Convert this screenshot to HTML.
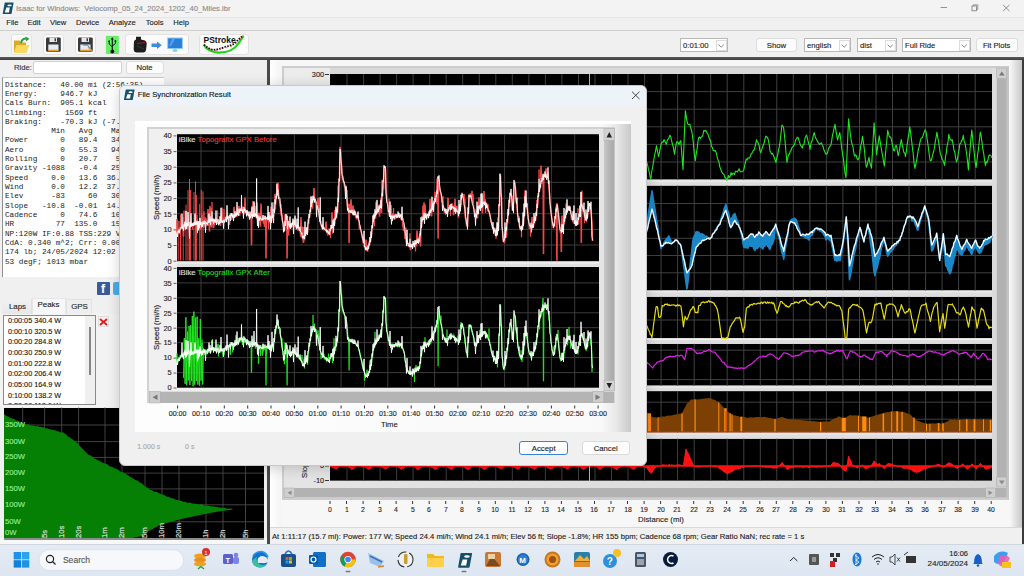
<!DOCTYPE html><html><head><meta charset="utf-8"><style>
*{margin:0;padding:0;box-sizing:border-box}
html,body{width:1024px;height:576px;overflow:hidden;background:#f0f0f0;font-family:"Liberation Sans",sans-serif;}
.t{position:absolute;white-space:pre;font-size:9px;line-height:10px;color:#1a1a1a;-webkit-text-stroke:0.12px currentColor}
.m{position:absolute;white-space:pre;font-family:"Liberation Mono",monospace;font-size:7.7px;line-height:9.32px;color:#222}
svg{position:absolute;left:0;top:0}
</style></head><body>
<div style="position:absolute;left:0px;top:0px;width:1024px;height:17px;background:#f3f3f3"></div>
<div style="position:absolute;left:0px;top:17px;width:1024px;height:13px;background:#f0f0f0"></div>
<div style="position:absolute;left:0px;top:17px;width:1024px;height:1px;background:#e6e6e6"></div>
<div style="position:absolute;left:0px;top:29.6px;width:1024px;height:1.1999999999999993px;background:#cdcdcd"></div>
<div style="position:absolute;left:0px;top:31px;width:1024px;height:26px;background:#f0f0f0"></div>
<div style="position:absolute;left:0px;top:57px;width:1024px;height:3px;background:linear-gradient(#5a5a5a,#3e3e3e)"></div>
<svg width="20" height="20" style="left:0px;top:0px"><path d="M5.2 2.6 L13.2 2.6 Q13.6 2.6 13.5 3.2 L11.6 13.4 Q11.5 14 10.9 14 L3.2 14 Q2.7 14 2.8 13.4 L4.6 3.2 Q4.7 2.6 5.2 2.6 Z" fill="#15506a"/><ellipse cx="9.6" cy="5.4" rx="2.2" ry="0.9" fill="#fff"/><path d="M6.3 7.6 L9.8 7.6 L9 12.4 L4.8 12.4 Z" fill="#fff"/></svg>
<div class="t" style="left:16px;transform-origin:0 50%;top:4px;font-size:7.6px;color:#8a8a8a;">Isaac for Windows:  Velocomp_05_24_2024_1202_40_Miles.ibr</div>
<svg width="1024" height="17"><line x1="940.6" y1="7.5" x2="947" y2="7.5" stroke="#777" stroke-width="0.8"/><rect x="972" y="6" width="4.6" height="4.8" fill="none" stroke="#777" stroke-width="0.8"/><path d="M973.4 6 L973.4 4.8 L977.8 4.8 L977.8 9.4 L976.6 9.4" fill="none" stroke="#777" stroke-width="0.7"/><path d="M1003 4.8 L1009.5 11.2 M1009.5 4.8 L1003 11.2" stroke="#777" stroke-width="0.8"/></svg>
<div class="t" style="left:6.25px;transform-origin:0 50%;top:17.9px;font-size:7.6px;color:#222;">File</div>
<div class="t" style="left:27.5px;transform-origin:0 50%;top:17.9px;font-size:7.6px;color:#222;">Edit</div>
<div class="t" style="left:50px;transform-origin:0 50%;top:17.9px;font-size:7.6px;color:#222;">View</div>
<div class="t" style="left:76px;transform-origin:0 50%;top:17.9px;font-size:7.6px;color:#222;">Device</div>
<div class="t" style="left:108.75px;transform-origin:0 50%;top:17.9px;font-size:7.6px;color:#222;">Analyze</div>
<div class="t" style="left:145.75px;transform-origin:0 50%;top:17.9px;font-size:7.6px;color:#222;">Tools</div>
<div class="t" style="left:173.25px;transform-origin:0 50%;top:17.9px;font-size:7.6px;color:#222;">Help</div>
<div style="position:absolute;left:11px;top:34px;width:21px;height:21px;background:#fbfbfb;border:1px solid #e2e2e2;border-radius:3px"></div>
<div style="position:absolute;left:43px;top:34px;width:21px;height:21px;background:#fbfbfb;border:1px solid #e2e2e2;border-radius:3px"></div>
<div style="position:absolute;left:75px;top:34px;width:21px;height:21px;background:#fbfbfb;border:1px solid #e2e2e2;border-radius:3px"></div>
<div style="position:absolute;left:125px;top:34px;width:64px;height:21px;background:#fbfbfb;border:1px solid #e2e2e2;border-radius:3px"></div>
<div style="position:absolute;left:199px;top:34px;width:50px;height:21px;background:#fbfbfb;border:1px solid #e2e2e2;border-radius:3px"></div>
<svg width="260" height="60">
<path d="M14 40.5 L19.5 40.5 L21 42.5 L26 42.5 L26 52.8 L14 52.8 Z" fill="#e0a820"/>
<path d="M16.5 45 L29.5 45 L26.5 53 L13.8 53 Z" fill="#fad860"/>
<path d="M21 43 Q22 38 27 38.5" stroke="#30a040" stroke-width="2" fill="none"/><path d="M25.5 36.5 L29.5 38.8 L26 41.5 Z" fill="#30a040"/>
<rect x="46" y="37.6" width="14.8" height="14.1" rx="1.2" fill="#3a3a3a"/>
<rect x="49.5" y="37.6" width="7.5" height="4.4" fill="#e8e8e8"/><rect x="54.5" y="38.3" width="1.5" height="3" fill="#3a3a3a"/>
<rect x="48.3" y="44.5" width="10.2" height="6" fill="#e6ecf2"/>
<rect x="48.3" y="49.6" width="10.2" height="1.3" fill="#f0a030"/>
<rect x="78" y="37.6" width="14.8" height="14.1" rx="1.2" fill="#3a3a3a"/>
<rect x="81.5" y="37.6" width="7.5" height="4.4" fill="#e8e8e8"/><rect x="86.5" y="38.3" width="1.5" height="3" fill="#3a3a3a"/>
<rect x="80.3" y="44.5" width="10.2" height="6" fill="#e6ecf2"/>
<rect x="80.3" y="49.6" width="10.2" height="1.3" fill="#f0a030"/>
<path d="M83 45 L87.5 45 L92 51" stroke="#3a70c0" stroke-width="1" fill="none"/><path d="M88 47 L92.5 51.5" stroke="#e0a040" stroke-width="1.5"/>
<rect x="105.9" y="35.9" width="12.9" height="18.1" fill="#66ee66"/>
<path d="M112.3 38 L112.3 51" stroke="#111" stroke-width="1.1"/><path d="M110.8 39.5 L112.3 37.3 L113.8 39.5 Z" fill="#111"/>
<path d="M109.2 41.5 L109.2 44 L112.3 47 M115.4 41 L115.4 43.5 L112.3 46" stroke="#111" stroke-width="1" fill="none"/>
<rect x="108.4" y="40.5" width="1.6" height="1.6" fill="#111"/><circle cx="115.4" cy="41" r="0.9" fill="#111"/>
<circle cx="112.3" cy="51.5" r="1.9" fill="#111"/>
<path d="M136 36.8 L141 36.8 L141 39.5 L145 40.5 Q147 41.5 146.7 44 L146 50 Q145.5 52.6 142 52.6 L137 52.6 Q133.7 52.6 133.7 49 L133.9 42 Q134 40 136 39.5 Z" fill="#1e1e1e"/>
<path d="M137 43.5 L145 42.5" stroke="#b02020" stroke-width="0.9"/><path d="M137 46 L144 49" stroke="#444" stroke-width="0.6"/>
<path d="M151.5 43.6 L157 43.6 L157 41.6 L161.7 45.3 L157 49.1 L157 47.1 L151.5 47.1 Z" fill="#3a8ee0"/>
<rect x="167.2" y="37.5" width="15.7" height="11.5" fill="#8ac8f4"/><rect x="168.2" y="38.5" width="13.7" height="9.5" fill="#2a7ed8"/>
<path d="M169 46 L172 39 L175 39 L171 46 Z" fill="#6ab0f0" opacity="0.7"/>
<path d="M173.5 49 L176.6 49 L177.5 51.8 L172.5 51.8 Z" fill="#8ac8f4"/>
<text x="203.5" y="43.3" font-family="Liberation Sans" font-weight="bold" font-size="8.5" fill="#111">PStroke</text>
<path d="M203.5 44.5 Q208 52 218 52.6 Q232 53 238 44 Q241 40 243.5 36" stroke="#18d818" stroke-width="2.2" fill="none"/>
<path d="M204 44.8 L208 48 L213 50 L217 49.5 L221 48.5 L225 47 L229 46 L234 44 L238 40 L242 36.5" stroke="#111" stroke-width="1.8" fill="none" stroke-dasharray="1.6 1.2"/>
<circle cx="205.5" cy="46" r="0.8" fill="#ff6060"/><circle cx="210.5" cy="49.4" r="0.8" fill="#ff6060"/><circle cx="216" cy="50.5" r="0.8" fill="#ff6060"/><circle cx="221" cy="48.3" r="0.8" fill="#ff6060"/><circle cx="226" cy="47.5" r="0.8" fill="#ff6060"/><circle cx="231" cy="46.5" r="0.8" fill="#ff6060"/><circle cx="236.5" cy="43" r="0.8" fill="#ff6060"/><circle cx="241" cy="38.5" r="0.8" fill="#ff6060"/><circle cx="243" cy="36" r="0.8" fill="#ff6060"/>
</svg>
<div style="position:absolute;left:680px;top:38px;width:48px;height:14px;background:#fff;border:1px solid #b8b8b8"></div><div style="position:absolute;left:716px;top:39.5px;width:10.5px;height:11.0px;background:#fff;border:1px solid #dcdcdc"></div><svg width="1024" height="60"><path d="M718.6 44.6 L721.2 47.2 L723.8000000000001 44.6" stroke="#666" stroke-width="0.8" fill="none"/></svg><div class="t" style="left:683px;transform-origin:0 50%;top:40.5px;font-size:7.7px;color:#222;">0:01:00</div>
<div style="position:absolute;left:756px;top:38px;width:41px;height:14px;background:#fbfbfb;border:1px solid #dcdcdc;border-radius:3px"></div>
<div class="t" style="left:776.5px;transform:translateX(-50%);top:40.5px;font-size:7.8px;color:#222;">Show</div>
<div style="position:absolute;left:804px;top:38px;width:47px;height:14px;background:#fff;border:1px solid #b8b8b8"></div><div style="position:absolute;left:839px;top:39.5px;width:10.5px;height:11.0px;background:#fff;border:1px solid #dcdcdc"></div><svg width="1024" height="60"><path d="M841.6 44.6 L844.2 47.2 L846.8000000000001 44.6" stroke="#666" stroke-width="0.8" fill="none"/></svg><div class="t" style="left:807px;transform-origin:0 50%;top:40.5px;font-size:7.7px;color:#222;">english</div>
<div style="position:absolute;left:857px;top:38px;width:40px;height:14px;background:#fff;border:1px solid #b8b8b8"></div><div style="position:absolute;left:885px;top:39.5px;width:10.5px;height:11.0px;background:#fff;border:1px solid #dcdcdc"></div><svg width="1024" height="60"><path d="M887.6 44.6 L890.2 47.2 L892.8000000000001 44.6" stroke="#666" stroke-width="0.8" fill="none"/></svg><div class="t" style="left:860px;transform-origin:0 50%;top:40.5px;font-size:7.7px;color:#222;">dist</div>
<div style="position:absolute;left:902px;top:38px;width:69px;height:14px;background:#fff;border:1px solid #b8b8b8"></div><div style="position:absolute;left:959px;top:39.5px;width:10.5px;height:11.0px;background:#fff;border:1px solid #dcdcdc"></div><svg width="1024" height="60"><path d="M961.6 44.6 L964.2 47.2 L966.8000000000001 44.6" stroke="#666" stroke-width="0.8" fill="none"/></svg><div class="t" style="left:905px;transform-origin:0 50%;top:40.5px;font-size:7.7px;color:#222;">Full Ride</div>
<div style="position:absolute;left:976px;top:38px;width:42px;height:14px;background:#fbfbfb;border:1px solid #dcdcdc;border-radius:3px"></div>
<div class="t" style="left:996.7px;transform:translateX(-50%);top:40.5px;font-size:7.6px;color:#222;">Fit Plots</div>
<div class="t" style="left:14px;transform-origin:0 50%;top:62.599999999999994px;font-size:7.7px;color:#333;">Ride:</div>
<div style="position:absolute;left:33px;top:61px;width:89px;height:13px;background:#fff;border:1px solid #d0d0d0;border-radius:2px"></div>
<div style="position:absolute;left:126px;top:61px;width:38px;height:13px;background:#fbfbfb;border:1px solid #dcdcdc;border-radius:3px"></div>
<div class="t" style="left:144.5px;transform:translateX(-50%);top:62.7px;font-size:7.7px;color:#222;">Note</div>
<div style="position:absolute;left:164px;top:60px;width:103px;height:238px;background:linear-gradient(#efefef,#e6e6e6)"></div>
<div style="position:absolute;left:2px;top:77px;width:162px;height:200px;background:#fff;border-left:1px solid #909090;border-top:1px solid #c8c8c8"></div>
<div class="m" style="left:5px;top:80.54px">Distance:   40.00 mi (2:56:35)</div>
<div class="m" style="left:5px;top:89.86px">Energy:     946.7 kJ</div>
<div class="m" style="left:5px;top:99.18px">Cals Burn:  905.1 kcal</div>
<div class="m" style="left:5px;top:108.50px">Climbing:    1569 ft</div>
<div class="m" style="left:5px;top:117.82px">Braking:    -70.3 kJ (-7.1%)</div>
<div class="m" style="left:5px;top:127.14px">          Min   Avg    Max</div>
<div class="m" style="left:5px;top:136.46px">Power       0   89.4   340</div>
<div class="m" style="left:5px;top:145.78px">Aero        0   55.3   94</div>
<div class="m" style="left:5px;top:155.10px">Rolling     0   20.7    50</div>
<div class="m" style="left:5px;top:164.42px">Gravity -1088   -0.4   250</div>
<div class="m" style="left:5px;top:173.74px">Speed     0.0   13.6  36.5</div>
<div class="m" style="left:5px;top:183.06px">Wind      0.0   12.2  37.</div>
<div class="m" style="left:5px;top:192.38px">Elev      -83     60   30</div>
<div class="m" style="left:5px;top:201.70px">Slope   -10.8  -0.01  14.</div>
<div class="m" style="left:5px;top:211.02px">Cadence     0   74.6   10</div>
<div class="m" style="left:5px;top:220.34px">HR         77  135.0   15</div>
<div class="m" style="left:5px;top:229.66px">NP:120W IF:0.88 TSS:229 VI</div>
<div class="m" style="left:5px;top:238.98px">CdA: 0.340 m^2; Crr: 0.006</div>
<div class="m" style="left:5px;top:248.30px">174 lb; 24/05/2024 12:02</div>
<div class="m" style="left:5px;top:257.62px">53 degF; 1013 mbar</div>
<div style="position:absolute;left:97px;top:282px;width:13px;height:13px;background:#3b5a9a;border-radius:1px"></div>
<div class="t" style="left:101px;top:282px;color:#fff;font-weight:bold;font-size:12px;line-height:14px">f</div>
<div style="position:absolute;left:113px;top:282px;width:13px;height:13px;background:#4aaee8;border-radius:2px"></div>
<div style="position:absolute;left:2px;top:299px;width:30px;height:15px;background:linear-gradient(#f0f0f0,#e8e8e8);border-right:1px solid #e0e0e0"></div>
<div style="position:absolute;left:32px;top:297.5px;width:34px;height:17.5px;background:#f7f7f7;border:1px solid #e6e6e6;border-bottom:none"></div>
<div style="position:absolute;left:66px;top:299px;width:26px;height:15px;background:#efefef;border:1px solid #e2e2e2;border-bottom:none"></div>
<div class="t" style="left:17.5px;transform:translateX(-50%);top:301.9px;font-size:7.9px;color:#222;">Laps</div>
<div class="t" style="left:48.5px;transform:translateX(-50%);top:300.2px;font-size:7.9px;color:#222;">Peaks</div>
<div class="t" style="left:79.5px;transform:translateX(-50%);top:301.9px;font-size:7.9px;color:#222;">GPS</div>
<div style="position:absolute;left:0px;top:314px;width:119px;height:93px;background:#f3f3f3"></div>
<div style="position:absolute;left:3px;top:315px;width:93px;height:90px;background:#fff;border:1px solid #8a8a8a"></div>
<div style="position:absolute;left:84.5px;top:316px;width:10.5px;height:88px;background:#f0f0f0"></div>
<div style="position:absolute;left:89px;top:327px;width:1.5px;height:48px;background:#858585"></div>
<div style="position:absolute;left:4px;top:316px;width:80px;height:88px;overflow:hidden">
<div class="t" style="left:3.9000000000000004px;transform-origin:0 50%;transform: scaleX(0.895);top:0.19999999999998863px;font-size:8.1px;color:#111;">0:00:05 340.4 W</div>
<div class="t" style="left:3.9000000000000004px;transform-origin:0 50%;transform: scaleX(0.895);top:10.829999999999984px;font-size:8.1px;color:#111;">0:00:10 320.5 W</div>
<div class="t" style="left:3.9000000000000004px;transform-origin:0 50%;transform: scaleX(0.895);top:21.45999999999998px;font-size:8.1px;color:#111;">0:00:20 284.8 W</div>
<div class="t" style="left:3.9000000000000004px;transform-origin:0 50%;transform: scaleX(0.895);top:32.089999999999975px;font-size:8.1px;color:#111;">0:00:30 250.9 W</div>
<div class="t" style="left:3.9000000000000004px;transform-origin:0 50%;transform: scaleX(0.895);top:42.71999999999997px;font-size:8.1px;color:#111;">0:01:00 222.8 W</div>
<div class="t" style="left:3.9000000000000004px;transform-origin:0 50%;transform: scaleX(0.895);top:53.35000000000002px;font-size:8.1px;color:#111;">0:02:00 206.4 W</div>
<div class="t" style="left:3.9000000000000004px;transform-origin:0 50%;transform: scaleX(0.895);top:63.98000000000002px;font-size:8.1px;color:#111;">0:05:00 164.9 W</div>
<div class="t" style="left:3.9000000000000004px;transform-origin:0 50%;transform: scaleX(0.895);top:74.61000000000001px;font-size:8.1px;color:#111;">0:10:00 138.2 W</div>
<div class="t" style="left:3.9000000000000004px;transform-origin:0 50%;transform: scaleX(0.895);top:85.24000000000001px;font-size:8.1px;color:#111;">0:20:00 118.6 W</div>
</div>
<div style="position:absolute;left:98px;top:316px;width:11px;height:11px;background:#f4f4f4;border:1px solid #ddd"></div>
<svg width="120" height="330"><path d="M100 319 L107 325 M107 319 L100 325" stroke="#e02020" stroke-width="2"/></svg>
<div style="position:absolute;left:4px;top:407.5px;width:260px;height:130.5px;background:#000"></div>
<svg width="270" height="545"><line x1="22.7" y1="407.5" x2="22.7" y2="538" stroke="#4a4a4a" stroke-width="0.9"/><line x1="44.6" y1="407.5" x2="44.6" y2="538" stroke="#4a4a4a" stroke-width="0.9"/><line x1="61.7" y1="407.5" x2="61.7" y2="538" stroke="#4a4a4a" stroke-width="0.9"/><line x1="78.6" y1="407.5" x2="78.6" y2="538" stroke="#4a4a4a" stroke-width="0.9"/><line x1="105" y1="407.5" x2="105" y2="538" stroke="#4a4a4a" stroke-width="0.9"/><line x1="122" y1="407.5" x2="122" y2="538" stroke="#4a4a4a" stroke-width="0.9"/><line x1="145" y1="407.5" x2="145" y2="538" stroke="#4a4a4a" stroke-width="0.9"/><line x1="162" y1="407.5" x2="162" y2="538" stroke="#4a4a4a" stroke-width="0.9"/><line x1="179" y1="407.5" x2="179" y2="538" stroke="#4a4a4a" stroke-width="0.9"/><line x1="206" y1="407.5" x2="206" y2="538" stroke="#4a4a4a" stroke-width="0.9"/><line x1="223" y1="407.5" x2="223" y2="538" stroke="#4a4a4a" stroke-width="0.9"/><line x1="245.5" y1="407.5" x2="245.5" y2="538" stroke="#4a4a4a" stroke-width="0.9"/><line x1="4" y1="425" x2="264" y2="425" stroke="#4a4a4a" stroke-width="0.9"/><line x1="4" y1="441.6" x2="264" y2="441.6" stroke="#4a4a4a" stroke-width="0.9"/><line x1="4" y1="457.4" x2="264" y2="457.4" stroke="#4a4a4a" stroke-width="0.9"/><line x1="4" y1="473.1" x2="264" y2="473.1" stroke="#4a4a4a" stroke-width="0.9"/><line x1="4" y1="488.9" x2="264" y2="488.9" stroke="#4a4a4a" stroke-width="0.9"/><line x1="4" y1="504.8" x2="264" y2="504.8" stroke="#4a4a4a" stroke-width="0.9"/><line x1="4" y1="521.8" x2="264" y2="521.8" stroke="#4a4a4a" stroke-width="0.9"/><polygon points="4.0,414.3 5.7,415.5 7.4,416.2 9.2,417.3 10.9,418.2 12.6,418.5 14.2,419.1 15.8,420.5 17.3,420.6 18.9,421.2 20.5,422.6 22.0,422.7 23.6,423.7 25.2,424.0 26.8,424.4 28.3,424.3 29.9,425.0 31.5,425.6 33.1,425.5 34.6,426.0 36.2,426.3 37.8,426.0 39.4,427.0 40.9,427.1 42.5,427.2 44.1,427.2 45.7,428.4 47.2,428.3 48.8,428.9 50.4,429.4 52.0,429.7 53.5,430.3 55.1,430.3 56.7,431.2 58.3,431.3 59.9,432.2 61.4,432.6 63.0,432.3 64.6,433.4 66.2,434.6 67.7,436.5 69.3,437.1 70.9,438.4 72.4,439.2 74.0,440.5 75.6,441.5 77.2,443.0 78.8,444.8 80.3,446.4 81.9,448.3 83.5,449.7 85.0,451.5 86.6,453.0 88.2,454.7 89.8,455.3 91.3,455.7 92.9,457.4 94.5,458.4 96.1,459.3 97.7,459.9 99.2,461.0 100.8,461.4 102.4,462.8 104.1,463.3 105.7,463.8 107.3,464.3 108.9,465.8 110.6,466.7 112.2,466.6 113.7,468.1 115.2,468.4 116.7,468.9 118.2,469.8 119.8,471.1 121.3,471.9 122.8,471.9 124.3,473.2 125.8,473.6 127.3,475.1 128.9,475.7 130.4,477.1 131.9,478.1 133.4,478.6 135.0,480.0 136.5,480.2 138.0,481.0 139.6,482.6 141.1,483.1 142.6,484.3 144.1,485.6 145.6,486.9 147.2,487.5 148.7,488.4 150.2,489.9 151.7,489.9 153.2,491.2 154.8,491.7 156.3,491.8 157.8,492.5 159.3,493.2 160.8,493.9 162.3,494.5 163.9,495.1 165.4,495.8 166.9,496.7 168.4,496.9 169.9,497.4 171.5,498.3 173.0,498.4 174.5,499.0 176.1,500.1 177.6,500.1 179.1,500.5 180.6,500.5 182.1,501.3 183.7,501.9 185.2,501.8 186.7,502.6 188.3,502.9 189.8,502.5 191.4,503.3 192.9,503.4 194.5,503.8 196.0,503.7 197.6,504.3 199.1,504.6 200.7,504.1 202.2,504.4 203.8,505.2 205.4,505.8 207.1,505.4 208.7,505.8 210.3,506.2 211.9,506.2 213.6,506.5 215.2,506.7 216.8,507.1 218.4,507.5 220.0,507.4 221.5,507.6 223.1,508.2 224.7,507.7 226.3,508.4 227.9,508.8 229.4,508.5 231.0,508.6 232.6,509.1 232.6,509.4 216.8,511.7 197.3,515.4 180.3,519.3 160.8,524.4 148.7,531.1 141.4,536.2 134.0,537.6 134.0,538.0 4.0,538.0" fill="#058005"/></svg>
<div class="t" style="left:5px;transform-origin:0 50%;top:420.2px;font-size:7.7px;color:#98f098;">350W</div>
<div class="t" style="left:5px;transform-origin:0 50%;top:436.6px;font-size:7.7px;color:#98f098;">300W</div>
<div class="t" style="left:5px;transform-origin:0 50%;top:452.4px;font-size:7.7px;color:#98f098;">250W</div>
<div class="t" style="left:5px;transform-origin:0 50%;top:468.1px;font-size:7.7px;color:#98f098;">200W</div>
<div class="t" style="left:5px;transform-origin:0 50%;top:483.9px;font-size:7.7px;color:#98f098;">150W</div>
<div class="t" style="left:5px;transform-origin:0 50%;top:499.8px;font-size:7.7px;color:#98f098;">100W</div>
<div class="t" style="left:5px;transform-origin:0 50%;top:516.8px;font-size:7.7px;color:#98f098;">50W</div>
<div class="t" style="left:5px;transform-origin:0 50%;top:527.8px;font-size:7.7px;color:#98f098;">0W</div>
<div class="t" style="left:39.6px;top:537.5px;transform-origin:0 0;transform:rotate(-90deg);color:#e0e8e0;font-size:7.7px">5s</div>
<div class="t" style="left:56.7px;top:537.5px;transform-origin:0 0;transform:rotate(-90deg);color:#e0e8e0;font-size:7.7px">10s</div>
<div class="t" style="left:73.6px;top:537.5px;transform-origin:0 0;transform:rotate(-90deg);color:#e0e8e0;font-size:7.7px">20s</div>
<div class="t" style="left:100px;top:537.5px;transform-origin:0 0;transform:rotate(-90deg);color:#e0e8e0;font-size:7.7px">1m</div>
<div class="t" style="left:117px;top:537.5px;transform-origin:0 0;transform:rotate(-90deg);color:#e0e8e0;font-size:7.7px">2m</div>
<div class="t" style="left:140px;top:537.5px;transform-origin:0 0;transform:rotate(-90deg);color:#e0e8e0;font-size:7.7px">5m</div>
<div class="t" style="left:157px;top:537.5px;transform-origin:0 0;transform:rotate(-90deg);color:#e0e8e0;font-size:7.7px">10m</div>
<div class="t" style="left:174px;top:537.5px;transform-origin:0 0;transform:rotate(-90deg);color:#e0e8e0;font-size:7.7px">20m</div>
<div class="t" style="left:201px;top:537.5px;transform-origin:0 0;transform:rotate(-90deg);color:#e0e8e0;font-size:7.7px">1h</div>
<div class="t" style="left:218px;top:537.5px;transform-origin:0 0;transform:rotate(-90deg);color:#e0e8e0;font-size:7.7px">2h</div>
<div class="t" style="left:240.5px;top:537.5px;transform-origin:0 0;transform:rotate(-90deg);color:#e0e8e0;font-size:7.7px">5h</div>
<div style="position:absolute;left:0px;top:538px;width:267px;height:6px;background:#f8f8f8"></div>
<div style="position:absolute;left:3.5px;top:538.3px;width:260.5px;height:1.7000000000000455px;background:#8c8c8c"></div>
<div style="position:absolute;left:267px;top:60px;width:3px;height:484px;background:#4a4a4a"></div>
<div style="position:absolute;left:270px;top:60px;width:754px;height:467px;background:#f7f7f7"></div>
<div style="position:absolute;left:270px;top:60px;width:11px;height:467px;background:linear-gradient(90deg,#fff,#f4f4f4)"></div>
<div style="position:absolute;left:1010px;top:60px;width:12px;height:467px;background:linear-gradient(90deg,#f6f6f6,#c8c8c8)"></div>
<div style="position:absolute;left:1022px;top:60px;width:2px;height:484px;background:#3a3a3a"></div>
<div style="position:absolute;left:281.5px;top:65.5px;width:727.5px;height:434.5px;background:linear-gradient(#e2e2e2,#d8d8d8);border:2px solid #cdcdcd;border-right-color:#c4c4c4"></div>
<div style="position:absolute;left:283.5px;top:68px;width:723.5px;height:430px;background:linear-gradient(135deg,#ececec,#d6d6d6)"></div>
<svg width="1024" height="576"><rect x="330" y="68" width="662" height="413" fill="#d9d9d9"/><rect x="330" y="74" width="662" height="105.6" fill="#000"/><rect x="330" y="185.6" width="662" height="104.79999999999998" fill="#000"/><rect x="330" y="296.8" width="662" height="41.19999999999999" fill="#000"/><rect x="330" y="343.9" width="662" height="41.700000000000045" fill="#000"/><rect x="330" y="391.1" width="662" height="41.19999999999999" fill="#000"/><rect x="330" y="438.7" width="662" height="41.900000000000034" fill="#000"/><rect x="330" y="179.6" width="662" height="6.0" fill="#dedede"/><line x1="330" y1="181.1" x2="992" y2="181.1" stroke="#f0f0f0" stroke-width="1"/><rect x="330" y="290.4" width="662" height="6.400000000000034" fill="#dedede"/><line x1="330" y1="291.9" x2="992" y2="291.9" stroke="#f0f0f0" stroke-width="1"/><rect x="330" y="338" width="662" height="5.899999999999977" fill="#dedede"/><line x1="330" y1="339.5" x2="992" y2="339.5" stroke="#f0f0f0" stroke-width="1"/><rect x="330" y="385.6" width="662" height="5.5" fill="#dedede"/><line x1="330" y1="387.1" x2="992" y2="387.1" stroke="#f0f0f0" stroke-width="1"/><rect x="330" y="432.3" width="662" height="6.399999999999977" fill="#dedede"/><line x1="330" y1="433.8" x2="992" y2="433.8" stroke="#f0f0f0" stroke-width="1"/><line x1="347.0" y1="74" x2="347.0" y2="179.6" stroke="#404040" stroke-width="1"/><line x1="363.6" y1="74" x2="363.6" y2="179.6" stroke="#404040" stroke-width="1"/><line x1="380.1" y1="74" x2="380.1" y2="179.6" stroke="#404040" stroke-width="1"/><line x1="396.6" y1="74" x2="396.6" y2="179.6" stroke="#404040" stroke-width="1"/><line x1="413.1" y1="74" x2="413.1" y2="179.6" stroke="#404040" stroke-width="1"/><line x1="429.7" y1="74" x2="429.7" y2="179.6" stroke="#404040" stroke-width="1"/><line x1="446.2" y1="74" x2="446.2" y2="179.6" stroke="#404040" stroke-width="1"/><line x1="462.7" y1="74" x2="462.7" y2="179.6" stroke="#404040" stroke-width="1"/><line x1="479.3" y1="74" x2="479.3" y2="179.6" stroke="#404040" stroke-width="1"/><line x1="495.8" y1="74" x2="495.8" y2="179.6" stroke="#404040" stroke-width="1"/><line x1="512.3" y1="74" x2="512.3" y2="179.6" stroke="#404040" stroke-width="1"/><line x1="528.9" y1="74" x2="528.9" y2="179.6" stroke="#404040" stroke-width="1"/><line x1="545.4" y1="74" x2="545.4" y2="179.6" stroke="#404040" stroke-width="1"/><line x1="561.9" y1="74" x2="561.9" y2="179.6" stroke="#404040" stroke-width="1"/><line x1="578.5" y1="74" x2="578.5" y2="179.6" stroke="#404040" stroke-width="1"/><line x1="595.0" y1="74" x2="595.0" y2="179.6" stroke="#404040" stroke-width="1"/><line x1="611.5" y1="74" x2="611.5" y2="179.6" stroke="#404040" stroke-width="1"/><line x1="628.0" y1="74" x2="628.0" y2="179.6" stroke="#404040" stroke-width="1"/><line x1="644.6" y1="74" x2="644.6" y2="179.6" stroke="#404040" stroke-width="1"/><line x1="661.1" y1="74" x2="661.1" y2="179.6" stroke="#404040" stroke-width="1"/><line x1="677.6" y1="74" x2="677.6" y2="179.6" stroke="#404040" stroke-width="1"/><line x1="694.2" y1="74" x2="694.2" y2="179.6" stroke="#404040" stroke-width="1"/><line x1="710.7" y1="74" x2="710.7" y2="179.6" stroke="#404040" stroke-width="1"/><line x1="727.2" y1="74" x2="727.2" y2="179.6" stroke="#404040" stroke-width="1"/><line x1="743.8" y1="74" x2="743.8" y2="179.6" stroke="#404040" stroke-width="1"/><line x1="760.3" y1="74" x2="760.3" y2="179.6" stroke="#404040" stroke-width="1"/><line x1="776.8" y1="74" x2="776.8" y2="179.6" stroke="#404040" stroke-width="1"/><line x1="793.3" y1="74" x2="793.3" y2="179.6" stroke="#404040" stroke-width="1"/><line x1="809.9" y1="74" x2="809.9" y2="179.6" stroke="#404040" stroke-width="1"/><line x1="826.4" y1="74" x2="826.4" y2="179.6" stroke="#404040" stroke-width="1"/><line x1="842.9" y1="74" x2="842.9" y2="179.6" stroke="#404040" stroke-width="1"/><line x1="859.5" y1="74" x2="859.5" y2="179.6" stroke="#404040" stroke-width="1"/><line x1="876.0" y1="74" x2="876.0" y2="179.6" stroke="#404040" stroke-width="1"/><line x1="892.5" y1="74" x2="892.5" y2="179.6" stroke="#404040" stroke-width="1"/><line x1="909.1" y1="74" x2="909.1" y2="179.6" stroke="#404040" stroke-width="1"/><line x1="925.6" y1="74" x2="925.6" y2="179.6" stroke="#404040" stroke-width="1"/><line x1="942.1" y1="74" x2="942.1" y2="179.6" stroke="#404040" stroke-width="1"/><line x1="958.6" y1="74" x2="958.6" y2="179.6" stroke="#404040" stroke-width="1"/><line x1="975.2" y1="74" x2="975.2" y2="179.6" stroke="#404040" stroke-width="1"/><line x1="330" y1="91.6" x2="992" y2="91.6" stroke="#404040" stroke-width="1"/><line x1="330" y1="109.2" x2="992" y2="109.2" stroke="#404040" stroke-width="1"/><line x1="330" y1="126.8" x2="992" y2="126.8" stroke="#404040" stroke-width="1"/><line x1="330" y1="144.4" x2="992" y2="144.4" stroke="#404040" stroke-width="1"/><line x1="330" y1="162" x2="992" y2="162" stroke="#404040" stroke-width="1"/><line x1="347.0" y1="185.6" x2="347.0" y2="290.4" stroke="#404040" stroke-width="1"/><line x1="363.6" y1="185.6" x2="363.6" y2="290.4" stroke="#404040" stroke-width="1"/><line x1="380.1" y1="185.6" x2="380.1" y2="290.4" stroke="#404040" stroke-width="1"/><line x1="396.6" y1="185.6" x2="396.6" y2="290.4" stroke="#404040" stroke-width="1"/><line x1="413.1" y1="185.6" x2="413.1" y2="290.4" stroke="#404040" stroke-width="1"/><line x1="429.7" y1="185.6" x2="429.7" y2="290.4" stroke="#404040" stroke-width="1"/><line x1="446.2" y1="185.6" x2="446.2" y2="290.4" stroke="#404040" stroke-width="1"/><line x1="462.7" y1="185.6" x2="462.7" y2="290.4" stroke="#404040" stroke-width="1"/><line x1="479.3" y1="185.6" x2="479.3" y2="290.4" stroke="#404040" stroke-width="1"/><line x1="495.8" y1="185.6" x2="495.8" y2="290.4" stroke="#404040" stroke-width="1"/><line x1="512.3" y1="185.6" x2="512.3" y2="290.4" stroke="#404040" stroke-width="1"/><line x1="528.9" y1="185.6" x2="528.9" y2="290.4" stroke="#404040" stroke-width="1"/><line x1="545.4" y1="185.6" x2="545.4" y2="290.4" stroke="#404040" stroke-width="1"/><line x1="561.9" y1="185.6" x2="561.9" y2="290.4" stroke="#404040" stroke-width="1"/><line x1="578.5" y1="185.6" x2="578.5" y2="290.4" stroke="#404040" stroke-width="1"/><line x1="595.0" y1="185.6" x2="595.0" y2="290.4" stroke="#404040" stroke-width="1"/><line x1="611.5" y1="185.6" x2="611.5" y2="290.4" stroke="#404040" stroke-width="1"/><line x1="628.0" y1="185.6" x2="628.0" y2="290.4" stroke="#404040" stroke-width="1"/><line x1="644.6" y1="185.6" x2="644.6" y2="290.4" stroke="#404040" stroke-width="1"/><line x1="661.1" y1="185.6" x2="661.1" y2="290.4" stroke="#404040" stroke-width="1"/><line x1="677.6" y1="185.6" x2="677.6" y2="290.4" stroke="#404040" stroke-width="1"/><line x1="694.2" y1="185.6" x2="694.2" y2="290.4" stroke="#404040" stroke-width="1"/><line x1="710.7" y1="185.6" x2="710.7" y2="290.4" stroke="#404040" stroke-width="1"/><line x1="727.2" y1="185.6" x2="727.2" y2="290.4" stroke="#404040" stroke-width="1"/><line x1="743.8" y1="185.6" x2="743.8" y2="290.4" stroke="#404040" stroke-width="1"/><line x1="760.3" y1="185.6" x2="760.3" y2="290.4" stroke="#404040" stroke-width="1"/><line x1="776.8" y1="185.6" x2="776.8" y2="290.4" stroke="#404040" stroke-width="1"/><line x1="793.3" y1="185.6" x2="793.3" y2="290.4" stroke="#404040" stroke-width="1"/><line x1="809.9" y1="185.6" x2="809.9" y2="290.4" stroke="#404040" stroke-width="1"/><line x1="826.4" y1="185.6" x2="826.4" y2="290.4" stroke="#404040" stroke-width="1"/><line x1="842.9" y1="185.6" x2="842.9" y2="290.4" stroke="#404040" stroke-width="1"/><line x1="859.5" y1="185.6" x2="859.5" y2="290.4" stroke="#404040" stroke-width="1"/><line x1="876.0" y1="185.6" x2="876.0" y2="290.4" stroke="#404040" stroke-width="1"/><line x1="892.5" y1="185.6" x2="892.5" y2="290.4" stroke="#404040" stroke-width="1"/><line x1="909.1" y1="185.6" x2="909.1" y2="290.4" stroke="#404040" stroke-width="1"/><line x1="925.6" y1="185.6" x2="925.6" y2="290.4" stroke="#404040" stroke-width="1"/><line x1="942.1" y1="185.6" x2="942.1" y2="290.4" stroke="#404040" stroke-width="1"/><line x1="958.6" y1="185.6" x2="958.6" y2="290.4" stroke="#404040" stroke-width="1"/><line x1="975.2" y1="185.6" x2="975.2" y2="290.4" stroke="#404040" stroke-width="1"/><line x1="330" y1="203.5" x2="992" y2="203.5" stroke="#404040" stroke-width="1"/><line x1="330" y1="220.9" x2="992" y2="220.9" stroke="#404040" stroke-width="1"/><line x1="330" y1="238.3" x2="992" y2="238.3" stroke="#404040" stroke-width="1"/><line x1="330" y1="255.5" x2="992" y2="255.5" stroke="#404040" stroke-width="1"/><line x1="330" y1="272.8" x2="992" y2="272.8" stroke="#404040" stroke-width="1"/><line x1="347.0" y1="296.8" x2="347.0" y2="338" stroke="#404040" stroke-width="1"/><line x1="363.6" y1="296.8" x2="363.6" y2="338" stroke="#404040" stroke-width="1"/><line x1="380.1" y1="296.8" x2="380.1" y2="338" stroke="#404040" stroke-width="1"/><line x1="396.6" y1="296.8" x2="396.6" y2="338" stroke="#404040" stroke-width="1"/><line x1="413.1" y1="296.8" x2="413.1" y2="338" stroke="#404040" stroke-width="1"/><line x1="429.7" y1="296.8" x2="429.7" y2="338" stroke="#404040" stroke-width="1"/><line x1="446.2" y1="296.8" x2="446.2" y2="338" stroke="#404040" stroke-width="1"/><line x1="462.7" y1="296.8" x2="462.7" y2="338" stroke="#404040" stroke-width="1"/><line x1="479.3" y1="296.8" x2="479.3" y2="338" stroke="#404040" stroke-width="1"/><line x1="495.8" y1="296.8" x2="495.8" y2="338" stroke="#404040" stroke-width="1"/><line x1="512.3" y1="296.8" x2="512.3" y2="338" stroke="#404040" stroke-width="1"/><line x1="528.9" y1="296.8" x2="528.9" y2="338" stroke="#404040" stroke-width="1"/><line x1="545.4" y1="296.8" x2="545.4" y2="338" stroke="#404040" stroke-width="1"/><line x1="561.9" y1="296.8" x2="561.9" y2="338" stroke="#404040" stroke-width="1"/><line x1="578.5" y1="296.8" x2="578.5" y2="338" stroke="#404040" stroke-width="1"/><line x1="595.0" y1="296.8" x2="595.0" y2="338" stroke="#404040" stroke-width="1"/><line x1="611.5" y1="296.8" x2="611.5" y2="338" stroke="#404040" stroke-width="1"/><line x1="628.0" y1="296.8" x2="628.0" y2="338" stroke="#404040" stroke-width="1"/><line x1="644.6" y1="296.8" x2="644.6" y2="338" stroke="#404040" stroke-width="1"/><line x1="661.1" y1="296.8" x2="661.1" y2="338" stroke="#404040" stroke-width="1"/><line x1="677.6" y1="296.8" x2="677.6" y2="338" stroke="#404040" stroke-width="1"/><line x1="694.2" y1="296.8" x2="694.2" y2="338" stroke="#404040" stroke-width="1"/><line x1="710.7" y1="296.8" x2="710.7" y2="338" stroke="#404040" stroke-width="1"/><line x1="727.2" y1="296.8" x2="727.2" y2="338" stroke="#404040" stroke-width="1"/><line x1="743.8" y1="296.8" x2="743.8" y2="338" stroke="#404040" stroke-width="1"/><line x1="760.3" y1="296.8" x2="760.3" y2="338" stroke="#404040" stroke-width="1"/><line x1="776.8" y1="296.8" x2="776.8" y2="338" stroke="#404040" stroke-width="1"/><line x1="793.3" y1="296.8" x2="793.3" y2="338" stroke="#404040" stroke-width="1"/><line x1="809.9" y1="296.8" x2="809.9" y2="338" stroke="#404040" stroke-width="1"/><line x1="826.4" y1="296.8" x2="826.4" y2="338" stroke="#404040" stroke-width="1"/><line x1="842.9" y1="296.8" x2="842.9" y2="338" stroke="#404040" stroke-width="1"/><line x1="859.5" y1="296.8" x2="859.5" y2="338" stroke="#404040" stroke-width="1"/><line x1="876.0" y1="296.8" x2="876.0" y2="338" stroke="#404040" stroke-width="1"/><line x1="892.5" y1="296.8" x2="892.5" y2="338" stroke="#404040" stroke-width="1"/><line x1="909.1" y1="296.8" x2="909.1" y2="338" stroke="#404040" stroke-width="1"/><line x1="925.6" y1="296.8" x2="925.6" y2="338" stroke="#404040" stroke-width="1"/><line x1="942.1" y1="296.8" x2="942.1" y2="338" stroke="#404040" stroke-width="1"/><line x1="958.6" y1="296.8" x2="958.6" y2="338" stroke="#404040" stroke-width="1"/><line x1="975.2" y1="296.8" x2="975.2" y2="338" stroke="#404040" stroke-width="1"/><line x1="330" y1="320" x2="992" y2="320" stroke="#404040" stroke-width="1"/><line x1="347.0" y1="343.9" x2="347.0" y2="385.6" stroke="#404040" stroke-width="1"/><line x1="363.6" y1="343.9" x2="363.6" y2="385.6" stroke="#404040" stroke-width="1"/><line x1="380.1" y1="343.9" x2="380.1" y2="385.6" stroke="#404040" stroke-width="1"/><line x1="396.6" y1="343.9" x2="396.6" y2="385.6" stroke="#404040" stroke-width="1"/><line x1="413.1" y1="343.9" x2="413.1" y2="385.6" stroke="#404040" stroke-width="1"/><line x1="429.7" y1="343.9" x2="429.7" y2="385.6" stroke="#404040" stroke-width="1"/><line x1="446.2" y1="343.9" x2="446.2" y2="385.6" stroke="#404040" stroke-width="1"/><line x1="462.7" y1="343.9" x2="462.7" y2="385.6" stroke="#404040" stroke-width="1"/><line x1="479.3" y1="343.9" x2="479.3" y2="385.6" stroke="#404040" stroke-width="1"/><line x1="495.8" y1="343.9" x2="495.8" y2="385.6" stroke="#404040" stroke-width="1"/><line x1="512.3" y1="343.9" x2="512.3" y2="385.6" stroke="#404040" stroke-width="1"/><line x1="528.9" y1="343.9" x2="528.9" y2="385.6" stroke="#404040" stroke-width="1"/><line x1="545.4" y1="343.9" x2="545.4" y2="385.6" stroke="#404040" stroke-width="1"/><line x1="561.9" y1="343.9" x2="561.9" y2="385.6" stroke="#404040" stroke-width="1"/><line x1="578.5" y1="343.9" x2="578.5" y2="385.6" stroke="#404040" stroke-width="1"/><line x1="595.0" y1="343.9" x2="595.0" y2="385.6" stroke="#404040" stroke-width="1"/><line x1="611.5" y1="343.9" x2="611.5" y2="385.6" stroke="#404040" stroke-width="1"/><line x1="628.0" y1="343.9" x2="628.0" y2="385.6" stroke="#404040" stroke-width="1"/><line x1="644.6" y1="343.9" x2="644.6" y2="385.6" stroke="#404040" stroke-width="1"/><line x1="661.1" y1="343.9" x2="661.1" y2="385.6" stroke="#404040" stroke-width="1"/><line x1="677.6" y1="343.9" x2="677.6" y2="385.6" stroke="#404040" stroke-width="1"/><line x1="694.2" y1="343.9" x2="694.2" y2="385.6" stroke="#404040" stroke-width="1"/><line x1="710.7" y1="343.9" x2="710.7" y2="385.6" stroke="#404040" stroke-width="1"/><line x1="727.2" y1="343.9" x2="727.2" y2="385.6" stroke="#404040" stroke-width="1"/><line x1="743.8" y1="343.9" x2="743.8" y2="385.6" stroke="#404040" stroke-width="1"/><line x1="760.3" y1="343.9" x2="760.3" y2="385.6" stroke="#404040" stroke-width="1"/><line x1="776.8" y1="343.9" x2="776.8" y2="385.6" stroke="#404040" stroke-width="1"/><line x1="793.3" y1="343.9" x2="793.3" y2="385.6" stroke="#404040" stroke-width="1"/><line x1="809.9" y1="343.9" x2="809.9" y2="385.6" stroke="#404040" stroke-width="1"/><line x1="826.4" y1="343.9" x2="826.4" y2="385.6" stroke="#404040" stroke-width="1"/><line x1="842.9" y1="343.9" x2="842.9" y2="385.6" stroke="#404040" stroke-width="1"/><line x1="859.5" y1="343.9" x2="859.5" y2="385.6" stroke="#404040" stroke-width="1"/><line x1="876.0" y1="343.9" x2="876.0" y2="385.6" stroke="#404040" stroke-width="1"/><line x1="892.5" y1="343.9" x2="892.5" y2="385.6" stroke="#404040" stroke-width="1"/><line x1="909.1" y1="343.9" x2="909.1" y2="385.6" stroke="#404040" stroke-width="1"/><line x1="925.6" y1="343.9" x2="925.6" y2="385.6" stroke="#404040" stroke-width="1"/><line x1="942.1" y1="343.9" x2="942.1" y2="385.6" stroke="#404040" stroke-width="1"/><line x1="958.6" y1="343.9" x2="958.6" y2="385.6" stroke="#404040" stroke-width="1"/><line x1="975.2" y1="343.9" x2="975.2" y2="385.6" stroke="#404040" stroke-width="1"/><line x1="330" y1="350.2" x2="992" y2="350.2" stroke="#404040" stroke-width="1"/><line x1="330" y1="379.6" x2="992" y2="379.6" stroke="#404040" stroke-width="1"/><line x1="347.0" y1="391.1" x2="347.0" y2="432.3" stroke="#404040" stroke-width="1"/><line x1="363.6" y1="391.1" x2="363.6" y2="432.3" stroke="#404040" stroke-width="1"/><line x1="380.1" y1="391.1" x2="380.1" y2="432.3" stroke="#404040" stroke-width="1"/><line x1="396.6" y1="391.1" x2="396.6" y2="432.3" stroke="#404040" stroke-width="1"/><line x1="413.1" y1="391.1" x2="413.1" y2="432.3" stroke="#404040" stroke-width="1"/><line x1="429.7" y1="391.1" x2="429.7" y2="432.3" stroke="#404040" stroke-width="1"/><line x1="446.2" y1="391.1" x2="446.2" y2="432.3" stroke="#404040" stroke-width="1"/><line x1="462.7" y1="391.1" x2="462.7" y2="432.3" stroke="#404040" stroke-width="1"/><line x1="479.3" y1="391.1" x2="479.3" y2="432.3" stroke="#404040" stroke-width="1"/><line x1="495.8" y1="391.1" x2="495.8" y2="432.3" stroke="#404040" stroke-width="1"/><line x1="512.3" y1="391.1" x2="512.3" y2="432.3" stroke="#404040" stroke-width="1"/><line x1="528.9" y1="391.1" x2="528.9" y2="432.3" stroke="#404040" stroke-width="1"/><line x1="545.4" y1="391.1" x2="545.4" y2="432.3" stroke="#404040" stroke-width="1"/><line x1="561.9" y1="391.1" x2="561.9" y2="432.3" stroke="#404040" stroke-width="1"/><line x1="578.5" y1="391.1" x2="578.5" y2="432.3" stroke="#404040" stroke-width="1"/><line x1="595.0" y1="391.1" x2="595.0" y2="432.3" stroke="#404040" stroke-width="1"/><line x1="611.5" y1="391.1" x2="611.5" y2="432.3" stroke="#404040" stroke-width="1"/><line x1="628.0" y1="391.1" x2="628.0" y2="432.3" stroke="#404040" stroke-width="1"/><line x1="644.6" y1="391.1" x2="644.6" y2="432.3" stroke="#404040" stroke-width="1"/><line x1="661.1" y1="391.1" x2="661.1" y2="432.3" stroke="#404040" stroke-width="1"/><line x1="677.6" y1="391.1" x2="677.6" y2="432.3" stroke="#404040" stroke-width="1"/><line x1="694.2" y1="391.1" x2="694.2" y2="432.3" stroke="#404040" stroke-width="1"/><line x1="710.7" y1="391.1" x2="710.7" y2="432.3" stroke="#404040" stroke-width="1"/><line x1="727.2" y1="391.1" x2="727.2" y2="432.3" stroke="#404040" stroke-width="1"/><line x1="743.8" y1="391.1" x2="743.8" y2="432.3" stroke="#404040" stroke-width="1"/><line x1="760.3" y1="391.1" x2="760.3" y2="432.3" stroke="#404040" stroke-width="1"/><line x1="776.8" y1="391.1" x2="776.8" y2="432.3" stroke="#404040" stroke-width="1"/><line x1="793.3" y1="391.1" x2="793.3" y2="432.3" stroke="#404040" stroke-width="1"/><line x1="809.9" y1="391.1" x2="809.9" y2="432.3" stroke="#404040" stroke-width="1"/><line x1="826.4" y1="391.1" x2="826.4" y2="432.3" stroke="#404040" stroke-width="1"/><line x1="842.9" y1="391.1" x2="842.9" y2="432.3" stroke="#404040" stroke-width="1"/><line x1="859.5" y1="391.1" x2="859.5" y2="432.3" stroke="#404040" stroke-width="1"/><line x1="876.0" y1="391.1" x2="876.0" y2="432.3" stroke="#404040" stroke-width="1"/><line x1="892.5" y1="391.1" x2="892.5" y2="432.3" stroke="#404040" stroke-width="1"/><line x1="909.1" y1="391.1" x2="909.1" y2="432.3" stroke="#404040" stroke-width="1"/><line x1="925.6" y1="391.1" x2="925.6" y2="432.3" stroke="#404040" stroke-width="1"/><line x1="942.1" y1="391.1" x2="942.1" y2="432.3" stroke="#404040" stroke-width="1"/><line x1="958.6" y1="391.1" x2="958.6" y2="432.3" stroke="#404040" stroke-width="1"/><line x1="975.2" y1="391.1" x2="975.2" y2="432.3" stroke="#404040" stroke-width="1"/><line x1="330" y1="402.2" x2="992" y2="402.2" stroke="#404040" stroke-width="1"/><line x1="330" y1="419.2" x2="992" y2="419.2" stroke="#404040" stroke-width="1"/><line x1="347.0" y1="438.7" x2="347.0" y2="480.6" stroke="#404040" stroke-width="1"/><line x1="363.6" y1="438.7" x2="363.6" y2="480.6" stroke="#404040" stroke-width="1"/><line x1="380.1" y1="438.7" x2="380.1" y2="480.6" stroke="#404040" stroke-width="1"/><line x1="396.6" y1="438.7" x2="396.6" y2="480.6" stroke="#404040" stroke-width="1"/><line x1="413.1" y1="438.7" x2="413.1" y2="480.6" stroke="#404040" stroke-width="1"/><line x1="429.7" y1="438.7" x2="429.7" y2="480.6" stroke="#404040" stroke-width="1"/><line x1="446.2" y1="438.7" x2="446.2" y2="480.6" stroke="#404040" stroke-width="1"/><line x1="462.7" y1="438.7" x2="462.7" y2="480.6" stroke="#404040" stroke-width="1"/><line x1="479.3" y1="438.7" x2="479.3" y2="480.6" stroke="#404040" stroke-width="1"/><line x1="495.8" y1="438.7" x2="495.8" y2="480.6" stroke="#404040" stroke-width="1"/><line x1="512.3" y1="438.7" x2="512.3" y2="480.6" stroke="#404040" stroke-width="1"/><line x1="528.9" y1="438.7" x2="528.9" y2="480.6" stroke="#404040" stroke-width="1"/><line x1="545.4" y1="438.7" x2="545.4" y2="480.6" stroke="#404040" stroke-width="1"/><line x1="561.9" y1="438.7" x2="561.9" y2="480.6" stroke="#404040" stroke-width="1"/><line x1="578.5" y1="438.7" x2="578.5" y2="480.6" stroke="#404040" stroke-width="1"/><line x1="595.0" y1="438.7" x2="595.0" y2="480.6" stroke="#404040" stroke-width="1"/><line x1="611.5" y1="438.7" x2="611.5" y2="480.6" stroke="#404040" stroke-width="1"/><line x1="628.0" y1="438.7" x2="628.0" y2="480.6" stroke="#404040" stroke-width="1"/><line x1="644.6" y1="438.7" x2="644.6" y2="480.6" stroke="#404040" stroke-width="1"/><line x1="661.1" y1="438.7" x2="661.1" y2="480.6" stroke="#404040" stroke-width="1"/><line x1="677.6" y1="438.7" x2="677.6" y2="480.6" stroke="#404040" stroke-width="1"/><line x1="694.2" y1="438.7" x2="694.2" y2="480.6" stroke="#404040" stroke-width="1"/><line x1="710.7" y1="438.7" x2="710.7" y2="480.6" stroke="#404040" stroke-width="1"/><line x1="727.2" y1="438.7" x2="727.2" y2="480.6" stroke="#404040" stroke-width="1"/><line x1="743.8" y1="438.7" x2="743.8" y2="480.6" stroke="#404040" stroke-width="1"/><line x1="760.3" y1="438.7" x2="760.3" y2="480.6" stroke="#404040" stroke-width="1"/><line x1="776.8" y1="438.7" x2="776.8" y2="480.6" stroke="#404040" stroke-width="1"/><line x1="793.3" y1="438.7" x2="793.3" y2="480.6" stroke="#404040" stroke-width="1"/><line x1="809.9" y1="438.7" x2="809.9" y2="480.6" stroke="#404040" stroke-width="1"/><line x1="826.4" y1="438.7" x2="826.4" y2="480.6" stroke="#404040" stroke-width="1"/><line x1="842.9" y1="438.7" x2="842.9" y2="480.6" stroke="#404040" stroke-width="1"/><line x1="859.5" y1="438.7" x2="859.5" y2="480.6" stroke="#404040" stroke-width="1"/><line x1="876.0" y1="438.7" x2="876.0" y2="480.6" stroke="#404040" stroke-width="1"/><line x1="892.5" y1="438.7" x2="892.5" y2="480.6" stroke="#404040" stroke-width="1"/><line x1="909.1" y1="438.7" x2="909.1" y2="480.6" stroke="#404040" stroke-width="1"/><line x1="925.6" y1="438.7" x2="925.6" y2="480.6" stroke="#404040" stroke-width="1"/><line x1="942.1" y1="438.7" x2="942.1" y2="480.6" stroke="#404040" stroke-width="1"/><line x1="958.6" y1="438.7" x2="958.6" y2="480.6" stroke="#404040" stroke-width="1"/><line x1="975.2" y1="438.7" x2="975.2" y2="480.6" stroke="#404040" stroke-width="1"/><polyline points="330.0,142.4 330.8,145.5 331.6,145.8 332.4,145.0 333.2,147.8 334.0,146.5 334.8,150.0 335.6,154.4 336.4,156.6 337.2,157.8 338.0,163.5 338.8,157.4 339.6,153.9 340.4,151.8 341.2,146.7 342.0,143.0 342.8,142.6 343.6,143.0 344.4,144.9 345.2,144.2 346.0,145.6 346.8,145.5 347.6,146.4 348.4,148.7 349.2,147.8 350.0,148.7 350.8,146.4 351.6,141.0 352.4,137.7 353.2,136.9 354.0,133.4 354.8,134.2 355.6,136.6 356.4,141.0 357.2,144.3 358.0,144.5 358.8,147.9 359.6,148.6 360.4,148.6 361.2,149.0 362.0,148.9 362.8,150.0 363.6,154.3 364.4,153.3 365.2,156.1 366.0,155.9 366.8,152.2 367.6,145.8 368.4,139.3 369.2,133.3 370.0,129.5 370.8,129.1 371.6,131.2 372.4,134.0 373.2,136.6 374.0,137.5 374.8,134.7 375.6,135.1 376.4,131.1 377.2,128.8 378.0,127.9 378.8,134.2 379.6,138.7 380.4,144.8 381.2,151.2 382.0,157.6 382.8,155.3 383.6,155.1 384.4,155.8 385.2,155.2 386.0,153.2 386.8,148.1 387.6,142.6 388.4,135.9 389.2,130.4 390.0,125.1 390.8,135.5 391.6,142.4 392.4,150.7 393.2,155.2 394.0,164.7 394.8,164.1 395.6,164.7 396.4,163.3 397.2,165.3 398.0,162.2 398.8,161.3 399.6,159.4 400.4,157.4 401.2,154.4 402.0,151.8 402.8,151.8 403.6,151.9 404.4,149.8 405.2,150.5 406.0,150.9 406.8,147.1 407.6,142.0 408.4,139.6 409.2,136.1 410.0,131.5 410.8,130.6 411.6,128.6 412.4,128.1 413.2,127.1 414.0,124.3 414.8,130.2 415.6,135.4 416.4,139.1 417.2,142.8 418.0,145.8 418.8,143.1 419.6,138.9 420.4,134.7 421.2,132.2 422.0,126.1 422.8,129.2 423.6,128.0 424.4,130.8 425.2,131.5 426.0,131.7 426.8,133.7 427.6,133.4 428.4,134.2 429.2,135.6 430.0,133.9 430.8,131.4 431.6,130.7 432.4,130.2 433.2,126.9 434.0,125.1 434.8,131.0 435.6,133.7 436.4,136.4 437.2,141.3 438.0,143.0 438.8,143.9 439.6,142.2 440.4,142.8 441.2,143.8 442.0,143.9 442.8,147.1 443.6,148.7 444.4,152.5 445.2,154.9 446.0,157.5 446.8,156.1 447.6,154.6 448.4,152.1 449.2,149.0 450.0,147.2 450.8,146.0 451.6,146.6 452.4,148.5 453.2,148.9 454.0,149.7 454.8,149.2 455.6,148.8 456.4,147.2 457.2,145.5 458.0,146.1 458.8,147.8 459.6,147.4 460.4,147.5 461.2,148.7 462.0,152.7 462.8,148.4 463.6,148.9 464.4,146.8 465.2,144.3 466.0,144.2 466.8,140.3 467.6,139.3 468.4,138.8 469.2,136.0 470.0,137.2 470.8,141.0 471.6,146.5 472.4,151.9 473.2,159.6 474.0,164.7 474.8,165.3 475.6,165.4 476.4,165.8 477.2,166.3 478.0,165.4 478.8,162.6 479.6,162.3 480.4,160.1 481.2,158.3 482.0,158.5 482.8,158.2 483.6,155.5 484.4,154.7 485.2,153.9 486.0,153.9 486.8,150.2 487.6,147.4 488.4,144.7 489.2,140.4 490.0,138.5 490.8,138.2 491.6,134.9 492.4,136.9 493.2,135.6 494.0,133.0 494.8,134.5 495.6,135.5 496.4,136.9 497.2,135.7 498.0,136.8 498.8,136.0 499.6,134.0 500.4,132.7 501.2,129.4 502.0,128.3 502.8,132.4 503.6,139.7 504.4,145.5 505.2,150.5 506.0,156.3 506.8,151.8 507.6,151.1 508.4,148.4 509.2,145.5 510.0,141.1 510.8,145.5 511.6,147.6 512.4,153.0 513.2,156.4 514.0,158.4 514.8,153.8 515.6,151.3 516.4,148.0 517.2,145.0 518.0,140.4 518.8,143.5 519.6,150.6 520.4,152.8 521.2,159.7 522.0,162.3 522.8,161.9 523.6,162.5 524.4,159.5 525.2,158.7 526.0,158.9 526.8,152.8 527.6,146.4 528.4,139.2 529.2,133.2 530.0,125.0 530.8,128.1 531.6,127.0 532.4,129.2 533.2,131.8 534.0,132.7 534.8,139.7 535.6,145.0 536.4,150.3 537.2,156.9 538.0,161.6 538.8,157.3 539.6,154.0 540.4,151.9 541.2,148.6 542.0,142.9 542.8,149.0 543.6,153.5 544.4,156.1 545.2,160.4 546.0,163.3 546.8,159.7 547.6,154.9 548.4,150.6 549.2,144.0 550.0,142.4 550.8,138.4 551.6,135.4 552.4,134.1 553.2,130.7 554.0,127.9 554.8,133.0 555.6,135.4 556.4,141.4 557.2,145.5 558.0,151.6 558.8,152.7 559.6,151.8 560.4,153.7 561.2,153.8 562.0,155.9 562.8,153.1 563.6,149.3 564.4,143.9 565.2,139.3 566.0,134.8 566.8,134.7 567.6,134.2 568.4,130.2 569.2,130.8 570.0,127.0 570.8,129.5 571.6,131.5 572.4,135.0 573.2,135.8 574.0,137.8 574.8,143.7 575.6,147.1 576.4,154.2 577.2,157.3 578.0,163.6 578.8,161.1 579.6,159.3 580.4,158.7 581.2,156.8 582.0,154.9 582.8,149.9 583.6,145.2 584.4,138.9 585.2,133.9 586.0,130.1 586.8,131.2 587.6,131.9 588.4,133.9 589.2,134.2 590.0,136.0 590.8,132.8 591.6,133.3 592.4,132.4 593.2,131.5 594.0,128.5 594.8,128.1 595.6,129.7 596.4,127.2 597.2,129.3 598.0,128.6 598.8,132.1 599.6,138.4 600.4,145.8 601.2,150.2 602.0,155.6 602.8,153.0 603.6,146.7 604.4,142.9 605.2,135.9 606.0,131.8 606.8,135.8 607.6,136.7 608.4,140.3 609.2,144.9 610.0,148.7 610.8,148.0 611.6,144.4 612.4,144.7 613.2,144.6 614.0,142.9 614.8,141.4 615.6,137.8 616.4,135.4 617.2,133.4 618.0,131.1 618.8,137.1 619.6,141.3 620.4,145.8 621.2,148.8 622.0,153.3 622.8,148.5 623.6,145.7 624.4,141.4 625.2,136.4 626.0,128.9 626.8,132.9 627.6,139.9 628.4,142.4 629.2,147.5 630.0,150.2 630.8,146.4 631.6,142.4 632.4,137.9 633.2,134.2 634.0,128.1 634.8,132.7 635.6,135.6 636.4,135.9 637.2,139.2 638.0,142.6 638.8,139.9 639.6,137.5 640.4,135.8 641.2,135.2 642.0,132.0 643.0,140.5 643.9,145.9 644.9,151.3 645.8,157.5 646.8,162.5 647.6,165.0 648.4,168.9 649.2,171.8 650.0,176.6 650.8,179.3 651.7,171.6 652.6,167.7 653.6,161.2 654.5,155.4 655.5,151.3 656.5,145.7 657.6,151.9 658.7,156.5 659.6,151.7 660.4,147.7 661.3,143.4 662.2,141.8 663.1,142.2 664.0,139.6 665.2,142.1 666.4,144.2 667.2,140.4 668.1,139.1 668.9,137.7 669.8,135.3 670.6,136.1 671.5,140.4 672.5,144.4 673.5,148.2 674.5,154.1 675.5,147.9 676.6,141.8 677.8,142.0 679.0,144.6 679.9,142.0 680.8,140.6 681.9,154.9 683.0,169.6 684.2,137.7 685.4,110.7 686.5,118.3 687.6,123.9 688.7,124.8 689.8,124.1 690.8,128.0 691.9,132.0 692.8,138.1 693.6,145.6 694.4,154.7 695.3,160.6 696.1,154.3 697.0,149.6 697.9,142.2 698.7,137.4 699.5,137.1 700.4,138.5 701.2,136.9 702.1,136.5 702.9,134.9 703.8,130.5 704.6,131.2 705.8,130.3 707.0,132.9 707.9,134.0 708.8,137.1 709.7,139.6 710.6,140.5 711.4,146.1 712.2,147.2 713.1,150.3 714.3,150.9 715.5,150.6 716.4,153.3 717.2,157.5 718.1,160.2 719.0,162.3 719.9,167.1 720.7,169.1 721.6,171.6 722.5,173.4 723.3,173.7 724.2,175.1 725.0,177.9 725.9,177.8 726.7,180.4 727.6,178.9 728.4,175.6 729.3,177.6 730.1,176.4 731.0,172.6 731.9,175.0 732.8,173.3 733.6,173.2 734.5,174.5 735.4,171.4 736.3,171.4 737.3,171.9 738.2,170.4 739.1,168.8 740.0,171.3 741.0,171.6 742.0,171.8 742.9,171.1 743.8,169.7 744.6,166.2 745.4,162.4 746.3,159.0 747.1,159.8 748.0,157.7 748.8,158.0 749.6,158.0 750.5,155.7 751.3,153.5 752.2,152.9 753.1,150.7 753.9,150.2 754.8,147.8 755.6,144.6 756.5,139.7 757.3,141.8 758.2,142.9 759.0,145.2 759.9,150.4 760.7,152.8 761.5,150.3 762.4,147.5 763.2,145.3 764.1,143.2 764.9,139.4 765.8,136.1 766.6,136.7 767.5,137.5 768.3,139.9 769.2,144.4 770.0,150.9 770.9,152.5 771.7,154.2 772.6,153.4 773.4,155.3 774.3,157.7 775.1,160.0 776.0,162.5 776.9,157.2 777.7,155.0 778.5,149.9 779.4,146.4 780.2,140.6 781.1,132.5 781.9,125.1 782.8,125.9 783.6,127.9 784.5,135.4 785.3,144.1 786.1,153.8 787.0,162.4 787.9,157.2 788.7,154.5 789.5,154.0 790.4,150.6 791.2,150.0 792.1,147.2 792.9,146.8 793.8,145.2 794.6,144.4 795.5,140.5 796.4,138.8 797.2,137.4 798.1,137.4 798.9,140.2 799.8,142.9 800.6,145.6 801.4,146.2 802.3,148.1 803.2,144.5 804.0,144.3 804.9,139.0 805.7,136.3 806.6,135.1 807.5,138.3 808.3,142.3 809.1,144.5 810.0,149.4 810.8,144.1 811.7,141.5 812.5,139.8 813.4,134.9 814.2,132.6 815.2,136.5 816.1,138.9 817.0,140.2 818.0,142.3 818.8,143.1 819.7,144.5 820.5,143.5 821.4,142.9 822.2,145.0 823.1,146.6 823.9,149.7 824.8,151.8 825.6,153.8 826.5,154.3 827.3,153.4 828.2,149.8 829.0,147.8 829.9,146.0 830.7,145.7 831.6,141.6 832.4,135.7 833.3,132.1 834.1,128.2 835.0,124.3 835.8,129.8 836.7,135.1 837.5,139.9 838.6,136.4 839.8,132.5 840.7,139.3 841.7,147.9 842.6,154.7 843.5,159.4 844.3,167.2 845.1,173.6 846.0,177.6 846.9,156.9 847.7,138.7 848.6,118.9 849.4,125.8 850.3,133.9 851.1,139.7 852.0,144.2 852.8,145.9 853.6,151.4 854.5,156.2 855.4,154.8 856.2,155.7 857.1,158.6 857.9,160.0 858.8,158.3 859.7,154.1 860.6,146.6 861.6,142.5 862.5,136.3 863.5,142.8 864.5,150.6 865.4,160.2 866.4,167.3 867.3,164.9 868.1,160.7 869.0,157.4 869.8,162.8 870.7,165.3 871.5,168.1 872.4,152.9 873.2,138.2 874.1,122.9 874.9,134.0 875.8,142.8 876.6,154.6 877.5,147.9 878.3,142.3 879.2,135.9 880.1,141.1 880.9,146.3 881.8,151.7 882.6,155.7 883.4,160.5 884.3,166.2 885.1,158.0 886.0,148.2 886.9,139.7 887.7,130.4 888.6,134.2 889.4,136.9 890.2,136.9 891.1,138.1 891.9,142.2 892.8,146.9 893.6,150.4 894.5,150.9 895.3,146.3 896.2,145.4 897.2,149.4 898.2,155.8 899.2,151.4 900.3,144.7 901.3,139.5 902.1,144.2 903.0,148.0 903.8,152.4 904.7,153.0 905.5,156.6 906.4,150.6 907.2,144.4 908.1,138.2 908.9,133.4 909.8,126.7 910.6,132.6 911.5,139.6 912.3,146.9 913.2,153.7 914.0,162.6 914.9,168.3 915.8,164.4 916.6,160.6 917.5,154.8 918.3,149.5 919.1,146.8 920.0,142.2 920.8,138.8 921.7,137.9 922.5,137.6 923.4,134.5 924.2,132.1 925.1,129.9 925.9,131.2 926.8,137.1 927.6,142.0 928.5,148.8 929.3,155.1 930.2,160.6 931.0,160.9 931.9,158.0 932.7,154.7 933.5,152.0 934.4,148.0 935.2,142.1 936.0,138.0 936.9,132.2 937.8,137.6 938.6,141.9 939.4,147.7 940.3,153.9 941.2,155.6 942.0,159.4 942.9,160.1 943.7,162.4 944.6,165.4 945.4,157.5 946.3,152.7 947.1,145.9 948.0,142.3 948.8,134.2 949.6,138.1 950.5,139.5 951.4,140.7 952.2,139.6 953.1,144.4 953.9,150.1 954.8,152.3 955.6,157.8 956.5,162.0 957.4,159.1 958.2,153.5 959.0,149.9 959.9,143.7 960.8,143.3 961.6,140.2 962.4,139.9 963.3,135.3 964.1,141.3 965.0,143.1 965.8,147.8 966.7,154.8 967.5,160.7 968.4,170.0 969.2,158.7 970.1,149.2 970.9,138.9 971.8,130.1 972.6,138.2 973.5,146.7 974.3,153.2 975.2,161.9 976.0,167.6 976.9,161.1 977.7,153.8 978.6,148.0 979.4,140.0 980.3,132.0 981.1,135.6 982.0,142.4 982.8,149.2 983.7,153.3 984.5,160.0 985.4,165.4 986.2,161.7 987.1,162.7 987.9,159.9 988.8,155.8 989.6,154.9 990.8,155.5 992.0,157.9" fill="none" stroke="#20e820" stroke-width="1.1" stroke-linejoin="round"/><polygon points="330.0,231.7 330.8,233.1 331.7,232.9 332.5,234.2 333.3,235.2 334.2,234.8 335.0,237.1 335.8,235.2 336.7,233.2 337.5,231.7 338.3,230.9 339.2,230.3 340.0,229.3 340.8,228.8 341.7,230.2 342.5,229.3 343.3,229.7 344.2,229.2 345.0,231.1 345.8,229.7 346.7,231.5 347.5,231.0 348.3,231.3 349.2,231.6 350.0,231.3 350.8,234.0 351.7,235.5 352.5,236.5 353.3,237.5 354.2,237.9 355.0,240.6 355.8,237.5 356.7,236.7 357.5,233.3 358.3,231.9 359.2,230.4 360.0,227.1 360.8,227.5 361.7,226.3 362.5,225.9 363.3,225.9 364.2,227.3 365.0,226.9 365.8,229.0 366.7,230.9 367.5,234.3 368.3,237.1 369.2,239.0 370.0,242.1 370.8,240.5 371.7,237.0 372.5,235.3 373.3,233.8 374.2,231.2 375.0,229.7 375.8,233.1 376.7,235.4 377.5,239.2 378.3,241.7 379.2,245.4 380.0,248.0 380.8,246.7 381.7,243.6 382.5,243.0 383.3,240.0 384.2,239.7 385.0,237.1 385.8,237.6 386.7,238.3 387.5,239.5 388.3,240.5 389.2,241.4 390.0,242.2 390.8,239.7 391.7,238.8 392.5,236.5 393.3,234.6 394.2,231.7 395.0,229.8 395.8,232.6 396.7,235.7 397.5,237.4 398.3,239.9 399.2,242.2 400.0,245.6 400.8,240.8 401.7,236.6 402.5,234.2 403.3,230.9 404.2,226.9 405.0,223.0 405.8,223.5 406.7,222.9 407.5,223.7 408.3,222.9 409.2,223.2 410.0,224.1 410.8,224.0 411.7,223.6 412.5,222.6 413.3,223.7 414.2,223.1 415.0,222.3 415.8,225.4 416.7,228.5 417.5,231.1 418.3,233.6 419.2,238.2 420.0,241.3 420.8,240.8 421.7,241.4 422.5,240.6 423.3,241.6 424.2,240.5 425.0,241.7 425.8,238.7 426.7,236.8 427.5,232.5 428.3,231.3 429.2,227.3 430.0,225.5 430.8,227.4 431.7,226.6 432.5,228.2 433.3,229.4 434.2,230.6 435.0,231.2 435.8,235.0 436.7,237.0 437.5,238.4 438.3,240.5 439.2,243.1 440.0,244.2 440.8,242.9 441.7,243.5 442.5,241.1 443.3,240.2 444.2,239.9 445.0,238.7 445.8,235.2 446.7,232.2 447.5,229.8 448.3,228.6 449.2,226.0 450.0,222.1 450.8,224.1 451.7,223.8 452.5,224.7 453.3,224.8 454.2,226.9 455.0,227.8 455.8,225.9 456.7,226.4 457.5,225.1 458.3,226.2 459.2,224.2 460.0,223.9 460.8,225.0 461.7,224.0 462.5,225.0 463.3,224.8 464.2,224.3 465.0,223.0 465.8,225.5 466.7,227.4 467.5,227.9 468.3,228.5 469.2,230.2 470.0,231.8 470.8,231.0 471.7,228.3 472.5,226.6 473.3,225.0 474.2,224.2 475.0,222.8 475.8,226.2 476.7,231.0 477.5,235.7 478.3,239.3 479.2,242.8 480.0,247.2 480.8,246.0 481.7,243.0 482.5,239.8 483.3,238.0 484.2,234.5 485.0,233.8 485.8,233.1 486.7,233.7 487.5,234.1 488.3,233.6 489.2,235.1 490.0,234.9 490.8,235.5 491.7,237.3 492.5,236.6 493.3,237.6 494.2,239.3 495.0,238.9 495.8,239.6 496.7,240.7 497.5,240.6 498.3,242.6 499.2,243.4 500.0,242.1 500.8,243.2 501.7,244.0 502.5,243.6 503.3,244.9 504.2,244.4 505.0,244.0 505.8,242.6 506.7,240.6 507.5,237.8 508.3,236.2 509.2,234.3 510.0,231.6 510.8,231.3 511.7,231.7 512.5,231.1 513.3,230.5 514.2,231.1 515.0,229.3 515.8,230.9 516.7,230.1 517.5,231.4 518.3,231.0 519.2,231.8 520.0,232.9 520.8,231.0 521.7,229.0 522.5,225.9 523.3,224.4 524.2,221.9 525.0,220.6 525.8,222.4 526.7,223.4 527.5,226.4 528.3,228.6 529.2,230.2 530.0,232.8 530.8,232.9 531.7,234.3 532.5,235.5 533.3,238.0 534.2,239.4 535.0,240.9 535.8,241.9 536.7,244.4 537.5,244.4 538.3,247.5 539.2,248.2 540.0,249.5 540.8,249.1 541.7,247.0 542.5,245.9 543.3,245.2 544.2,243.7 545.0,243.3 545.8,243.3 546.7,242.4 547.5,241.3 548.3,241.3 549.2,239.6 550.0,240.4 550.8,238.9 551.7,238.8 552.5,238.4 553.3,239.2 554.2,239.2 555.0,238.8 555.8,234.4 556.7,232.2 557.5,229.1 558.3,225.9 559.2,224.4 560.0,219.6 560.8,222.1 561.7,224.2 562.5,226.2 563.3,226.1 564.2,228.3 565.0,230.4 565.8,229.1 566.7,229.5 567.5,230.9 568.3,229.4 569.2,230.0 570.0,229.9 570.8,231.7 571.7,232.5 572.5,234.0 573.3,237.4 574.2,238.5 575.0,240.0 575.8,236.3 576.7,233.6 577.5,231.5 578.3,228.1 579.2,225.8 580.0,224.1 580.8,224.3 581.7,225.6 582.5,228.2 583.3,228.8 584.2,229.1 585.0,231.1 585.8,232.3 586.7,231.8 587.5,233.0 588.3,234.4 589.2,235.4 590.0,235.5 590.8,237.4 591.7,238.0 592.5,239.3 593.3,241.6 594.2,242.0 595.0,244.2 595.8,243.3 596.7,243.7 597.5,243.6 598.3,244.5 599.2,243.9 600.0,244.2 600.8,243.1 601.7,242.6 602.5,241.2 603.3,240.4 604.2,240.4 605.0,238.7 605.8,236.8 606.7,233.2 607.5,231.3 608.3,228.4 609.2,227.4 610.0,224.5 610.8,227.3 611.7,229.9 612.5,233.2 613.3,236.4 614.2,239.7 615.0,243.8 615.8,244.1 616.7,243.9 617.5,244.8 618.3,245.0 619.2,247.3 620.0,246.8 620.8,245.8 621.7,244.0 622.5,242.6 623.3,239.0 624.2,237.9 625.0,236.2 625.8,234.6 626.7,235.3 627.5,233.2 628.3,233.1 629.2,231.6 630.0,229.7 630.8,231.1 631.7,231.5 632.5,231.9 633.3,232.8 634.2,234.5 635.0,234.1 635.8,232.8 636.7,231.3 637.5,229.7 638.3,227.1 639.2,226.5 640.0,223.8 640.9,226.1 641.7,227.3 642.6,227.7 643.4,229.2 644.3,230.7 645.1,232.9 646.0,233.7 646.9,230.2 647.7,227.8 648.6,223.1 649.4,219.8 650.3,216.4 651.1,212.8 652.0,209.0 653.0,212.3 654.0,216.8 655.0,220.0 655.9,224.2 656.7,228.3 657.6,230.6 658.4,235.1 659.3,239.3 660.1,241.6 661.0,246.3 661.8,245.7 662.7,245.8 663.5,245.1 664.3,243.4 665.2,243.7 666.0,242.1 666.9,242.9 667.7,243.0 668.6,242.4 669.4,243.2 670.3,243.3 671.1,243.8 672.0,243.5 672.8,242.4 673.6,242.1 674.4,241.5 675.2,240.0 676.0,240.2 676.8,240.4 677.7,241.1 678.5,242.6 679.3,243.7 680.2,244.2 681.0,246.1 681.8,250.3 682.7,254.0 683.5,258.3 684.4,260.9 685.2,265.6 686.1,269.5 686.9,272.9 687.7,272.3 688.6,270.2 689.4,269.8 690.2,268.6 691.1,267.1 691.9,265.5 692.7,261.7 693.5,257.7 694.3,254.8 695.1,252.3 695.9,248.0 696.8,246.4 697.6,246.2 698.5,244.3 699.4,243.8 700.3,243.1 701.1,242.8 702.0,240.6 702.9,240.1 703.7,240.6 704.5,240.0 705.3,239.6 706.1,239.3 706.9,238.7 707.7,238.5 708.5,238.1 709.3,239.0 710.1,238.9 710.9,237.7 711.7,237.4 712.5,234.4 713.4,233.4 714.2,232.8 715.0,231.2 715.8,230.0 716.6,229.9 717.4,227.0 718.3,225.8 719.1,224.6 719.9,224.3 720.7,221.4 721.6,218.9 722.4,218.0 723.3,215.7 724.1,213.4 725.0,211.9 725.8,210.2 726.6,213.0 727.5,216.1 728.3,219.0 729.1,222.6 730.0,225.8 730.8,227.6 731.6,226.0 732.4,225.5 733.2,222.7 734.0,221.9 734.8,220.3 735.6,221.6 736.5,223.5 737.3,224.5 738.1,224.6 739.0,226.8 739.8,227.9 740.6,230.4 741.4,232.4 742.2,234.7 743.0,238.0 743.8,240.0 744.6,239.0 745.4,238.6 746.2,238.3 747.0,237.7 747.8,237.9 748.6,236.4 749.4,235.4 750.2,234.6 751.0,233.9 751.8,234.3 752.8,234.1 753.8,235.8 754.8,237.4 755.6,236.1 756.4,234.6 757.2,235.2 758.0,234.4 758.8,232.0 759.6,233.0 760.4,234.1 761.2,235.3 762.0,235.1 762.8,236.3 763.8,234.1 764.8,233.7 765.8,231.6 766.8,232.3 767.8,233.9 768.7,234.8 769.7,235.6 770.6,233.6 771.4,231.9 772.3,231.0 773.1,229.4 774.0,228.4 774.8,226.9 775.7,224.2 776.5,227.3 777.3,230.4 778.1,232.2 778.9,234.7 779.7,236.9 780.5,240.7 781.3,244.0 782.1,246.6 782.9,247.6 783.7,251.3 784.6,246.7 785.4,243.2 786.3,238.7 787.1,235.8 788.0,231.9 788.8,226.0 789.7,223.3 790.5,221.9 791.3,221.6 792.1,221.9 792.9,222.6 793.7,222.9 794.6,222.8 795.5,224.8 796.3,225.8 797.2,228.5 798.1,230.0 799.0,231.4 799.8,232.9 800.7,235.5 801.5,235.5 802.3,234.3 803.2,234.4 804.0,234.8 804.8,235.0 805.6,235.3 806.4,234.0 807.2,234.6 808.1,234.2 808.9,234.6 809.7,233.2 810.6,232.5 811.4,231.7 812.3,232.6 813.1,230.5 814.0,230.3 814.8,228.9 815.7,228.5 816.9,227.9 818.0,229.0 818.8,228.4 819.6,229.6 820.4,229.0 821.2,229.2 822.0,229.9 822.8,230.6 823.6,231.4 824.4,232.0 825.2,233.0 826.0,235.7 826.8,234.7 827.7,234.4 828.5,234.8 829.3,235.5 830.2,236.7 831.0,235.3 831.8,240.6 832.6,243.8 833.4,247.7 834.2,252.4 835.0,255.6 835.8,254.7 836.7,255.6 837.5,255.6 838.3,255.4 839.2,254.5 840.0,255.7 841.0,251.2 842.0,247.2 843.0,241.8 843.8,236.6 844.6,230.3 845.5,223.3 846.3,217.0 847.1,228.2 848.0,239.1 849.5,265.9 850.4,262.8 851.2,259.8 852.1,255.2 853.0,251.8 853.9,247.7 854.7,245.0 855.6,243.4 856.5,238.4 857.3,236.3 858.2,233.7 859.0,230.6 859.9,227.4 860.7,229.5 861.5,233.1 862.3,236.0 863.1,238.6 863.9,241.9 864.7,236.9 865.5,235.4 866.3,231.1 867.1,228.5 867.9,224.4 868.7,228.3 869.5,229.1 870.3,232.9 871.1,234.8 871.9,237.7 872.9,243.6 873.9,250.1 874.9,256.4 875.9,254.2 876.9,253.4 877.9,251.5 878.8,249.4 879.6,248.6 880.5,245.5 881.3,243.0 882.2,241.5 883.0,240.4 883.9,237.3 884.9,241.9 885.8,244.9 886.8,248.7 887.8,251.2 888.7,250.0 889.5,249.1 890.4,248.5 891.2,247.7 892.1,245.9 892.9,245.9 893.8,244.7 894.7,243.8 895.5,243.5 896.4,243.7 897.2,241.5 898.1,242.1 898.9,240.3 899.8,240.4 900.6,236.7 901.4,236.1 902.2,232.6 903.0,231.2 903.8,227.3 904.6,225.3 905.4,223.5 906.2,220.1 907.0,217.8 907.8,216.3 908.7,217.1 909.5,216.1 910.4,216.1 911.2,216.8 912.1,218.3 912.9,216.9 913.8,218.2 914.6,219.3 915.4,221.4 916.2,222.1 917.0,224.5 917.8,226.7 918.7,224.1 919.5,221.2 920.4,218.4 921.3,216.0 922.2,212.6 923.0,211.6 923.9,208.8 924.8,205.8 925.6,209.0 926.4,211.3 927.2,214.1 928.0,216.6 928.8,220.1 929.8,228.7 930.7,237.3 931.7,245.0 932.5,244.2 933.4,241.8 934.2,240.1 935.0,238.1 935.9,236.8 936.7,233.2 937.7,242.5 938.7,252.2 939.7,260.3 940.6,253.0 941.5,247.3 942.4,241.4 943.3,233.7 944.1,241.3 944.9,246.4 945.7,254.8 946.5,254.2 947.3,254.1 948.1,255.7 948.9,255.7 949.7,256.7 950.6,254.0 951.5,251.4 952.3,248.4 953.2,246.8 954.1,242.5 955.0,241.6 955.8,238.8 956.7,235.4 957.5,238.8 958.4,240.4 959.2,242.9 960.0,245.9 960.9,246.9 961.7,249.4 962.5,248.4 963.4,245.6 964.2,245.0 965.0,243.8 965.9,241.5 966.7,239.4 967.5,241.8 968.4,243.3 969.2,244.4 970.0,245.3 970.9,247.4 971.7,248.5 972.7,245.5 973.7,244.1 974.6,241.9 975.6,240.0 976.4,242.2 977.2,244.8 978.0,246.3 978.8,246.5 979.6,248.2 980.4,247.1 981.3,246.5 982.1,244.6 982.9,243.7 983.8,240.5 984.6,240.9 985.4,239.0 986.2,239.5 987.1,239.7 987.9,239.0 988.7,237.6 989.5,238.2 990.4,237.4 991.2,236.3 992.0,236.9 992.0,237.5 991.2,238.3 990.4,240.6 989.5,242.6 988.7,242.0 987.9,243.7 987.1,243.8 986.2,244.3 985.4,243.8 984.6,245.3 983.8,245.3 982.9,248.1 982.1,249.0 981.3,251.9 980.4,251.8 979.6,253.4 978.8,252.3 978.0,251.6 977.2,249.8 976.4,248.0 975.6,245.9 974.6,247.5 973.7,249.7 972.7,251.4 971.7,254.4 970.9,253.0 970.0,250.5 969.2,250.6 968.4,248.8 967.5,247.0 966.7,244.7 965.9,246.8 965.0,249.3 964.2,250.8 963.4,250.9 962.5,253.6 961.7,255.2 960.9,253.7 960.0,254.0 959.2,251.8 958.4,250.7 957.5,249.6 956.7,247.2 955.8,252.2 955.0,255.7 954.1,257.7 953.2,263.4 952.3,265.0 951.5,269.6 950.6,272.8 949.7,273.7 948.9,271.4 948.1,270.6 947.3,267.8 946.5,266.1 945.7,265.7 944.9,255.2 944.1,249.4 943.3,240.4 942.4,245.8 941.5,251.0 940.6,254.7 939.7,260.5 938.7,252.7 937.7,244.1 936.7,235.8 935.9,240.3 935.0,242.7 934.2,245.5 933.4,247.9 932.5,250.2 931.7,251.0 930.7,241.7 929.8,232.2 928.8,223.2 928.0,219.1 927.2,216.0 926.4,212.8 925.6,210.2 924.8,205.9 923.9,209.7 923.0,212.8 922.2,214.3 921.3,218.2 920.4,220.1 919.5,224.1 918.7,226.7 917.8,230.3 917.0,229.0 916.2,226.2 915.4,225.0 914.6,221.9 913.8,220.6 912.9,219.6 912.1,220.8 911.2,217.8 910.4,217.5 909.5,216.4 908.7,217.6 907.8,216.8 907.0,218.3 906.2,220.2 905.4,223.9 904.6,225.1 903.8,227.4 903.0,230.7 902.2,233.1 901.4,235.8 900.6,236.5 899.8,240.8 898.9,240.2 898.1,243.2 897.2,242.9 896.4,245.3 895.5,245.7 894.7,246.2 893.8,247.7 892.9,249.3 892.1,249.5 891.2,251.7 890.4,252.1 889.5,253.0 888.7,254.5 887.8,256.2 886.8,252.8 885.8,247.2 884.9,243.1 883.9,237.3 883.0,242.7 882.2,245.2 881.3,248.3 880.5,252.7 879.6,258.1 878.8,259.9 877.9,264.4 876.9,268.5 875.9,270.7 874.9,275.7 873.9,270.6 872.9,261.0 871.9,251.4 871.1,246.5 870.3,241.4 869.5,234.7 868.7,231.1 867.9,223.9 867.1,228.5 866.3,231.3 865.5,235.5 864.7,236.6 863.9,241.9 863.1,238.0 862.3,235.8 861.5,233.1 860.7,230.0 859.9,227.4 859.0,231.8 858.2,235.9 857.3,240.0 856.5,242.5 855.6,248.9 854.7,252.5 853.9,255.4 853.0,261.2 852.1,265.3 851.2,271.7 850.4,275.2 849.5,279.7 848.0,247.2 847.1,232.0 846.3,216.5 845.5,224.4 844.6,232.1 843.8,239.1 843.0,244.1 842.0,251.1 841.0,255.2 840.0,260.6 839.2,259.6 838.3,260.3 837.5,260.7 836.7,261.0 835.8,259.6 835.0,260.4 834.2,257.5 833.4,252.5 832.6,248.4 831.8,245.4 831.0,239.6 830.2,240.6 829.3,239.7 828.5,238.5 827.7,238.2 826.8,238.7 826.0,239.9 825.2,236.7 824.4,235.7 823.6,234.2 822.8,232.8 822.0,232.0 821.2,231.6 820.4,230.5 819.6,230.7 818.8,229.1 818.0,229.8 816.9,228.7 815.7,228.0 814.8,230.0 814.0,232.0 813.1,232.0 812.3,235.0 811.4,235.1 810.6,236.3 809.7,237.3 808.9,239.9 808.1,239.0 807.2,238.3 806.4,237.6 805.6,238.1 804.8,237.1 804.0,236.8 803.2,236.4 802.3,235.6 801.5,235.8 800.7,235.0 799.8,231.1 799.0,228.0 798.1,226.2 797.2,222.8 796.3,219.9 795.5,219.5 794.6,218.2 793.7,219.2 792.9,219.1 792.1,219.2 791.3,219.9 790.5,220.6 789.7,223.1 788.8,226.7 788.0,233.6 787.1,239.7 786.3,242.9 785.4,248.3 784.6,253.4 783.7,259.1 782.9,255.2 782.1,253.2 781.3,250.0 780.5,245.6 779.7,240.4 778.9,237.5 778.1,235.1 777.3,232.3 776.5,227.6 775.7,224.7 774.8,231.7 774.0,238.9 773.1,242.0 772.3,244.1 771.4,244.7 770.6,246.8 769.7,249.4 768.7,247.3 767.8,246.4 766.8,244.6 765.8,243.0 764.8,246.2 763.8,246.3 762.8,249.0 762.0,247.7 761.2,247.6 760.4,246.6 759.6,246.1 758.8,244.7 758.0,247.8 757.2,248.5 756.4,247.0 755.6,248.6 754.8,250.5 753.8,248.6 752.8,246.1 751.8,246.2 751.0,246.1 750.2,245.7 749.4,245.9 748.6,246.4 747.8,248.2 747.0,246.7 746.2,247.6 745.4,247.7 744.6,247.3 743.8,247.0 743.0,243.2 742.2,238.5 741.4,234.8 740.6,231.4 739.8,228.3 739.0,225.4 738.1,222.4 737.3,220.9 736.5,219.2 735.6,215.7 734.8,213.4 734.0,214.5 733.2,214.9 732.4,217.5 731.6,218.2 730.8,220.0 730.0,219.3 729.1,215.5 728.3,212.4 727.5,210.0 726.6,206.7 725.8,204.3 725.0,206.9 724.1,208.9 723.3,212.6 722.4,214.9 721.6,217.0 720.7,220.3 719.9,224.1 719.1,225.0 718.3,226.3 717.4,227.2 716.6,229.2 715.8,229.1 715.0,231.2 714.2,232.8 713.4,233.0 712.5,234.0 711.7,237.2 710.9,237.5 710.1,237.7 709.3,237.7 708.5,237.9 707.7,238.0 706.9,236.4 706.1,236.1 705.3,236.6 704.5,235.7 703.7,234.8 702.9,234.4 702.0,233.7 701.1,234.9 700.3,234.0 699.4,233.2 698.5,232.1 697.6,232.0 696.8,231.9 695.9,232.0 695.1,235.0 694.3,236.2 693.5,237.8 692.7,242.1 691.9,250.5 691.1,256.9 690.2,263.6 689.4,269.8 688.6,275.9 687.7,283.6 686.9,289.0 686.1,283.2 685.2,276.5 684.4,270.0 683.5,265.0 682.7,258.8 681.8,252.2 681.0,246.1 680.2,244.0 679.3,243.8 678.5,242.2 677.7,241.1 676.8,239.9 676.0,240.3 675.2,240.4 674.4,241.9 673.6,242.3 672.8,243.0 672.0,243.5 671.1,241.3 670.3,239.0 669.4,237.9 668.6,235.9 667.7,238.3 666.9,238.4 666.0,239.4 665.2,240.8 664.3,241.9 663.5,244.0 662.7,246.5 661.8,246.3 661.0,248.5 660.1,242.4 659.3,237.3 658.4,232.4 657.6,225.3 656.7,221.3 655.9,215.7 655.0,209.4 654.0,204.3 653.0,197.1 652.0,190.9 651.1,196.5 650.3,201.6 649.4,207.3 648.6,211.8 647.7,218.9 646.9,222.0 646.0,227.4 645.1,234.6 644.3,233.2 643.4,230.1 642.6,227.9 641.7,228.7 640.9,226.3 640.0,224.4 639.2,228.6 638.3,229.3 637.5,227.7 636.7,233.5 635.8,232.9 635.0,232.7 634.2,233.2 633.3,231.5 632.5,231.8 631.7,229.3 630.8,229.6 630.0,228.4 629.2,230.1 628.3,233.3 627.5,230.3 626.7,233.8 625.8,233.2 625.0,237.6 624.2,240.0 623.3,237.8 622.5,243.9 621.7,246.7 620.8,245.0 620.0,247.9 619.2,249.8 618.3,247.4 617.5,245.3 616.7,245.5 615.8,241.8 615.0,244.5 614.2,240.0 613.3,234.6 612.5,231.5 611.7,231.6 610.8,224.9 610.0,226.3 609.2,229.0 608.3,231.1 607.5,229.2 606.7,232.2 605.8,237.1 605.0,239.1 604.2,241.6 603.3,237.6 602.5,243.3 601.7,241.4 600.8,240.7 600.0,245.7 599.2,242.3 598.3,244.4 597.5,243.3 596.7,246.2 595.8,246.1 595.0,244.6 594.2,242.7 593.3,241.1 592.5,240.6 591.7,237.3 590.8,239.4 590.0,232.8 589.2,233.9 588.3,234.8 587.5,234.4 586.7,230.3 585.8,230.7 585.0,232.3 584.2,228.0 583.3,231.7 582.5,228.1 581.7,226.1 580.8,223.4 580.0,226.1 579.2,226.3 578.3,227.4 577.5,231.6 576.7,234.1 575.8,235.4 575.0,238.0 574.2,237.6 573.3,235.6 572.5,234.5 571.7,230.5 570.8,233.1 570.0,227.5 569.2,231.7 568.3,228.8 567.5,232.0 566.7,229.5 565.8,231.6 565.0,231.5 564.2,227.5 563.3,225.7 562.5,223.4 561.7,224.0 560.8,224.3 560.0,217.4 559.2,226.5 558.3,226.1 557.5,228.6 556.7,230.4 555.8,237.0 555.0,239.2 554.2,241.9 553.3,238.0 552.5,236.1 551.7,236.5 550.8,239.2 550.0,241.4 549.2,241.6 548.3,239.0 547.5,238.7 546.7,243.9 545.8,242.2 545.0,241.0 544.2,243.4 543.3,244.9 542.5,245.1 541.7,248.5 540.8,248.7 540.0,251.2 539.2,245.6 538.3,250.0 537.5,247.3 536.7,245.5 535.8,241.4 535.0,242.3 534.2,236.4 533.3,238.5 532.5,237.1 531.7,236.9 530.8,230.0 530.0,233.6 529.2,232.8 528.3,228.9 527.5,227.2 526.7,220.7 525.8,224.0 525.0,218.0 524.2,222.7 523.3,226.1 522.5,227.8 521.7,227.9 520.8,229.9 520.0,234.9 519.2,234.7 518.3,228.5 517.5,232.4 516.7,228.8 515.8,230.3 515.0,231.5 514.2,230.7 513.3,232.3 512.5,229.7 511.7,230.2 510.8,228.9 510.0,228.9 509.2,235.8 508.3,236.3 507.5,237.8 506.7,239.5 505.8,243.1 505.0,244.6 504.2,243.2 503.3,244.2 502.5,244.2 501.7,243.2 500.8,246.0 500.0,242.6 499.2,240.4 498.3,245.4 497.5,240.0 496.7,237.8 495.8,239.5 495.0,240.4 494.2,237.6 493.3,237.5 492.5,235.4 491.7,236.5 490.8,233.1 490.0,233.3 489.2,234.5 488.3,233.9 487.5,234.3 486.7,231.1 485.8,235.1 485.0,231.1 484.2,234.2 483.3,237.6 482.5,238.9 481.7,242.9 480.8,245.6 480.0,246.4 479.2,241.4 478.3,240.8 477.5,234.5 476.7,230.4 475.8,228.6 475.0,222.8 474.2,224.6 473.3,227.7 472.5,228.9 471.7,229.2 470.8,230.9 470.0,230.8 469.2,232.8 468.3,226.2 467.5,226.4 466.7,224.9 465.8,225.0 465.0,220.3 464.2,226.4 463.3,225.7 462.5,227.8 461.7,222.8 460.8,222.7 460.0,221.1 459.2,224.3 458.3,224.1 457.5,226.4 456.7,227.8 455.8,227.8 455.0,225.7 454.2,223.9 453.3,224.3 452.5,227.5 451.7,226.0 450.8,224.7 450.0,221.5 449.2,226.2 448.3,231.4 447.5,227.8 446.7,234.3 445.8,232.8 445.0,240.8 444.2,239.6 443.3,240.6 442.5,240.8 441.7,241.8 440.8,240.3 440.0,243.7 439.2,241.6 438.3,242.1 437.5,237.1 436.7,237.1 435.8,232.6 435.0,229.0 434.2,231.0 433.3,227.2 432.5,228.3 431.7,225.4 430.8,229.1 430.0,223.1 429.2,227.5 428.3,231.5 427.5,231.6 426.7,233.9 425.8,241.1 425.0,244.4 424.2,242.7 423.3,238.6 422.5,240.4 421.7,239.1 420.8,242.5 420.0,242.6 419.2,240.1 418.3,232.2 417.5,232.5 416.7,229.2 415.8,226.3 415.0,220.3 414.2,220.6 413.3,225.1 412.5,222.0 411.7,221.4 410.8,223.2 410.0,222.4 409.2,226.2 408.3,221.2 407.5,224.6 406.7,222.3 405.8,223.3 405.0,220.4 404.2,229.9 403.3,232.1 402.5,235.1 401.7,238.5 400.8,240.1 400.0,248.6 399.2,245.1 398.3,242.7 397.5,238.1 396.7,236.7 395.8,231.5 395.0,229.6 394.2,230.9 393.3,234.4 392.5,237.3 391.7,235.9 390.8,242.4 390.0,244.6 389.2,240.5 388.3,241.5 387.5,240.9 386.7,237.6 385.8,236.8 385.0,234.6 384.2,242.1 383.3,237.6 382.5,243.2 381.7,244.1 380.8,248.8 380.0,249.9 379.2,244.5 378.3,241.2 377.5,237.7 376.7,237.8 375.8,230.9 375.0,229.1 374.2,229.6 373.3,234.9 372.5,236.5 371.7,235.7 370.8,243.3 370.0,241.8 369.2,237.7 368.3,236.6 367.5,231.7 366.7,230.6 365.8,229.6 365.0,228.3 364.2,226.6 363.3,228.5 362.5,225.6 361.7,227.3 360.8,229.6 360.0,225.8 359.2,232.6 358.3,230.7 357.5,233.8 356.7,235.1 355.8,238.7 355.0,239.7 354.2,240.5 353.3,237.5 352.5,236.3 351.7,234.9 350.8,235.9 350.0,230.8 349.2,232.4 348.3,229.2 347.5,230.5 346.7,230.3 345.8,228.8 345.0,232.5 344.2,230.3 343.3,232.6 342.5,227.4 341.7,229.3 340.8,229.5 340.0,232.0 339.2,228.0 338.3,228.6 337.5,231.5 336.7,234.3 335.8,233.0 335.0,235.2 334.2,235.9 333.3,235.8 332.5,232.8 331.7,233.7 330.8,232.0 330.0,230.7" fill="#1a88c8" stroke="#1a88c8" stroke-width="1.6" stroke-linejoin="round"/><polyline points="330.0,231.7 330.8,233.1 331.7,232.9 332.5,234.2 333.3,235.2 334.2,234.8 335.0,237.1 335.8,235.2 336.7,233.2 337.5,231.7 338.3,230.9 339.2,230.3 340.0,229.3 340.8,228.8 341.7,230.2 342.5,229.3 343.3,229.7 344.2,229.2 345.0,231.1 345.8,229.7 346.7,231.5 347.5,231.0 348.3,231.3 349.2,231.6 350.0,231.3 350.8,234.0 351.7,235.5 352.5,236.5 353.3,237.5 354.2,237.9 355.0,240.6 355.8,237.5 356.7,236.7 357.5,233.3 358.3,231.9 359.2,230.4 360.0,227.1 360.8,227.5 361.7,226.3 362.5,225.9 363.3,225.9 364.2,227.3 365.0,226.9 365.8,229.0 366.7,230.9 367.5,234.3 368.3,237.1 369.2,239.0 370.0,242.1 370.8,240.5 371.7,237.0 372.5,235.3 373.3,233.8 374.2,231.2 375.0,229.7 375.8,233.1 376.7,235.4 377.5,239.2 378.3,241.7 379.2,245.4 380.0,248.0 380.8,246.7 381.7,243.6 382.5,243.0 383.3,240.0 384.2,239.7 385.0,237.1 385.8,237.6 386.7,238.3 387.5,239.5 388.3,240.5 389.2,241.4 390.0,242.2 390.8,239.7 391.7,238.8 392.5,236.5 393.3,234.6 394.2,231.7 395.0,229.8 395.8,232.6 396.7,235.7 397.5,237.4 398.3,239.9 399.2,242.2 400.0,245.6 400.8,240.8 401.7,236.6 402.5,234.2 403.3,230.9 404.2,226.9 405.0,223.0 405.8,223.5 406.7,222.9 407.5,223.7 408.3,222.9 409.2,223.2 410.0,224.1 410.8,224.0 411.7,223.6 412.5,222.6 413.3,223.7 414.2,223.1 415.0,222.3 415.8,225.4 416.7,228.5 417.5,231.1 418.3,233.6 419.2,238.2 420.0,241.3 420.8,240.8 421.7,241.4 422.5,240.6 423.3,241.6 424.2,240.5 425.0,241.7 425.8,238.7 426.7,236.8 427.5,232.5 428.3,231.3 429.2,227.3 430.0,225.5 430.8,227.4 431.7,226.6 432.5,228.2 433.3,229.4 434.2,230.6 435.0,231.2 435.8,235.0 436.7,237.0 437.5,238.4 438.3,240.5 439.2,243.1 440.0,244.2 440.8,242.9 441.7,243.5 442.5,241.1 443.3,240.2 444.2,239.9 445.0,238.7 445.8,235.2 446.7,232.2 447.5,229.8 448.3,228.6 449.2,226.0 450.0,222.1 450.8,224.1 451.7,223.8 452.5,224.7 453.3,224.8 454.2,226.9 455.0,227.8 455.8,225.9 456.7,226.4 457.5,225.1 458.3,226.2 459.2,224.2 460.0,223.9 460.8,225.0 461.7,224.0 462.5,225.0 463.3,224.8 464.2,224.3 465.0,223.0 465.8,225.5 466.7,227.4 467.5,227.9 468.3,228.5 469.2,230.2 470.0,231.8 470.8,231.0 471.7,228.3 472.5,226.6 473.3,225.0 474.2,224.2 475.0,222.8 475.8,226.2 476.7,231.0 477.5,235.7 478.3,239.3 479.2,242.8 480.0,247.2 480.8,246.0 481.7,243.0 482.5,239.8 483.3,238.0 484.2,234.5 485.0,233.8 485.8,233.1 486.7,233.7 487.5,234.1 488.3,233.6 489.2,235.1 490.0,234.9 490.8,235.5 491.7,237.3 492.5,236.6 493.3,237.6 494.2,239.3 495.0,238.9 495.8,239.6 496.7,240.7 497.5,240.6 498.3,242.6 499.2,243.4 500.0,242.1 500.8,243.2 501.7,244.0 502.5,243.6 503.3,244.9 504.2,244.4 505.0,244.0 505.8,242.6 506.7,240.6 507.5,237.8 508.3,236.2 509.2,234.3 510.0,231.6 510.8,231.3 511.7,231.7 512.5,231.1 513.3,230.5 514.2,231.1 515.0,229.3 515.8,230.9 516.7,230.1 517.5,231.4 518.3,231.0 519.2,231.8 520.0,232.9 520.8,231.0 521.7,229.0 522.5,225.9 523.3,224.4 524.2,221.9 525.0,220.6 525.8,222.4 526.7,223.4 527.5,226.4 528.3,228.6 529.2,230.2 530.0,232.8 530.8,232.9 531.7,234.3 532.5,235.5 533.3,238.0 534.2,239.4 535.0,240.9 535.8,241.9 536.7,244.4 537.5,244.4 538.3,247.5 539.2,248.2 540.0,249.5 540.8,249.1 541.7,247.0 542.5,245.9 543.3,245.2 544.2,243.7 545.0,243.3 545.8,243.3 546.7,242.4 547.5,241.3 548.3,241.3 549.2,239.6 550.0,240.4 550.8,238.9 551.7,238.8 552.5,238.4 553.3,239.2 554.2,239.2 555.0,238.8 555.8,234.4 556.7,232.2 557.5,229.1 558.3,225.9 559.2,224.4 560.0,219.6 560.8,222.1 561.7,224.2 562.5,226.2 563.3,226.1 564.2,228.3 565.0,230.4 565.8,229.1 566.7,229.5 567.5,230.9 568.3,229.4 569.2,230.0 570.0,229.9 570.8,231.7 571.7,232.5 572.5,234.0 573.3,237.4 574.2,238.5 575.0,240.0 575.8,236.3 576.7,233.6 577.5,231.5 578.3,228.1 579.2,225.8 580.0,224.1 580.8,224.3 581.7,225.6 582.5,228.2 583.3,228.8 584.2,229.1 585.0,231.1 585.8,232.3 586.7,231.8 587.5,233.0 588.3,234.4 589.2,235.4 590.0,235.5 590.8,237.4 591.7,238.0 592.5,239.3 593.3,241.6 594.2,242.0 595.0,244.2 595.8,243.3 596.7,243.7 597.5,243.6 598.3,244.5 599.2,243.9 600.0,244.2 600.8,243.1 601.7,242.6 602.5,241.2 603.3,240.4 604.2,240.4 605.0,238.7 605.8,236.8 606.7,233.2 607.5,231.3 608.3,228.4 609.2,227.4 610.0,224.5 610.8,227.3 611.7,229.9 612.5,233.2 613.3,236.4 614.2,239.7 615.0,243.8 615.8,244.1 616.7,243.9 617.5,244.8 618.3,245.0 619.2,247.3 620.0,246.8 620.8,245.8 621.7,244.0 622.5,242.6 623.3,239.0 624.2,237.9 625.0,236.2 625.8,234.6 626.7,235.3 627.5,233.2 628.3,233.1 629.2,231.6 630.0,229.7 630.8,231.1 631.7,231.5 632.5,231.9 633.3,232.8 634.2,234.5 635.0,234.1 635.8,232.8 636.7,231.3 637.5,229.7 638.3,227.1 639.2,226.5 640.0,223.8 640.9,226.1 641.7,227.3 642.6,227.7 643.4,229.2 644.3,230.7 645.1,232.9 646.0,233.7 646.9,230.2 647.7,227.8 648.6,223.1 649.4,219.8 650.3,216.4 651.1,212.8 652.0,209.0 653.0,212.3 654.0,216.8 655.0,220.0 655.9,224.2 656.7,228.3 657.6,230.6 658.4,235.1 659.3,239.3 660.1,241.6 661.0,246.3 661.8,245.7 662.7,245.8 663.5,245.1 664.3,243.4 665.2,243.7 666.0,242.1 666.9,242.9 667.7,243.0 668.6,242.4 669.4,243.2 670.3,243.3 671.1,243.8 672.0,243.5 672.8,242.4 673.6,242.1 674.4,241.5 675.2,240.0 676.0,240.2 676.8,240.4 677.7,241.1 678.5,242.6 679.3,243.7 680.2,244.2 681.0,246.1 681.8,250.3 682.7,254.0 683.5,258.3 684.4,260.9 685.2,265.6 686.1,269.5 686.9,272.9 687.7,272.3 688.6,270.2 689.4,269.8 690.2,268.6 691.1,267.1 691.9,265.5 692.7,261.7 693.5,257.7 694.3,254.8 695.1,252.3 695.9,248.0 696.8,246.4 697.6,246.2 698.5,244.3 699.4,243.8 700.3,243.1 701.1,242.8 702.0,240.6 702.9,240.1 703.7,240.6 704.5,240.0 705.3,239.6 706.1,239.3 706.9,238.7 707.7,238.5 708.5,238.1 709.3,239.0 710.1,238.9 710.9,237.7 711.7,237.4 712.5,234.4 713.4,233.4 714.2,232.8 715.0,231.2 715.8,230.0 716.6,229.9 717.4,227.0 718.3,225.8 719.1,224.6 719.9,224.3 720.7,221.4 721.6,218.9 722.4,218.0 723.3,215.7 724.1,213.4 725.0,211.9 725.8,210.2 726.6,213.0 727.5,216.1 728.3,219.0 729.1,222.6 730.0,225.8 730.8,227.6 731.6,226.0 732.4,225.5 733.2,222.7 734.0,221.9 734.8,220.3 735.6,221.6 736.5,223.5 737.3,224.5 738.1,224.6 739.0,226.8 739.8,227.9 740.6,230.4 741.4,232.4 742.2,234.7 743.0,238.0 743.8,240.0 744.6,239.0 745.4,238.6 746.2,238.3 747.0,237.7 747.8,237.9 748.6,236.4 749.4,235.4 750.2,234.6 751.0,233.9 751.8,234.3 752.8,234.1 753.8,235.8 754.8,237.4 755.6,236.1 756.4,234.6 757.2,235.2 758.0,234.4 758.8,232.0 759.6,233.0 760.4,234.1 761.2,235.3 762.0,235.1 762.8,236.3 763.8,234.1 764.8,233.7 765.8,231.6 766.8,232.3 767.8,233.9 768.7,234.8 769.7,235.6 770.6,233.6 771.4,231.9 772.3,231.0 773.1,229.4 774.0,228.4 774.8,226.9 775.7,224.2 776.5,227.3 777.3,230.4 778.1,232.2 778.9,234.7 779.7,236.9 780.5,240.7 781.3,244.0 782.1,246.6 782.9,247.6 783.7,251.3 784.6,246.7 785.4,243.2 786.3,238.7 787.1,235.8 788.0,231.9 788.8,226.0 789.7,223.3 790.5,221.9 791.3,221.6 792.1,221.9 792.9,222.6 793.7,222.9 794.6,222.8 795.5,224.8 796.3,225.8 797.2,228.5 798.1,230.0 799.0,231.4 799.8,232.9 800.7,235.5 801.5,235.5 802.3,234.3 803.2,234.4 804.0,234.8 804.8,235.0 805.6,235.3 806.4,234.0 807.2,234.6 808.1,234.2 808.9,234.6 809.7,233.2 810.6,232.5 811.4,231.7 812.3,232.6 813.1,230.5 814.0,230.3 814.8,228.9 815.7,228.5 816.9,227.9 818.0,229.0 818.8,228.4 819.6,229.6 820.4,229.0 821.2,229.2 822.0,229.9 822.8,230.6 823.6,231.4 824.4,232.0 825.2,233.0 826.0,235.7 826.8,234.7 827.7,234.4 828.5,234.8 829.3,235.5 830.2,236.7 831.0,235.3 831.8,240.6 832.6,243.8 833.4,247.7 834.2,252.4 835.0,255.6 835.8,254.7 836.7,255.6 837.5,255.6 838.3,255.4 839.2,254.5 840.0,255.7 841.0,251.2 842.0,247.2 843.0,241.8 843.8,236.6 844.6,230.3 845.5,223.3 846.3,217.0 847.1,228.2 848.0,239.1 849.5,265.9 850.4,262.8 851.2,259.8 852.1,255.2 853.0,251.8 853.9,247.7 854.7,245.0 855.6,243.4 856.5,238.4 857.3,236.3 858.2,233.7 859.0,230.6 859.9,227.4 860.7,229.5 861.5,233.1 862.3,236.0 863.1,238.6 863.9,241.9 864.7,236.9 865.5,235.4 866.3,231.1 867.1,228.5 867.9,224.4 868.7,228.3 869.5,229.1 870.3,232.9 871.1,234.8 871.9,237.7 872.9,243.6 873.9,250.1 874.9,256.4 875.9,254.2 876.9,253.4 877.9,251.5 878.8,249.4 879.6,248.6 880.5,245.5 881.3,243.0 882.2,241.5 883.0,240.4 883.9,237.3 884.9,241.9 885.8,244.9 886.8,248.7 887.8,251.2 888.7,250.0 889.5,249.1 890.4,248.5 891.2,247.7 892.1,245.9 892.9,245.9 893.8,244.7 894.7,243.8 895.5,243.5 896.4,243.7 897.2,241.5 898.1,242.1 898.9,240.3 899.8,240.4 900.6,236.7 901.4,236.1 902.2,232.6 903.0,231.2 903.8,227.3 904.6,225.3 905.4,223.5 906.2,220.1 907.0,217.8 907.8,216.3 908.7,217.1 909.5,216.1 910.4,216.1 911.2,216.8 912.1,218.3 912.9,216.9 913.8,218.2 914.6,219.3 915.4,221.4 916.2,222.1 917.0,224.5 917.8,226.7 918.7,224.1 919.5,221.2 920.4,218.4 921.3,216.0 922.2,212.6 923.0,211.6 923.9,208.8 924.8,205.8 925.6,209.0 926.4,211.3 927.2,214.1 928.0,216.6 928.8,220.1 929.8,228.7 930.7,237.3 931.7,245.0 932.5,244.2 933.4,241.8 934.2,240.1 935.0,238.1 935.9,236.8 936.7,233.2 937.7,242.5 938.7,252.2 939.7,260.3 940.6,253.0 941.5,247.3 942.4,241.4 943.3,233.7 944.1,241.3 944.9,246.4 945.7,254.8 946.5,254.2 947.3,254.1 948.1,255.7 948.9,255.7 949.7,256.7 950.6,254.0 951.5,251.4 952.3,248.4 953.2,246.8 954.1,242.5 955.0,241.6 955.8,238.8 956.7,235.4 957.5,238.8 958.4,240.4 959.2,242.9 960.0,245.9 960.9,246.9 961.7,249.4 962.5,248.4 963.4,245.6 964.2,245.0 965.0,243.8 965.9,241.5 966.7,239.4 967.5,241.8 968.4,243.3 969.2,244.4 970.0,245.3 970.9,247.4 971.7,248.5 972.7,245.5 973.7,244.1 974.6,241.9 975.6,240.0 976.4,242.2 977.2,244.8 978.0,246.3 978.8,246.5 979.6,248.2 980.4,247.1 981.3,246.5 982.1,244.6 982.9,243.7 983.8,240.5 984.6,240.9 985.4,239.0 986.2,239.5 987.1,239.7 987.9,239.0 988.7,237.6 989.5,238.2 990.4,237.4 991.2,236.3 992.0,236.9" fill="none" stroke="#ffffff" stroke-width="1.25" stroke-linejoin="round"/><polyline points="330.0,309.1 330.8,311.5 331.7,313.5 332.5,314.6 333.3,316.2 334.2,317.4 335.0,319.4 335.8,318.4 336.7,319.1 337.5,318.5 338.3,319.1 339.2,317.7 340.0,318.1 340.8,314.1 341.7,312.1 342.5,309.9 343.3,306.2 344.2,304.1 345.0,300.6 345.8,301.0 346.7,302.1 347.5,300.7 348.3,302.1 349.2,300.6 350.0,301.6 350.8,302.7 351.7,303.4 352.5,303.2 353.3,304.2 354.2,305.1 355.0,305.9 355.8,307.2 356.7,308.4 357.5,309.2 358.3,311.4 359.2,312.6 360.0,314.0 360.8,313.9 361.7,311.5 362.5,311.8 363.3,310.1 364.2,310.0 365.0,309.6 365.8,307.3 366.7,306.8 367.5,305.7 368.3,304.6 369.2,303.0 370.0,302.8 370.8,304.3 371.7,304.8 372.5,305.2 373.3,307.1 374.2,307.4 375.0,307.9 375.8,309.2 376.7,309.4 377.5,310.0 378.3,311.4 379.2,311.1 380.0,312.3 380.8,311.8 381.7,313.1 382.5,312.4 383.3,313.4 384.2,314.7 385.0,315.2 385.8,314.3 386.7,312.4 387.5,311.1 388.3,310.1 389.2,309.3 390.0,307.2 390.8,308.7 391.7,310.0 392.5,309.9 393.3,311.0 394.2,312.8 395.0,313.8 395.8,312.6 396.7,312.6 397.5,312.6 398.3,312.7 399.2,314.1 400.0,314.1 400.8,313.0 401.7,313.2 402.5,313.3 403.3,311.9 404.2,313.1 405.0,313.0 405.8,309.9 406.7,308.9 407.5,307.0 408.3,304.4 409.2,303.5 410.0,300.4 410.8,303.1 411.7,305.0 412.5,307.5 413.3,310.3 414.2,312.1 415.0,314.4 415.8,313.1 416.7,309.8 417.5,307.9 418.3,306.7 419.2,303.9 420.0,303.4 420.8,302.0 421.7,302.0 422.5,301.7 423.3,302.2 424.2,302.1 425.0,301.4 425.8,301.9 426.7,303.6 427.5,305.7 428.3,306.2 429.2,308.8 430.0,310.1 430.8,307.5 431.7,306.2 432.5,304.4 433.3,303.8 434.2,301.0 435.0,300.7 435.8,299.7 436.7,301.3 437.5,301.0 438.3,301.2 439.2,300.5 440.0,300.6 440.8,302.3 441.7,304.5 442.5,304.8 443.3,306.4 444.2,306.0 445.0,307.1 445.8,307.2 446.7,308.7 447.5,308.0 448.3,308.4 449.2,309.4 450.0,309.7 450.8,307.8 451.7,306.9 452.5,305.4 453.3,304.6 454.2,303.1 455.0,301.9 455.8,304.5 456.7,307.4 457.5,310.2 458.3,312.5 459.2,315.9 460.0,319.2 460.8,318.3 461.7,317.7 462.5,318.7 463.3,317.7 464.2,317.4 465.0,316.7 465.8,316.5 466.7,315.1 467.5,313.6 468.3,312.5 469.2,311.3 470.0,309.7 470.8,309.9 471.7,310.2 472.5,310.8 473.3,311.0 474.2,311.5 475.0,311.8 475.8,311.4 476.7,310.6 477.5,308.5 478.3,307.3 479.2,306.9 480.0,305.5 480.8,309.1 481.7,311.0 482.5,312.6 483.3,314.7 484.2,318.1 485.0,320.3 485.8,317.1 486.7,314.3 487.5,311.5 488.3,308.1 489.2,305.1 490.0,302.5 490.8,303.7 491.7,304.5 492.5,305.0 493.3,305.5 494.2,304.7 495.0,305.6 495.8,306.7 496.7,305.6 497.5,305.3 498.3,304.6 499.2,305.3 500.0,304.4 500.8,307.5 501.7,308.0 502.5,311.8 503.3,312.1 504.2,314.5 505.0,317.1 505.8,316.4 506.7,314.2 507.5,313.9 508.3,313.3 509.2,311.2 510.0,310.6 510.8,310.0 511.7,309.7 512.5,308.6 513.3,308.8 514.2,309.3 515.0,308.5 515.8,307.7 516.7,308.0 517.5,308.2 518.3,307.8 519.2,308.2 520.0,308.2 520.8,308.7 521.7,310.7 522.5,313.1 523.3,314.0 524.2,315.3 525.0,318.2 525.8,315.3 526.7,314.4 527.5,311.6 528.3,308.6 529.2,307.5 530.0,304.7 530.8,307.5 531.7,309.1 532.5,311.0 533.3,311.5 534.2,313.2 535.0,316.4 535.8,314.9 536.7,314.7 537.5,314.1 538.3,314.1 539.2,314.4 540.0,315.0 540.8,313.0 541.7,312.0 542.5,312.2 543.3,310.1 544.2,310.1 545.0,309.2 545.8,309.5 546.7,307.6 547.5,308.3 548.3,307.7 549.2,308.2 550.0,306.9 550.8,307.9 551.7,307.2 552.5,308.0 553.3,309.1 554.2,308.0 555.0,308.3 555.8,309.5 556.7,309.2 557.5,308.1 558.3,308.4 559.2,308.5 560.0,308.7 560.8,309.2 561.7,308.5 562.5,308.5 563.3,307.5 564.2,307.0 565.0,306.1 565.8,307.7 566.7,308.4 567.5,308.6 568.3,310.4 569.2,311.2 570.0,312.5 570.8,311.0 571.7,310.2 572.5,311.2 573.3,309.4 574.2,308.6 575.0,307.6 575.8,308.0 576.7,308.3 577.5,306.6 578.3,306.8 579.2,306.4 580.0,306.6 580.8,307.8 581.7,308.7 582.5,310.2 583.3,312.7 584.2,313.1 585.0,316.1 585.8,313.6 586.7,312.8 587.5,312.2 588.3,311.8 589.2,310.4 590.0,309.5 590.8,309.6 591.7,309.6 592.5,308.5 593.3,309.9 594.2,308.8 595.0,308.9 595.8,310.0 596.7,311.3 597.5,314.2 598.3,314.7 599.2,315.5 600.0,316.8 600.8,316.8 601.7,314.9 602.5,314.1 603.3,311.1 604.2,309.8 605.0,308.7 605.8,308.3 606.7,307.9 607.5,307.8 608.3,308.3 609.2,307.2 610.0,306.9 610.8,309.3 611.7,310.8 612.5,312.1 613.3,314.6 614.2,316.2 615.0,317.8 615.8,318.2 616.7,317.7 617.5,319.0 618.3,318.5 619.2,319.0 620.0,318.6 620.8,319.6 621.7,318.4 622.5,317.4 623.3,317.1 624.2,317.1 625.0,315.1 625.8,314.2 626.7,313.5 627.5,311.6 628.3,311.0 629.2,310.0 630.0,307.2 630.8,308.5 631.7,309.5 632.5,311.2 633.3,312.1 634.2,312.9 635.0,314.2 635.8,313.1 636.7,313.7 637.5,314.8 638.3,314.8 639.2,313.9 640.0,315.7 640.9,316.5 641.7,318.1 642.6,318.5 643.5,320.2 644.3,322.1 645.2,323.3 646.0,324.0 646.9,325.9 647.8,328.2 648.6,330.0 649.5,331.8 650.3,334.5 651.1,335.1 652.0,337.7 652.8,331.2 653.7,323.6 654.5,318.0 655.4,311.2 656.2,306.7 657.5,306.9 658.8,317.2 659.9,317.3 661.0,316.1 662.2,305.5 663.0,306.0 663.9,305.9 664.7,304.3 665.6,304.2 666.4,304.5 667.2,303.9 668.1,305.4 669.0,304.6 669.8,305.5 670.6,305.4 671.5,305.1 672.4,305.0 673.2,304.8 674.1,305.3 674.9,305.0 675.8,306.2 676.6,305.6 677.5,304.6 678.3,305.8 679.2,305.0 680.0,305.5 680.9,306.0 682.1,314.7 683.4,326.8 684.2,321.2 685.1,316.4 686.0,318.2 686.8,319.8 687.7,318.3 688.5,315.6 689.4,313.8 690.2,310.6 691.1,309.5 691.9,309.0 692.8,306.8 693.6,306.7 694.5,309.3 695.3,312.5 696.2,312.8 697.0,312.1 697.9,312.8 698.7,305.7 699.6,305.3 700.4,305.3 701.2,303.1 702.1,302.6 702.9,301.9 703.8,302.1 704.6,302.7 705.5,302.3 706.3,301.9 707.2,302.3 708.0,301.3 708.9,300.7 709.8,302.1 710.6,301.4 711.5,302.2 712.3,302.2 713.1,302.9 714.0,303.1 714.9,305.2 715.7,305.8 716.5,307.9 717.4,309.6 718.3,314.5 719.1,319.9 720.0,326.6 720.8,332.5 721.7,338.6 722.5,338.0 723.4,338.0 724.2,338.6 725.1,338.2 725.9,338.8 726.8,337.5 727.6,338.4 728.5,334.7 729.3,331.0 730.2,326.8 731.0,326.0 731.9,323.9 732.7,322.8 733.6,321.6 734.5,320.5 735.3,318.7 736.2,317.7 737.1,318.2 737.9,317.9 738.8,318.0 739.6,317.2 740.5,319.7 741.3,323.4 742.1,327.8 743.0,332.5 743.9,328.8 744.7,326.8 745.5,317.1 746.4,308.0 747.2,307.5 748.1,306.6 748.9,307.1 749.8,304.8 750.6,305.1 751.5,304.3 752.3,305.1 753.2,303.8 754.0,303.6 754.9,303.8 755.8,304.0 756.6,304.1 757.5,303.5 758.3,303.1 759.1,303.1 760.0,303.9 760.9,302.6 761.7,302.1 762.5,303.5 763.4,302.7 764.2,302.0 765.1,301.8 766.0,303.3 766.8,303.1 767.6,301.9 768.5,303.1 769.4,302.3 770.2,302.8 771.1,303.1 771.9,302.2 772.8,303.8 773.6,302.8 774.5,305.2 775.3,309.1 776.1,310.6 777.0,313.3 777.9,311.2 778.7,307.7 779.5,305.3 780.4,301.9 781.2,301.5 782.1,301.8 782.9,303.5 783.8,303.8 784.6,304.2 785.5,306.0 786.3,305.4 787.2,306.9 788.0,306.5 788.9,307.2 789.7,306.4 790.6,305.0 791.4,303.6 792.3,303.5 793.1,303.7 794.0,303.4 794.9,301.9 795.7,302.7 796.5,301.9 797.4,302.5 798.2,303.1 799.1,302.9 799.9,301.4 800.8,301.6 801.6,300.8 802.5,300.2 803.3,300.9 804.2,300.5 805.0,299.4 805.9,300.5 806.7,302.0 807.5,303.1 808.4,303.6 809.2,303.9 810.1,304.9 811.0,304.5 811.8,305.2 812.7,304.1 813.5,303.9 814.4,302.9 815.3,302.4 816.2,301.7 817.1,302.7 818.0,301.6 818.9,301.6 819.7,303.5 820.6,304.1 821.4,305.0 822.3,306.1 823.1,306.7 824.0,308.0 824.8,307.1 825.7,305.1 826.5,304.5 827.4,303.0 828.2,302.0 829.1,302.1 829.9,302.8 830.8,302.4 831.6,302.5 832.4,303.6 833.3,303.6 834.1,304.0 835.0,305.0 835.9,304.8 836.7,305.9 837.6,305.4 838.4,305.7 839.2,305.6 840.1,307.0 841.0,309.4 841.8,310.3 842.6,317.3 843.5,323.6 844.4,330.5 845.2,338.1 846.0,338.6 846.9,337.2 847.8,323.0 848.6,309.5 849.5,307.7 850.3,308.0 851.2,306.2 852.0,305.6 852.9,304.3 853.8,304.6 854.6,304.9 855.5,304.8 856.3,305.7 857.1,304.6 858.0,305.8 858.9,307.0 859.7,307.0 860.5,307.6 861.4,308.3 862.2,309.1 863.1,311.2 864.0,316.4 864.8,320.9 865.6,327.2 866.5,333.0 867.3,329.1 868.2,325.2 869.0,322.5 869.9,322.1 870.7,322.9 871.6,321.5 872.5,318.3 873.3,314.0 874.1,309.2 875.0,304.1 875.8,305.2 876.7,303.7 877.5,304.4 878.4,303.4 879.2,303.2 880.1,303.6 880.9,303.0 881.8,308.2 882.6,311.1 883.4,315.4 884.3,319.2 885.2,314.3 886.0,309.6 886.9,304.8 887.7,305.2 888.6,304.8 889.4,303.8 890.3,304.3 891.1,304.0 892.0,304.1 892.8,304.3 893.7,305.1 894.5,305.8 895.4,307.0 896.3,310.8 897.1,313.1 898.0,316.9 898.8,313.5 899.6,310.5 900.5,308.8 901.3,304.5 902.1,306.8 903.0,309.0 903.9,311.3 904.7,312.9 905.6,313.1 906.4,311.6 907.3,311.8 908.2,311.0 909.0,308.8 909.9,309.1 910.7,312.2 911.6,317.6 912.4,320.1 913.2,324.4 914.1,329.3 914.9,333.0 915.8,329.3 916.6,325.1 917.5,321.6 918.3,317.2 919.2,313.9 920.0,309.8 920.9,306.8 921.8,305.4 922.6,305.0 923.5,304.7 924.3,304.8 925.1,304.5 926.0,303.0 926.9,308.2 927.7,311.3 928.6,313.9 929.4,316.9 930.3,321.5 931.1,318.2 932.0,313.1 932.9,310.6 933.7,307.1 934.6,306.4 935.4,304.3 936.2,303.3 937.1,302.5 937.9,311.9 938.8,322.5 939.6,331.8 940.5,326.8 941.3,321.9 942.1,318.1 943.0,313.6 943.9,321.2 944.7,328.1 945.6,322.5 946.4,316.1 947.2,310.4 948.1,304.7 949.0,304.4 949.8,304.5 950.7,304.8 951.5,304.7 952.4,303.9 953.2,306.1 954.1,307.2 954.9,308.8 955.8,311.3 956.6,313.0 957.5,312.7 958.3,312.9 959.1,313.8 960.0,314.9 960.9,313.0 961.7,309.9 962.5,308.7 963.4,307.1 964.3,309.2 965.1,311.2 966.0,314.3 966.8,319.2 967.7,323.0 968.5,327.1 969.4,321.9 970.2,316.6 971.0,312.9 971.9,306.8 972.8,308.8 973.6,310.1 974.5,310.0 975.3,315.8 976.2,321.7 977.0,328.2 977.9,324.2 978.7,319.5 979.6,315.9 980.4,311.8 981.3,308.1 982.1,309.6 983.0,309.4 983.8,311.3 984.7,315.4 985.5,318.8 986.4,323.4 987.2,325.1 988.1,325.4 988.9,328.6 989.9,326.9 991.0,327.7 992.0,326.9" fill="none" stroke="#e8dc18" stroke-width="1.2" stroke-linejoin="round"/><polyline points="330.0,354.6 330.9,354.9 331.7,355.2 332.6,355.3 333.4,355.5 334.3,355.5 335.1,355.8 336.0,356.1 336.9,356.3 337.7,356.8 338.6,357.1 339.4,356.3 340.3,357.3 341.1,357.4 342.0,357.5 342.9,358.5 343.7,358.0 344.6,359.1 345.4,359.5 346.3,360.8 347.1,360.4 348.0,361.5 348.9,360.7 349.7,361.2 350.6,360.7 351.4,360.8 352.3,360.0 353.1,360.5 354.0,359.2 354.9,358.8 355.7,358.7 356.6,358.2 357.4,357.4 358.3,356.1 359.1,355.2 360.0,355.3 360.9,356.3 361.7,356.5 362.6,358.5 363.4,359.0 364.3,359.4 365.1,361.0 366.0,361.8 366.9,361.5 367.7,362.3 368.6,362.4 369.4,361.3 370.3,361.7 371.1,361.4 372.0,361.9 372.9,360.7 373.7,360.4 374.6,360.0 375.4,359.6 376.3,359.0 377.1,358.7 378.0,358.6 378.9,358.0 379.7,357.3 380.6,356.5 381.4,355.1 382.3,354.5 383.1,354.1 384.0,353.7 384.9,354.0 385.7,354.0 386.6,355.1 387.4,354.6 388.3,354.6 389.1,355.0 390.0,355.5 390.9,356.1 391.7,356.3 392.6,355.3 393.4,355.6 394.3,355.6 395.1,356.3 396.0,356.4 396.9,355.8 397.7,355.8 398.6,357.0 399.4,357.2 400.3,357.1 401.1,357.0 402.0,357.5 402.9,358.3 403.7,358.7 404.6,359.2 405.4,360.2 406.3,361.1 407.1,361.5 408.0,362.6 408.9,361.5 409.7,362.0 410.6,360.6 411.4,360.1 412.3,360.5 413.1,360.0 414.0,359.5 414.9,359.7 415.7,360.0 416.6,360.3 417.4,360.3 418.3,360.0 419.1,361.2 420.0,361.6 420.9,360.5 421.7,358.5 422.6,357.5 423.4,357.2 424.3,355.8 425.1,355.3 426.0,354.3 426.9,353.9 427.7,354.4 428.6,354.7 429.4,354.9 430.3,354.8 431.1,355.4 432.0,354.9 432.9,356.6 433.7,357.1 434.6,357.9 435.4,358.2 436.3,358.6 437.1,359.6 438.0,360.5 438.9,359.8 439.7,358.7 440.6,358.0 441.4,358.0 442.3,357.2 443.1,356.6 444.0,356.1 444.9,356.1 445.7,356.3 446.6,356.4 447.4,356.0 448.3,355.0 449.1,355.9 450.0,355.4 450.9,355.3 451.7,354.9 452.6,354.4 453.4,354.1 454.3,353.6 455.1,354.1 456.0,353.1 456.9,353.8 457.7,354.1 458.6,353.8 459.4,353.7 460.3,353.9 461.1,354.1 462.0,353.9 462.9,354.6 463.7,354.5 464.6,354.5 465.4,355.7 466.3,356.3 467.1,357.0 468.0,357.3 468.9,357.2 469.7,356.9 470.6,358.1 471.4,358.0 472.3,358.7 473.1,358.4 474.0,358.9 474.9,358.6 475.7,358.6 476.6,357.8 477.4,358.1 478.3,357.3 479.1,356.6 480.0,356.8 480.9,357.1 481.7,358.1 482.6,357.6 483.4,357.7 484.3,358.4 485.1,357.9 486.0,358.4 486.9,358.1 487.7,357.4 488.6,357.6 489.4,357.0 490.3,357.1 491.1,356.1 492.0,356.5 492.9,355.2 493.7,355.2 494.6,354.4 495.4,353.8 496.3,353.7 497.1,354.0 498.0,352.9 498.9,354.1 499.7,355.1 500.6,355.7 501.4,357.0 502.3,357.3 503.1,358.6 504.0,359.5 504.9,359.6 505.7,359.1 506.6,358.5 507.4,357.9 508.3,357.8 509.1,357.1 510.0,355.8 510.9,356.1 511.7,357.1 512.6,357.4 513.4,357.8 514.3,357.8 515.1,357.3 516.0,358.0 516.9,357.9 517.7,357.7 518.6,357.0 519.4,357.8 520.3,357.1 521.1,356.7 522.0,357.4 522.9,356.5 523.7,356.0 524.6,356.5 525.4,355.9 526.3,355.7 527.1,355.6 528.0,355.8 528.9,355.2 529.7,355.3 530.6,355.3 531.4,355.0 532.3,354.6 533.1,354.3 534.0,353.2 534.9,354.3 535.7,353.7 536.6,354.7 537.4,354.4 538.3,354.8 539.1,356.2 540.0,355.5 540.9,356.2 541.7,356.0 542.6,355.4 543.4,356.3 544.3,355.4 545.1,356.4 546.0,356.4 546.9,355.7 547.7,355.4 548.6,354.6 549.4,355.2 550.3,354.1 551.1,354.4 552.0,354.7 552.9,354.2 553.7,353.4 554.6,354.0 555.4,353.9 556.3,353.3 557.1,353.7 558.0,353.4 558.9,353.8 559.7,354.6 560.6,355.0 561.4,355.6 562.3,357.0 563.1,357.0 564.0,358.1 564.9,357.0 565.7,356.1 566.6,355.2 567.4,355.7 568.3,354.8 569.1,354.4 570.0,353.3 570.9,353.9 571.7,355.2 572.6,356.3 573.4,358.2 574.3,359.5 575.1,361.1 576.0,361.5 576.9,360.7 577.7,360.0 578.6,359.1 579.4,358.3 580.3,358.1 581.1,357.2 582.0,356.4 582.9,357.3 583.7,356.6 584.6,357.4 585.4,357.1 586.3,356.7 587.1,356.8 588.0,357.6 588.9,358.0 589.7,357.1 590.6,358.0 591.4,357.6 592.3,358.2 593.1,358.5 594.0,358.5 594.9,357.2 595.7,356.4 596.6,356.7 597.4,355.9 598.3,355.2 599.1,354.0 600.0,352.7 600.9,353.2 601.7,354.0 602.6,353.1 603.4,353.4 604.3,353.2 605.1,354.4 606.0,353.8 606.9,354.5 607.7,355.8 608.6,356.6 609.4,357.8 610.3,359.0 611.1,360.1 612.0,360.4 612.9,360.6 613.7,359.7 614.6,359.8 615.4,359.9 616.3,358.9 617.1,359.3 618.0,358.3 618.9,358.3 619.7,358.7 620.6,357.7 621.4,358.3 622.3,358.2 623.1,358.3 624.0,358.5 624.9,358.0 625.7,357.2 626.6,356.9 627.4,357.1 628.3,356.6 629.1,356.7 630.0,355.9 630.9,357.3 631.7,357.5 632.6,357.6 633.4,358.3 634.3,359.9 635.1,360.3 636.0,361.0 636.9,360.0 637.7,360.4 638.6,359.1 639.4,359.4 640.3,359.3 641.1,358.0 642.0,357.4 642.8,358.3 643.6,359.1 644.5,360.7 645.3,361.2 646.1,361.8 646.9,362.1 647.7,363.5 648.6,363.6 649.4,364.3 650.3,365.6 651.1,366.4 652.0,367.3 652.8,368.1 653.6,366.3 654.5,365.5 655.3,364.3 656.2,363.7 657.0,362.1 657.9,362.1 658.8,361.6 659.6,361.5 660.5,360.8 661.3,361.1 662.1,360.7 663.0,360.4 663.9,359.8 664.7,358.5 665.5,358.1 666.4,357.2 667.2,357.5 668.1,356.6 669.0,357.1 669.8,356.2 670.6,356.3 671.5,356.7 672.4,356.8 673.2,356.4 674.1,356.5 674.9,356.5 675.8,355.6 676.6,355.9 677.5,355.2 678.3,355.8 679.2,356.1 680.0,355.5 680.9,355.0 681.7,355.4 682.7,356.3 683.8,358.4 684.8,359.5 685.8,354.0 686.8,348.5 687.7,348.5 688.5,348.8 689.4,348.4 690.2,348.5 691.1,348.2 691.9,349.2 692.8,349.1 693.6,349.9 694.5,350.6 695.3,352.0 696.2,352.6 697.0,353.6 697.9,353.3 698.7,353.4 699.5,352.8 700.4,353.4 701.2,352.8 702.1,352.8 703.0,352.1 703.8,351.3 704.6,351.2 705.5,351.5 706.4,350.9 707.2,350.6 708.0,350.3 708.9,349.3 709.8,349.9 710.6,350.6 711.5,351.5 712.3,352.0 713.1,352.0 714.0,352.1 714.9,352.2 715.7,353.3 716.6,354.2 717.4,356.0 718.2,356.2 719.1,357.4 719.9,358.3 720.8,359.4 721.6,361.2 722.5,362.1 723.4,362.1 724.2,362.8 725.0,364.3 725.9,364.8 726.8,366.1 727.6,367.3 728.5,367.2 729.3,366.8 730.2,367.3 731.0,367.0 731.9,367.7 732.8,367.2 733.6,368.1 734.5,367.9 735.3,368.3 736.2,367.8 737.0,368.6 737.9,368.3 738.8,367.9 739.6,368.5 740.5,368.1 741.3,367.9 742.1,367.8 743.0,368.6 743.9,368.2 744.7,368.0 745.6,368.2 746.4,366.8 747.2,366.9 748.1,365.7 749.0,365.1 749.8,365.2 750.6,364.4 751.5,363.8 752.4,363.3 753.2,362.2 754.0,361.9 754.9,360.8 755.8,360.1 756.6,359.1 757.5,358.5 758.3,358.0 759.1,357.0 760.0,356.8 760.9,357.0 761.7,356.9 762.5,356.3 763.4,356.0 764.2,356.4 765.1,356.5 766.0,356.5 766.8,355.7 767.7,355.1 768.5,354.7 769.4,354.2 770.2,353.8 771.1,354.2 771.9,354.8 772.8,355.0 773.6,355.4 774.5,356.3 775.3,357.4 776.2,358.1 777.0,357.8 777.9,358.7 778.7,359.2 779.6,358.1 780.4,356.8 781.2,356.5 782.1,354.7 782.9,353.9 783.8,352.9 784.6,353.0 785.5,353.1 786.3,353.1 787.2,353.8 788.0,353.6 788.9,354.3 789.8,354.8 790.6,355.5 791.4,356.0 792.3,356.7 793.1,356.1 794.0,356.1 794.9,356.2 795.7,355.4 796.5,355.8 797.4,355.4 798.2,355.7 799.1,355.0 800.0,354.4 800.8,354.1 801.7,352.9 802.5,352.5 803.4,352.0 804.2,351.8 805.1,351.6 805.9,350.9 806.8,351.6 807.6,351.5 808.4,350.8 809.3,351.3 810.1,351.0 811.0,351.0 811.8,350.8 812.7,350.9 813.5,351.8 814.4,352.2 815.3,351.7 816.2,351.6 817.1,350.9 818.0,351.0 818.8,350.8 819.7,350.9 820.5,350.8 821.3,350.9 822.2,350.8 823.0,350.2 823.9,351.3 824.7,351.8 825.6,351.9 826.5,353.0 827.3,352.8 828.2,352.8 829.0,353.7 829.9,353.9 830.8,353.3 831.6,353.7 832.5,352.4 833.3,352.7 834.1,351.6 835.0,351.6 835.9,351.7 836.7,350.2 837.6,351.1 838.4,350.1 839.3,351.3 840.1,351.2 841.0,350.6 841.8,350.9 842.7,350.7 843.5,352.0 844.4,353.9 845.2,355.7 846.1,357.9 846.9,358.7 847.8,357.1 848.6,354.9 849.4,352.9 850.3,351.1 851.2,351.2 852.0,351.2 852.9,352.3 853.7,352.2 854.6,352.1 855.4,353.2 856.3,354.3 857.1,354.0 858.0,355.5 858.8,356.0 859.7,356.5 860.5,357.1 861.4,356.6 862.2,356.2 863.0,355.5 863.9,355.1 864.8,355.2 865.6,356.1 866.4,356.5 867.3,357.4 868.1,357.9 869.0,357.7 869.9,359.1 870.7,359.1 871.5,359.3 872.4,359.7 873.2,358.4 874.1,356.1 874.9,354.5 875.8,352.1 876.7,352.7 877.5,351.9 878.4,352.5 879.2,351.8 880.1,351.6 880.9,351.7 881.8,351.5 882.6,352.3 883.5,353.0 884.3,354.2 885.2,354.7 886.0,354.6 886.9,356.4 887.8,354.4 888.6,353.6 889.5,353.6 890.3,352.1 891.1,351.0 892.0,350.3 892.8,351.1 893.7,351.9 894.5,351.3 895.4,351.8 896.2,352.0 897.1,352.4 897.9,353.1 898.8,353.7 899.6,354.7 900.5,354.5 901.3,355.0 902.2,355.0 903.0,355.6 903.9,355.6 904.8,355.3 905.6,355.7 906.5,356.1 907.3,355.9 908.2,357.1 909.0,356.1 909.9,355.2 910.7,355.1 911.6,355.0 912.4,353.8 913.3,354.6 914.1,354.4 915.0,355.0 915.8,355.4 916.7,356.2 917.5,356.8 918.4,356.7 919.2,356.8 920.1,356.2 921.0,355.9 921.8,355.8 922.6,354.5 923.5,354.8 924.4,353.7 925.2,353.3 926.0,352.5 926.9,351.9 927.8,352.1 928.6,351.0 929.5,351.0 930.3,351.2 931.1,351.8 932.0,351.5 932.9,351.7 933.7,352.4 934.6,352.1 935.4,351.8 936.2,352.5 937.1,353.0 938.0,352.9 938.8,353.0 939.6,353.4 940.5,353.9 941.4,354.4 942.2,354.7 943.0,354.4 943.9,355.3 944.8,354.0 945.6,353.6 946.4,353.6 947.3,352.7 948.1,352.7 949.0,351.9 949.9,352.2 950.7,351.1 951.5,351.1 952.4,350.7 953.2,350.6 954.1,351.5 955.0,351.7 955.8,352.0 956.6,352.2 957.5,353.3 958.4,354.1 959.2,354.3 960.1,353.7 960.9,353.7 961.8,353.3 962.6,353.1 963.5,353.4 964.3,352.2 965.1,352.6 966.0,352.4 966.9,352.8 967.7,354.4 968.5,354.7 969.4,355.7 970.2,356.3 971.1,357.6 971.9,356.0 972.8,354.9 973.6,353.1 974.5,354.7 975.3,355.7 976.2,356.3 977.0,358.0 977.9,358.9 978.8,358.0 979.6,357.7 980.5,356.2 981.3,355.5 982.1,353.8 983.0,353.4 983.9,353.7 984.7,354.9 985.5,355.8 986.4,356.6 987.2,358.7 988.1,359.8 989.1,359.1 990.0,358.8 991.0,359.7 992.0,359.5" fill="none" stroke="#e020e8" stroke-width="1.2" stroke-linejoin="round"/><polygon points="330.0,416.0 331.0,416.0 332.0,416.2 333.0,416.1 334.0,416.5 335.0,415.4 336.0,414.7 337.0,413.8 338.0,412.9 339.0,411.9 340.0,411.2 341.0,412.3 342.0,413.6 343.0,414.0 344.0,415.5 345.0,416.5 346.0,417.3 347.0,416.1 348.0,415.0 349.0,414.6 350.0,413.1 351.0,412.4 352.0,411.8 353.0,411.9 354.0,412.2 355.0,412.4 356.0,412.2 357.0,412.6 358.0,412.6 359.0,413.5 360.0,414.3 361.0,415.2 362.0,415.6 363.0,416.6 364.0,417.0 365.0,417.1 366.0,416.9 367.0,417.2 368.0,417.2 369.0,417.3 370.0,417.1 371.0,416.7 372.0,415.8 373.0,415.0 374.0,414.5 375.0,413.4 376.0,412.7 377.0,413.3 378.0,413.7 379.0,414.2 380.0,414.4 381.0,414.4 382.0,415.3 383.0,415.4 384.0,415.7 385.0,416.4 386.0,416.7 387.0,417.2 388.0,417.4 389.0,417.0 390.0,416.9 391.0,416.6 392.0,416.3 393.0,416.1 394.0,415.6 395.0,415.6 396.0,415.4 397.0,415.2 398.0,415.4 399.0,415.4 400.0,415.1 401.0,415.0 402.0,414.4 403.0,413.9 404.0,413.3 405.0,413.2 406.0,412.4 407.0,412.5 408.0,412.0 409.0,412.3 410.0,412.0 411.0,411.5 412.0,411.7 413.0,411.5 414.0,411.8 415.0,412.0 416.0,412.1 417.0,412.3 418.0,412.3 419.0,412.9 420.0,413.2 421.0,414.0 422.0,414.2 423.0,414.9 424.0,415.2 425.0,415.6 426.0,415.6 427.0,415.6 428.0,415.8 429.0,415.9 430.0,416.0 431.0,415.5 432.0,415.5 433.0,415.0 434.0,415.0 435.0,414.8 436.0,414.8 437.0,414.6 438.0,415.3 439.0,415.1 440.0,415.6 441.0,415.8 442.0,416.3 443.0,416.1 444.0,415.7 445.0,415.9 446.0,415.5 447.0,415.7 448.0,415.5 449.0,415.9 450.0,415.7 451.0,415.7 452.0,415.8 453.0,416.3 454.0,416.1 455.0,415.7 456.0,415.6 457.0,415.3 458.0,415.2 459.0,414.3 460.0,414.2 461.0,415.0 462.0,415.4 463.0,416.1 464.0,416.7 465.0,416.9 466.0,417.5 467.0,417.1 468.0,416.8 469.0,416.3 470.0,416.0 471.0,415.4 472.0,415.0 473.0,415.7 474.0,416.3 475.0,416.4 476.0,416.9 477.0,417.7 478.0,417.8 479.0,418.0 480.0,418.3 481.0,418.3 482.0,418.8 483.0,418.8 484.0,418.9 485.0,418.6 486.0,418.2 487.0,418.4 488.0,418.0 489.0,418.0 490.0,417.4 491.0,417.5 492.0,417.5 493.0,417.2 494.0,417.1 495.0,417.5 496.0,417.4 497.0,417.4 498.0,417.0 499.0,417.0 500.0,416.8 501.0,416.6 502.0,416.3 503.0,416.4 504.0,416.1 505.0,416.1 506.0,415.5 507.0,415.5 508.0,415.2 509.0,415.2 510.0,414.6 511.0,414.1 512.0,414.0 513.0,413.4 514.0,412.9 515.0,412.7 516.0,412.3 517.0,412.1 518.0,411.9 519.0,412.3 520.0,412.0 521.0,412.6 522.0,413.6 523.0,414.1 524.0,414.9 525.0,415.3 526.0,416.2 527.0,415.8 528.0,415.1 529.0,414.7 530.0,414.0 531.0,413.6 532.0,412.8 533.0,413.5 534.0,413.9 535.0,414.5 536.0,414.7 537.0,415.3 538.0,416.0 539.0,415.6 540.0,415.7 541.0,415.9 542.0,415.6 543.0,415.6 544.0,415.6 545.0,415.8 546.0,415.5 547.0,415.6 548.0,415.9 549.0,415.5 550.0,415.8 551.0,415.5 552.0,415.4 553.0,415.3 554.0,415.1 555.0,414.7 556.0,414.5 557.0,413.9 558.0,414.0 559.0,413.9 560.0,413.5 561.0,413.2 562.0,412.9 563.0,412.9 564.0,412.9 565.0,413.0 566.0,413.4 567.0,413.4 568.0,413.2 569.0,414.0 570.0,414.7 571.0,415.1 572.0,415.3 573.0,416.3 574.0,416.4 575.0,416.8 576.0,417.1 577.0,417.1 578.0,417.4 579.0,417.6 580.0,417.9 581.0,417.1 582.0,416.7 583.0,415.9 584.0,414.9 585.0,414.6 586.0,413.5 587.0,413.5 588.0,413.8 589.0,413.6 590.0,413.5 591.0,413.7 592.0,413.7 593.0,413.6 594.0,413.6 595.0,414.2 596.0,414.4 597.0,414.5 598.0,414.4 599.0,414.7 600.0,414.3 601.0,414.7 602.0,414.6 603.0,414.5 604.0,414.2 605.0,414.6 606.0,415.1 607.0,415.0 608.0,415.2 609.0,415.7 610.0,416.3 611.0,416.3 612.0,416.2 613.0,416.3 614.0,416.9 615.0,417.1 616.0,417.2 617.0,416.9 618.0,417.2 619.0,416.8 620.0,416.9 621.0,417.0 622.0,417.4 623.0,416.9 624.0,417.0 625.0,417.4 626.0,417.5 627.0,417.3 628.0,417.2 629.0,417.6 630.0,417.5 631.0,417.4 632.0,417.1 633.0,416.7 634.0,416.9 635.0,417.2 636.0,417.7 637.0,417.9 638.0,418.1 639.0,418.7 640.0,418.8 641.1,417.7 642.3,416.7 643.5,415.8 644.6,414.6 645.8,413.7 646.9,412.3 648.0,413.7 649.0,414.7 650.0,415.5 651.1,416.3 652.1,416.8 653.1,417.0 654.1,417.3 655.1,417.2 656.1,417.5 657.1,417.7 658.3,417.1 659.5,417.2 660.6,416.9 661.8,416.6 663.0,416.5 664.1,416.4 665.1,416.4 666.2,416.1 667.2,415.8 668.3,415.5 669.4,415.8 670.4,415.6 671.5,415.5 672.5,415.3 673.5,414.7 674.6,414.7 675.6,414.6 676.6,414.3 677.6,414.5 678.6,413.9 679.7,413.6 680.7,413.7 681.7,413.3 682.7,411.4 683.7,409.8 684.8,407.8 685.8,405.9 686.8,403.6 687.9,402.9 689.0,401.8 690.0,400.6 691.1,399.4 692.2,399.4 693.3,399.5 694.4,399.4 695.4,399.5 696.5,399.5 697.6,399.2 698.7,399.4 699.7,399.0 700.7,399.2 701.8,398.7 702.8,398.8 703.8,398.7 704.8,398.6 705.8,398.3 706.9,398.4 707.9,398.3 708.9,398.1 710.0,398.2 711.2,398.6 712.3,399.3 713.4,399.4 714.6,399.9 715.7,400.3 716.7,401.3 717.7,401.8 718.8,402.8 719.8,403.4 720.8,403.9 721.8,405.2 722.8,406.5 723.9,407.7 724.9,409.1 725.9,410.9 727.0,411.3 728.2,411.8 729.3,413.1 730.4,413.4 731.6,414.4 732.7,414.9 733.9,415.5 735.0,415.2 736.2,415.7 737.3,416.1 738.5,416.0 739.6,416.9 740.7,416.6 741.7,416.9 742.8,416.7 743.9,416.8 744.9,416.9 746.0,417.4 747.0,417.7 748.1,417.7 749.1,417.5 750.1,417.2 751.1,417.6 752.1,417.4 753.1,417.5 754.1,417.4 755.1,417.3 756.1,417.1 757.1,417.0 758.1,417.0 759.1,417.1 760.1,417.0 761.1,417.4 762.1,416.8 763.1,417.2 764.1,416.8 765.1,416.8 766.1,417.5 767.1,417.3 768.2,417.7 769.2,417.9 770.2,418.0 771.2,418.2 772.2,418.3 773.3,418.9 774.3,418.9 775.3,419.3 776.4,419.0 777.6,418.2 778.7,418.1 779.8,417.6 781.0,417.6 782.1,417.1 783.1,417.3 784.1,417.9 785.2,418.0 786.2,418.8 787.2,418.9 788.3,419.1 789.4,419.4 790.4,419.4 791.5,419.3 792.6,419.6 793.7,419.5 794.8,419.8 795.9,419.5 796.9,420.1 798.0,419.9 799.1,419.8 800.1,420.0 801.2,420.3 802.2,420.0 803.3,420.6 804.4,420.3 805.4,420.5 806.5,420.4 807.5,420.7 808.5,421.1 809.6,420.8 810.6,420.8 811.7,421.2 812.8,421.3 813.8,421.1 814.9,421.2 815.9,421.6 817.0,421.4 818.0,421.4 819.1,421.8 820.2,421.9 821.2,421.8 822.3,421.8 823.4,421.4 824.5,421.4 825.6,421.6 826.7,421.6 827.7,421.5 828.8,421.5 829.9,421.2 830.9,420.6 831.9,419.9 833.0,419.3 834.0,419.0 835.0,418.1 836.1,418.0 837.1,417.6 838.2,416.6 839.3,416.6 840.3,417.1 841.4,417.5 842.5,418.4 843.5,419.1 844.5,418.4 845.5,417.6 846.5,417.1 847.5,416.3 848.5,415.9 849.5,415.3 850.6,415.1 851.7,415.6 852.8,415.5 853.8,415.3 854.9,415.5 856.0,415.2 857.1,415.5 858.2,415.7 859.2,415.7 860.3,416.2 861.4,416.2 862.5,416.5 863.7,417.1 864.8,417.3 865.9,417.6 866.9,417.4 868.0,417.5 869.1,417.4 870.2,417.0 871.3,416.8 872.4,416.4 873.5,416.0 874.7,415.7 875.8,415.3 876.9,415.1 878.1,414.5 879.2,414.2 880.3,413.8 881.5,413.6 882.6,413.5 883.7,412.8 884.9,412.5 886.0,412.4 887.1,412.1 888.1,412.2 889.2,412.0 890.2,411.5 891.3,411.5 892.4,411.6 893.4,411.3 894.5,411.3 895.6,411.3 896.6,411.1 897.7,411.6 898.8,411.8 899.8,411.4 900.9,411.8 901.9,411.9 903.0,412.0 904.1,412.3 905.3,412.6 906.5,413.3 907.6,413.6 908.8,413.7 909.9,414.3 910.9,415.2 911.9,416.3 912.9,417.5 913.9,417.9 914.9,419.0 915.9,419.5 917.0,420.4 918.0,421.0 919.1,421.0 920.1,421.7 921.2,422.3 922.4,422.5 923.5,422.8 924.6,423.3 925.8,423.7 926.9,423.6 927.9,424.0 928.9,423.5 930.0,423.7 931.0,423.7 932.0,423.3 933.0,423.3 934.0,423.6 935.1,423.4 936.1,423.5 937.1,422.9 938.2,423.2 939.4,423.3 940.5,423.5 941.6,423.4 942.8,423.2 943.9,423.2 945.0,422.6 946.2,422.0 947.3,421.6 948.4,420.8 949.6,420.1 950.7,419.5 951.8,419.9 953.0,420.0 954.1,419.6 955.2,419.9 956.4,420.2 957.5,419.9 958.6,419.9 959.8,420.0 960.9,419.4 962.0,419.8 963.2,419.6 964.3,419.4 965.3,419.2 966.4,419.3 967.4,419.6 968.4,419.1 969.4,419.1 970.5,419.5 971.5,419.7 972.5,419.2 973.5,419.2 974.6,419.4 975.6,419.6 976.6,419.5 977.6,419.6 978.7,419.2 979.7,419.3 980.7,419.6 981.7,419.7 982.8,419.3 983.8,419.3 984.8,419.5 985.8,419.6 986.9,419.5 987.9,419.4 988.9,419.4 989.9,419.8 991.0,420.0 992.0,419.7 992,432.3 330,432.3" fill="#7c4004"/><rect x="647.7" y="413.3" width="3.3" height="19.0" fill="#ff8a10"/><rect x="657.6" y="417.4" width="1" height="14.9" fill="#ff8a10"/><rect x="681.4" y="413.5" width="1.2" height="18.8" fill="#ff8a10"/><rect x="694.5" y="399.4" width="1.2" height="32.9" fill="#ff8a10"/><rect x="718.3" y="402.3" width="1" height="30.0" fill="#ff8a10"/><rect x="724.2" y="408.2" width="2.5" height="24.1" fill="#ff8a10"/><rect x="729.5" y="413.1" width="1.2" height="19.2" fill="#ff8a10"/><rect x="731.5" y="414.3" width="1" height="18.0" fill="#ff8a10"/><rect x="740.4" y="416.7" width="1.8" height="15.6" fill="#ff8a10"/><rect x="774.4" y="418.9" width="1.2" height="13.4" fill="#ff8a10"/><rect x="820.0" y="421.9" width="1.2" height="10.4" fill="#ff8a10"/><rect x="841.8" y="417.8" width="4" height="14.5" fill="#ff8a10"/><rect x="858.0" y="415.7" width="1" height="16.6" fill="#ff8a10"/><rect x="862.2" y="416.4" width="4.2" height="15.9" fill="#ff8a10"/><rect x="869.0" y="417.4" width="1" height="14.9" fill="#ff8a10"/><rect x="882.6" y="413.5" width="1.5" height="18.8" fill="#ff8a10"/><rect x="891.2" y="411.5" width="1" height="20.8" fill="#ff8a10"/><rect x="896.3" y="411.2" width="1.8" height="21.1" fill="#ff8a10"/><rect x="901.4" y="411.8" width="1.3" height="20.5" fill="#ff8a10"/><rect x="913.2" y="417.6" width="1.5" height="14.7" fill="#ff8a10"/><rect x="926.0" y="423.7" width="1" height="8.6" fill="#ff8a10"/><rect x="929.4" y="423.6" width="1" height="8.7" fill="#ff8a10"/><rect x="937.9" y="423.1" width="1.5" height="9.2" fill="#ff8a10"/><rect x="942.2" y="423.3" width="1.5" height="9.0" fill="#ff8a10"/><rect x="959.2" y="419.9" width="1" height="12.4" fill="#ff8a10"/><rect x="966.0" y="419.3" width="1.5" height="13.0" fill="#ff8a10"/><rect x="973.6" y="419.3" width="1.8" height="13.0" fill="#ff8a10"/><rect x="983.0" y="419.3" width="1" height="13.0" fill="#ff8a10"/><rect x="989.8" y="419.7" width="1.5" height="12.6" fill="#ff8a10"/><rect x="526.8" y="415.9" width="1.2" height="16.4" fill="#ff8a10"/><rect x="564.4" y="412.9" width="1.2" height="19.4" fill="#ff8a10"/><rect x="581.3" y="416.9" width="1.2" height="15.4" fill="#ff8a10"/><rect x="627.8" y="417.2" width="1.2" height="15.1" fill="#ff8a10"/><rect x="563.8" y="412.9" width="1.2" height="19.4" fill="#ff8a10"/><rect x="621.5" y="417.2" width="1.2" height="15.1" fill="#ff8a10"/><rect x="339.2" y="411.8" width="1.2" height="20.5" fill="#ff8a10"/><rect x="477.1" y="417.7" width="1.2" height="14.6" fill="#ff8a10"/><rect x="628.1" y="417.3" width="1.2" height="15.0" fill="#ff8a10"/><rect x="535.1" y="414.5" width="1.2" height="17.8" fill="#ff8a10"/><rect x="614.7" y="417.0" width="1.2" height="15.3" fill="#ff8a10"/><rect x="365.8" y="417.0" width="1.2" height="15.3" fill="#ff8a10"/><rect x="478.2" y="417.8" width="1.2" height="14.5" fill="#ff8a10"/><rect x="407.9" y="412.1" width="1.2" height="20.2" fill="#ff8a10"/><rect x="501.8" y="416.4" width="1.2" height="15.9" fill="#ff8a10"/><rect x="511.4" y="414.0" width="1.2" height="18.3" fill="#ff8a10"/><rect x="334.1" y="416.3" width="1.2" height="16.0" fill="#ff8a10"/><rect x="398.5" y="415.4" width="1.2" height="16.9" fill="#ff8a10"/><rect x="418.3" y="412.5" width="1.2" height="19.8" fill="#ff8a10"/><rect x="619.6" y="416.9" width="1.2" height="15.4" fill="#ff8a10"/><rect x="572.0" y="415.3" width="1.2" height="17.0" fill="#ff8a10"/><rect x="380.4" y="414.4" width="1.2" height="17.9" fill="#ff8a10"/><rect x="581.9" y="416.7" width="1.2" height="15.6" fill="#ff8a10"/><rect x="373.9" y="414.6" width="1.2" height="17.7" fill="#ff8a10"/><rect x="525.1" y="415.4" width="1.2" height="16.9" fill="#ff8a10"/><rect x="370.0" y="417.1" width="1.2" height="15.2" fill="#ff8a10"/><rect x="330.6" y="416.0" width="1.2" height="16.3" fill="#ff8a10"/><rect x="605.4" y="414.8" width="1.2" height="17.5" fill="#ff8a10"/><rect x="396.2" y="415.4" width="1.2" height="16.9" fill="#ff8a10"/><rect x="398.1" y="415.4" width="1.2" height="16.9" fill="#ff8a10"/><rect x="640.4" y="418.3" width="1.2" height="14.0" fill="#ff8a10"/><rect x="605.7" y="415.0" width="1.2" height="17.3" fill="#ff8a10"/><rect x="421.4" y="414.1" width="1.2" height="18.2" fill="#ff8a10"/><rect x="633.8" y="416.9" width="1.2" height="15.4" fill="#ff8a10"/><rect x="500.4" y="416.7" width="1.2" height="15.6" fill="#ff8a10"/><rect x="544.2" y="415.6" width="1.2" height="16.7" fill="#ff8a10"/><rect x="394.7" y="415.6" width="1.2" height="16.7" fill="#ff8a10"/><rect x="627.3" y="417.3" width="1.2" height="15.0" fill="#ff8a10"/><rect x="548.2" y="415.8" width="1.2" height="16.5" fill="#ff8a10"/><rect x="635.4" y="417.4" width="1.2" height="14.9" fill="#ff8a10"/><line x1="726" y1="411.0" x2="726" y2="432" stroke="#d02000" stroke-width="0.8"/><line x1="330" y1="431.8" x2="992" y2="431.8" stroke="#d02800" stroke-width="1"/><polygon points="330.0,466.4 331.0,466.4 332.0,467.0 333.0,467.4 334.0,468.0 335.0,468.5 336.0,469.3 337.0,468.7 338.0,467.3 339.0,467.1 340.0,465.8 341.1,465.8 342.2,466.3 343.3,466.0 344.4,465.8 345.4,466.0 346.5,466.2 347.5,466.1 348.5,467.6 349.5,467.3 350.5,468.6 351.5,469.3 352.5,469.0 353.5,468.9 354.5,467.6 355.5,467.0 356.5,465.5 357.6,465.5 358.7,465.7 359.8,466.5 360.9,465.7 362.0,466.3 363.1,466.4 364.1,467.0 365.1,467.0 366.1,467.6 367.1,468.4 368.1,469.2 369.1,469.1 370.1,468.9 371.1,468.0 372.1,467.2 373.1,465.5 374.1,466.4 375.2,465.6 376.3,465.8 377.4,466.1 378.5,466.4 379.6,465.8 380.6,467.0 381.6,467.2 382.6,467.6 383.6,468.2 384.6,468.6 385.6,469.1 386.6,468.3 387.6,467.9 388.6,467.4 389.6,465.7 390.7,465.5 391.8,466.5 392.9,466.0 393.9,465.9 395.0,465.7 396.1,466.1 397.1,466.9 398.1,467.1 399.1,467.7 400.1,467.9 401.1,469.3 402.1,469.0 403.1,468.6 404.1,468.1 405.1,466.5 406.1,466.2 407.2,466.4 408.3,466.1 409.4,466.3 410.5,465.6 411.6,465.9 412.6,465.6 413.6,466.9 414.6,467.0 415.6,467.7 416.6,468.8 417.6,469.3 418.6,470.0 419.6,468.6 420.6,467.7 421.6,467.1 422.6,466.0 423.7,465.8 424.8,465.9 425.9,465.6 427.0,465.9 428.1,466.5 429.2,466.5 430.2,466.7 431.2,467.2 432.2,467.6 433.2,467.9 434.2,468.7 435.2,469.8 436.2,469.0 437.2,467.6 438.2,467.2 439.2,466.3 440.3,466.2 441.4,466.2 442.4,466.3 443.5,465.9 444.6,466.2 445.7,465.8 446.7,466.6 447.7,467.4 448.7,467.9 449.7,468.1 450.7,469.4 451.7,469.6 452.7,468.7 453.7,467.3 454.7,466.9 455.7,465.8 456.8,466.2 457.9,466.0 459.0,466.3 460.1,466.1 461.2,466.3 462.2,465.8 463.2,466.7 464.2,467.4 465.2,468.1 466.2,468.2 467.2,469.3 468.2,469.9 469.2,468.8 470.2,468.2 471.2,467.3 472.2,466.0 473.3,466.0 474.4,465.7 475.5,466.3 476.6,466.4 477.7,466.0 478.8,466.2 479.8,466.8 480.8,467.4 481.8,467.4 482.8,468.6 483.8,469.0 484.8,469.7 485.8,468.5 486.8,467.9 487.8,467.1 488.8,466.1 489.9,466.2 490.9,465.5 492.0,465.7 493.1,465.9 494.2,466.2 495.3,465.7 496.3,466.8 497.3,467.3 498.3,467.3 499.3,468.3 500.3,468.6 501.3,469.1 502.3,468.3 503.3,467.6 504.3,466.6 505.3,465.7 506.4,465.5 507.5,466.0 508.6,465.9 509.7,466.1 510.7,466.1 511.8,465.7 512.8,467.0 513.8,466.7 514.8,467.7 515.8,468.1 516.8,468.8 517.8,469.1 518.8,469.0 519.8,467.6 520.8,466.4 521.8,466.1 522.9,465.6 524.0,466.0 525.1,465.8 526.2,466.1 527.3,466.5 528.4,466.3 529.4,466.5 530.4,467.5 531.4,467.9 532.4,468.2 533.4,468.6 534.4,469.6 535.4,468.7 536.4,468.2 537.4,467.3 538.4,466.1 539.4,465.9 540.5,466.4 541.6,465.5 542.7,465.6 543.8,466.1 544.9,466.1 545.9,466.2 546.9,467.3 547.9,468.1 548.9,468.2 549.9,468.8 550.9,469.2 551.9,468.4 552.9,468.2 553.9,466.8 554.9,466.5 556.0,466.4 557.1,466.1 558.2,465.8 559.2,466.5 560.3,466.0 561.4,465.9 562.4,466.4 563.4,467.7 564.4,467.7 565.4,468.1 566.4,468.9 567.4,469.1 568.4,468.7 569.4,467.7 570.4,466.7 571.4,466.3 572.5,466.3 573.6,465.5 574.7,466.0 575.8,465.8 576.9,466.4 577.9,466.3 578.9,466.3 579.9,466.9 580.9,467.4 581.9,468.8 582.9,468.7 583.9,469.6 584.9,468.6 585.9,467.9 586.9,467.0 587.9,466.2 589.0,465.6 590.1,466.3 591.2,465.8 592.3,466.0 593.4,465.8 594.5,465.8 595.5,466.6 596.5,467.1 597.5,467.6 598.5,468.6 599.5,469.0 600.5,469.0 601.5,468.4 602.5,467.7 603.5,467.3 604.5,466.4 605.6,466.0 606.7,465.5 607.7,466.3 608.8,465.9 609.9,466.1 611.0,466.2 612.0,466.7 613.0,467.1 614.0,468.2 615.0,468.2 616.0,468.8 617.0,469.9 618.0,468.3 619.0,467.5 620.0,467.2 621.0,465.6 622.1,466.3 623.2,466.2 624.3,465.9 625.4,465.8 626.5,466.3 627.5,466.4 628.5,466.2 629.5,467.1 630.5,467.8 631.5,468.3 632.5,468.7 633.5,469.2 634.5,468.7 635.5,468.1 636.5,466.4 637.5,465.7 638.6,466.3 639.7,466.3 640.8,466.2 641.9,465.5 643.0,466.2 644.1,466.5 645.1,467.1 646.1,467.4 647.1,467.3 648.1,468.7 649.1,468.6 650.1,469.6 651.1,469.1 652.1,468.0 653.1,466.5 654.1,465.8 646.0,466.4 647.7,468.9 648.8,470.8 650.0,472.1 651.1,473.3 652.2,472.2 653.2,470.1 654.3,468.7 655.4,467.5 656.6,466.6 657.8,466.1 659.0,466.1 660.1,465.9 661.1,465.8 662.2,464.7 663.2,465.0 664.3,464.9 665.3,465.2 666.4,465.1 667.4,465.5 668.5,464.9 669.5,464.6 670.6,465.3 671.6,464.7 672.7,465.2 673.7,465.0 674.8,465.4 675.8,465.1 676.9,465.1 677.9,464.8 679.0,465.1 680.0,464.8 681.2,465.6 682.3,465.7 683.5,465.6 684.8,457.2 686.0,448.9 687.2,451.7 688.5,453.7 689.6,456.8 690.6,459.3 691.7,461.2 692.8,464.4 693.9,465.2 695.0,466.6 696.0,467.0 697.1,466.6 698.1,467.2 699.2,466.7 700.2,466.5 701.2,466.9 702.3,466.1 703.3,466.7 704.4,466.0 705.4,466.0 706.4,466.7 707.5,466.4 708.5,465.9 709.6,465.7 710.6,466.5 711.7,466.4 712.9,466.8 714.0,466.3 715.1,467.0 716.3,466.9 717.4,467.0 718.4,467.8 719.4,468.7 720.5,469.0 721.5,469.7 722.5,470.1 723.5,471.4 724.5,471.9 725.6,472.6 726.6,472.9 727.6,474.0 728.7,473.1 729.9,472.6 731.0,472.0 732.1,471.6 733.3,470.7 734.4,469.8 735.4,469.4 736.5,469.2 737.5,468.7 738.5,469.2 739.5,468.5 740.6,468.4 741.6,467.3 742.6,467.5 743.7,467.5 744.7,466.9 745.7,466.6 746.8,466.6 747.8,466.2 748.8,466.1 749.9,466.1 750.9,466.2 751.9,466.1 752.9,466.5 754.0,465.7 755.0,465.8 756.1,465.9 757.1,465.9 758.2,466.1 759.2,466.1 760.3,466.5 761.3,466.1 762.4,467.1 763.5,466.7 764.5,467.3 765.6,467.2 766.6,467.3 767.7,467.2 768.7,467.7 769.8,467.0 770.8,467.7 771.9,467.4 772.9,468.0 773.9,468.2 775.0,467.8 776.0,468.0 777.0,468.0 778.0,467.0 779.0,465.7 780.1,464.8 781.1,464.2 782.1,462.4 783.4,464.1 784.6,466.0 785.9,467.4 787.2,469.5 788.3,469.1 789.5,468.1 790.6,467.8 791.7,467.8 792.9,467.7 794.0,466.9 795.0,466.8 796.0,467.3 797.0,466.4 798.0,466.4 799.0,467.2 800.0,466.8 801.0,466.5 802.0,467.0 803.0,467.5 804.0,467.0 805.0,466.9 806.0,466.6 807.0,466.6 808.0,467.5 809.0,467.1 810.0,467.6 811.0,466.7 812.0,466.9 813.0,466.7 814.0,467.1 815.0,466.8 816.0,467.0 817.0,467.2 818.0,467.1 819.0,466.7 820.0,466.6 821.0,467.4 822.0,466.5 823.0,466.8 824.0,466.6 825.0,466.6 826.0,466.0 827.0,466.1 828.0,465.8 829.0,466.2 830.0,466.4 831.1,464.9 832.2,464.0 833.3,462.2 834.3,462.2 835.3,462.9 836.4,463.0 837.4,463.3 838.4,463.3 839.7,464.8 841.0,466.2 842.2,468.5 843.5,470.0 844.8,470.5 846.1,471.3 847.4,463.5 848.6,456.2 849.7,458.9 850.9,461.3 852.0,464.5 853.0,465.4 854.0,465.7 855.1,466.4 856.1,467.2 857.1,468.2 858.3,467.2 859.5,466.7 860.8,466.0 862.0,464.7 863.2,466.0 864.4,468.1 865.6,468.8 866.6,468.5 867.6,468.2 868.7,467.8 869.7,467.1 870.7,466.9 871.8,464.7 873.0,463.1 874.1,460.9 875.2,462.3 876.4,463.2 877.5,464.5 879.2,463.5 880.2,464.4 881.2,465.8 882.3,466.6 883.3,467.9 884.3,468.7 885.4,467.0 886.6,464.9 887.7,463.7 888.7,463.6 889.7,463.7 890.8,463.9 891.8,464.3 892.8,464.8 893.8,465.4 894.8,465.3 895.9,465.3 896.9,466.3 897.9,466.4 898.9,466.1 899.9,466.4 901.0,466.7 902.0,467.2 903.0,468.0 904.1,468.3 905.3,468.3 906.5,468.2 907.6,468.7 908.8,468.9 909.9,469.1 911.0,469.4 912.2,470.5 913.3,471.3 914.4,471.8 915.6,471.7 916.7,472.7 917.8,471.8 919.0,471.8 920.1,470.9 921.2,470.9 922.4,470.2 923.5,468.9 924.5,468.8 925.5,469.1 926.6,468.3 927.6,467.9 928.6,467.6 929.6,467.6 930.6,467.4 931.7,466.7 932.7,466.8 933.7,466.1 934.7,465.2 935.7,465.6 936.8,464.8 937.8,464.1 938.8,464.7 939.8,464.4 940.8,465.5 941.9,466.0 942.9,467.1 943.9,467.2 944.9,466.1 945.9,465.2 947.0,464.1 948.0,463.5 949.0,462.4 950.0,463.5 951.0,463.6 952.1,464.5 953.1,465.0 954.1,466.5 955.2,467.2 956.4,468.0 957.5,468.6 958.5,467.5 959.5,466.4 960.6,466.3 961.6,465.1 962.6,463.7 963.6,464.9 964.6,465.8 965.7,467.5 966.7,468.7 967.7,469.0 968.8,468.1 969.8,466.2 970.9,465.1 971.9,463.8 973.0,465.0 974.0,466.7 975.1,467.7 976.2,468.8 977.2,467.8 978.3,466.4 979.4,464.6 980.4,463.3 981.4,464.4 982.4,465.3 983.5,466.8 984.5,468.0 985.5,469.3 986.6,469.1 987.7,468.4 988.8,468.5 989.8,467.9 990.9,467.6 992.0,466.8 992,466 330,466" fill="#ff1010"/><polyline points="330.0,466.4 331.0,466.4 332.0,467.0 333.0,467.4 334.0,468.0 335.0,468.5 336.0,469.3 337.0,468.7 338.0,467.3 339.0,467.1 340.0,465.8 341.1,465.8 342.2,466.3 343.3,466.0 344.4,465.8 345.4,466.0 346.5,466.2 347.5,466.1 348.5,467.6 349.5,467.3 350.5,468.6 351.5,469.3 352.5,469.0 353.5,468.9 354.5,467.6 355.5,467.0 356.5,465.5 357.6,465.5 358.7,465.7 359.8,466.5 360.9,465.7 362.0,466.3 363.1,466.4 364.1,467.0 365.1,467.0 366.1,467.6 367.1,468.4 368.1,469.2 369.1,469.1 370.1,468.9 371.1,468.0 372.1,467.2 373.1,465.5 374.1,466.4 375.2,465.6 376.3,465.8 377.4,466.1 378.5,466.4 379.6,465.8 380.6,467.0 381.6,467.2 382.6,467.6 383.6,468.2 384.6,468.6 385.6,469.1 386.6,468.3 387.6,467.9 388.6,467.4 389.6,465.7 390.7,465.5 391.8,466.5 392.9,466.0 393.9,465.9 395.0,465.7 396.1,466.1 397.1,466.9 398.1,467.1 399.1,467.7 400.1,467.9 401.1,469.3 402.1,469.0 403.1,468.6 404.1,468.1 405.1,466.5 406.1,466.2 407.2,466.4 408.3,466.1 409.4,466.3 410.5,465.6 411.6,465.9 412.6,465.6 413.6,466.9 414.6,467.0 415.6,467.7 416.6,468.8 417.6,469.3 418.6,470.0 419.6,468.6 420.6,467.7 421.6,467.1 422.6,466.0 423.7,465.8 424.8,465.9 425.9,465.6 427.0,465.9 428.1,466.5 429.2,466.5 430.2,466.7 431.2,467.2 432.2,467.6 433.2,467.9 434.2,468.7 435.2,469.8 436.2,469.0 437.2,467.6 438.2,467.2 439.2,466.3 440.3,466.2 441.4,466.2 442.4,466.3 443.5,465.9 444.6,466.2 445.7,465.8 446.7,466.6 447.7,467.4 448.7,467.9 449.7,468.1 450.7,469.4 451.7,469.6 452.7,468.7 453.7,467.3 454.7,466.9 455.7,465.8 456.8,466.2 457.9,466.0 459.0,466.3 460.1,466.1 461.2,466.3 462.2,465.8 463.2,466.7 464.2,467.4 465.2,468.1 466.2,468.2 467.2,469.3 468.2,469.9 469.2,468.8 470.2,468.2 471.2,467.3 472.2,466.0 473.3,466.0 474.4,465.7 475.5,466.3 476.6,466.4 477.7,466.0 478.8,466.2 479.8,466.8 480.8,467.4 481.8,467.4 482.8,468.6 483.8,469.0 484.8,469.7 485.8,468.5 486.8,467.9 487.8,467.1 488.8,466.1 489.9,466.2 490.9,465.5 492.0,465.7 493.1,465.9 494.2,466.2 495.3,465.7 496.3,466.8 497.3,467.3 498.3,467.3 499.3,468.3 500.3,468.6 501.3,469.1 502.3,468.3 503.3,467.6 504.3,466.6 505.3,465.7 506.4,465.5 507.5,466.0 508.6,465.9 509.7,466.1 510.7,466.1 511.8,465.7 512.8,467.0 513.8,466.7 514.8,467.7 515.8,468.1 516.8,468.8 517.8,469.1 518.8,469.0 519.8,467.6 520.8,466.4 521.8,466.1 522.9,465.6 524.0,466.0 525.1,465.8 526.2,466.1 527.3,466.5 528.4,466.3 529.4,466.5 530.4,467.5 531.4,467.9 532.4,468.2 533.4,468.6 534.4,469.6 535.4,468.7 536.4,468.2 537.4,467.3 538.4,466.1 539.4,465.9 540.5,466.4 541.6,465.5 542.7,465.6 543.8,466.1 544.9,466.1 545.9,466.2 546.9,467.3 547.9,468.1 548.9,468.2 549.9,468.8 550.9,469.2 551.9,468.4 552.9,468.2 553.9,466.8 554.9,466.5 556.0,466.4 557.1,466.1 558.2,465.8 559.2,466.5 560.3,466.0 561.4,465.9 562.4,466.4 563.4,467.7 564.4,467.7 565.4,468.1 566.4,468.9 567.4,469.1 568.4,468.7 569.4,467.7 570.4,466.7 571.4,466.3 572.5,466.3 573.6,465.5 574.7,466.0 575.8,465.8 576.9,466.4 577.9,466.3 578.9,466.3 579.9,466.9 580.9,467.4 581.9,468.8 582.9,468.7 583.9,469.6 584.9,468.6 585.9,467.9 586.9,467.0 587.9,466.2 589.0,465.6 590.1,466.3 591.2,465.8 592.3,466.0 593.4,465.8 594.5,465.8 595.5,466.6 596.5,467.1 597.5,467.6 598.5,468.6 599.5,469.0 600.5,469.0 601.5,468.4 602.5,467.7 603.5,467.3 604.5,466.4 605.6,466.0 606.7,465.5 607.7,466.3 608.8,465.9 609.9,466.1 611.0,466.2 612.0,466.7 613.0,467.1 614.0,468.2 615.0,468.2 616.0,468.8 617.0,469.9 618.0,468.3 619.0,467.5 620.0,467.2 621.0,465.6 622.1,466.3 623.2,466.2 624.3,465.9 625.4,465.8 626.5,466.3 627.5,466.4 628.5,466.2 629.5,467.1 630.5,467.8 631.5,468.3 632.5,468.7 633.5,469.2 634.5,468.7 635.5,468.1 636.5,466.4 637.5,465.7 638.6,466.3 639.7,466.3 640.8,466.2 641.9,465.5 643.0,466.2 644.1,466.5 645.1,467.1 646.1,467.4 647.1,467.3 648.1,468.7 649.1,468.6 650.1,469.6 651.1,469.1 652.1,468.0 653.1,466.5 654.1,465.8 646.0,466.4 647.7,468.9 648.8,470.8 650.0,472.1 651.1,473.3 652.2,472.2 653.2,470.1 654.3,468.7 655.4,467.5 656.6,466.6 657.8,466.1 659.0,466.1 660.1,465.9 661.1,465.8 662.2,464.7 663.2,465.0 664.3,464.9 665.3,465.2 666.4,465.1 667.4,465.5 668.5,464.9 669.5,464.6 670.6,465.3 671.6,464.7 672.7,465.2 673.7,465.0 674.8,465.4 675.8,465.1 676.9,465.1 677.9,464.8 679.0,465.1 680.0,464.8 681.2,465.6 682.3,465.7 683.5,465.6 684.8,457.2 686.0,448.9 687.2,451.7 688.5,453.7 689.6,456.8 690.6,459.3 691.7,461.2 692.8,464.4 693.9,465.2 695.0,466.6 696.0,467.0 697.1,466.6 698.1,467.2 699.2,466.7 700.2,466.5 701.2,466.9 702.3,466.1 703.3,466.7 704.4,466.0 705.4,466.0 706.4,466.7 707.5,466.4 708.5,465.9 709.6,465.7 710.6,466.5 711.7,466.4 712.9,466.8 714.0,466.3 715.1,467.0 716.3,466.9 717.4,467.0 718.4,467.8 719.4,468.7 720.5,469.0 721.5,469.7 722.5,470.1 723.5,471.4 724.5,471.9 725.6,472.6 726.6,472.9 727.6,474.0 728.7,473.1 729.9,472.6 731.0,472.0 732.1,471.6 733.3,470.7 734.4,469.8 735.4,469.4 736.5,469.2 737.5,468.7 738.5,469.2 739.5,468.5 740.6,468.4 741.6,467.3 742.6,467.5 743.7,467.5 744.7,466.9 745.7,466.6 746.8,466.6 747.8,466.2 748.8,466.1 749.9,466.1 750.9,466.2 751.9,466.1 752.9,466.5 754.0,465.7 755.0,465.8 756.1,465.9 757.1,465.9 758.2,466.1 759.2,466.1 760.3,466.5 761.3,466.1 762.4,467.1 763.5,466.7 764.5,467.3 765.6,467.2 766.6,467.3 767.7,467.2 768.7,467.7 769.8,467.0 770.8,467.7 771.9,467.4 772.9,468.0 773.9,468.2 775.0,467.8 776.0,468.0 777.0,468.0 778.0,467.0 779.0,465.7 780.1,464.8 781.1,464.2 782.1,462.4 783.4,464.1 784.6,466.0 785.9,467.4 787.2,469.5 788.3,469.1 789.5,468.1 790.6,467.8 791.7,467.8 792.9,467.7 794.0,466.9 795.0,466.8 796.0,467.3 797.0,466.4 798.0,466.4 799.0,467.2 800.0,466.8 801.0,466.5 802.0,467.0 803.0,467.5 804.0,467.0 805.0,466.9 806.0,466.6 807.0,466.6 808.0,467.5 809.0,467.1 810.0,467.6 811.0,466.7 812.0,466.9 813.0,466.7 814.0,467.1 815.0,466.8 816.0,467.0 817.0,467.2 818.0,467.1 819.0,466.7 820.0,466.6 821.0,467.4 822.0,466.5 823.0,466.8 824.0,466.6 825.0,466.6 826.0,466.0 827.0,466.1 828.0,465.8 829.0,466.2 830.0,466.4 831.1,464.9 832.2,464.0 833.3,462.2 834.3,462.2 835.3,462.9 836.4,463.0 837.4,463.3 838.4,463.3 839.7,464.8 841.0,466.2 842.2,468.5 843.5,470.0 844.8,470.5 846.1,471.3 847.4,463.5 848.6,456.2 849.7,458.9 850.9,461.3 852.0,464.5 853.0,465.4 854.0,465.7 855.1,466.4 856.1,467.2 857.1,468.2 858.3,467.2 859.5,466.7 860.8,466.0 862.0,464.7 863.2,466.0 864.4,468.1 865.6,468.8 866.6,468.5 867.6,468.2 868.7,467.8 869.7,467.1 870.7,466.9 871.8,464.7 873.0,463.1 874.1,460.9 875.2,462.3 876.4,463.2 877.5,464.5 879.2,463.5 880.2,464.4 881.2,465.8 882.3,466.6 883.3,467.9 884.3,468.7 885.4,467.0 886.6,464.9 887.7,463.7 888.7,463.6 889.7,463.7 890.8,463.9 891.8,464.3 892.8,464.8 893.8,465.4 894.8,465.3 895.9,465.3 896.9,466.3 897.9,466.4 898.9,466.1 899.9,466.4 901.0,466.7 902.0,467.2 903.0,468.0 904.1,468.3 905.3,468.3 906.5,468.2 907.6,468.7 908.8,468.9 909.9,469.1 911.0,469.4 912.2,470.5 913.3,471.3 914.4,471.8 915.6,471.7 916.7,472.7 917.8,471.8 919.0,471.8 920.1,470.9 921.2,470.9 922.4,470.2 923.5,468.9 924.5,468.8 925.5,469.1 926.6,468.3 927.6,467.9 928.6,467.6 929.6,467.6 930.6,467.4 931.7,466.7 932.7,466.8 933.7,466.1 934.7,465.2 935.7,465.6 936.8,464.8 937.8,464.1 938.8,464.7 939.8,464.4 940.8,465.5 941.9,466.0 942.9,467.1 943.9,467.2 944.9,466.1 945.9,465.2 947.0,464.1 948.0,463.5 949.0,462.4 950.0,463.5 951.0,463.6 952.1,464.5 953.1,465.0 954.1,466.5 955.2,467.2 956.4,468.0 957.5,468.6 958.5,467.5 959.5,466.4 960.6,466.3 961.6,465.1 962.6,463.7 963.6,464.9 964.6,465.8 965.7,467.5 966.7,468.7 967.7,469.0 968.8,468.1 969.8,466.2 970.9,465.1 971.9,463.8 973.0,465.0 974.0,466.7 975.1,467.7 976.2,468.8 977.2,467.8 978.3,466.4 979.4,464.6 980.4,463.3 981.4,464.4 982.4,465.3 983.5,466.8 984.5,468.0 985.5,469.3 986.6,469.1 987.7,468.4 988.8,468.5 989.8,467.9 990.9,467.6 992.0,466.8" fill="none" stroke="#ff1a1a" stroke-width="1"/><line x1="330" y1="466" x2="992" y2="466" stroke="#ff1010" stroke-width="1.3"/><line x1="589.5" y1="74" x2="589.5" y2="481" stroke="#d8c800" stroke-width="1"/><rect x="996.8" y="68" width="10" height="419" fill="#b2b2b2"/><rect x="996.8" y="68" width="10" height="10.5" fill="#cfcfcf" stroke="#a8a8a8" stroke-width="0.5"/><path d="M999 75.5 L1001.8 71.5 L1004.6 75.5 Z" fill="#777"/><rect x="996.8" y="477" width="10" height="10" fill="#cfcfcf" stroke="#a8a8a8" stroke-width="0.5"/><path d="M999 480.5 L1001.8 484.5 L1004.6 480.5 Z" fill="#8a8a8a"/><rect x="284" y="488" width="722.7" height="9.5" fill="#b2b2b2"/><rect x="284" y="488" width="10.5" height="9.5" fill="#cfcfcf" stroke="#a8a8a8" stroke-width="0.5"/><path d="M291.5 490.5 L287.5 492.7 L291.5 495 Z" fill="#8a8a8a"/><rect x="985.7" y="488" width="10" height="9.5" fill="#cfcfcf" stroke="#a8a8a8" stroke-width="0.5"/><path d="M988.5 490.5 L992.5 492.7 L988.5 495 Z" fill="#8a8a8a"/><line x1="330.0" y1="501" x2="330.0" y2="504" stroke="#333" stroke-width="1"/><line x1="346.5" y1="501" x2="346.5" y2="504" stroke="#333" stroke-width="1"/><line x1="363.1" y1="501" x2="363.1" y2="504" stroke="#333" stroke-width="1"/><line x1="379.6" y1="501" x2="379.6" y2="504" stroke="#333" stroke-width="1"/><line x1="396.1" y1="501" x2="396.1" y2="504" stroke="#333" stroke-width="1"/><line x1="412.6" y1="501" x2="412.6" y2="504" stroke="#333" stroke-width="1"/><line x1="429.2" y1="501" x2="429.2" y2="504" stroke="#333" stroke-width="1"/><line x1="445.7" y1="501" x2="445.7" y2="504" stroke="#333" stroke-width="1"/><line x1="462.2" y1="501" x2="462.2" y2="504" stroke="#333" stroke-width="1"/><line x1="478.8" y1="501" x2="478.8" y2="504" stroke="#333" stroke-width="1"/><line x1="495.3" y1="501" x2="495.3" y2="504" stroke="#333" stroke-width="1"/><line x1="511.8" y1="501" x2="511.8" y2="504" stroke="#333" stroke-width="1"/><line x1="528.4" y1="501" x2="528.4" y2="504" stroke="#333" stroke-width="1"/><line x1="544.9" y1="501" x2="544.9" y2="504" stroke="#333" stroke-width="1"/><line x1="561.4" y1="501" x2="561.4" y2="504" stroke="#333" stroke-width="1"/><line x1="578.0" y1="501" x2="578.0" y2="504" stroke="#333" stroke-width="1"/><line x1="594.5" y1="501" x2="594.5" y2="504" stroke="#333" stroke-width="1"/><line x1="611.0" y1="501" x2="611.0" y2="504" stroke="#333" stroke-width="1"/><line x1="627.5" y1="501" x2="627.5" y2="504" stroke="#333" stroke-width="1"/><line x1="644.1" y1="501" x2="644.1" y2="504" stroke="#333" stroke-width="1"/><line x1="660.6" y1="501" x2="660.6" y2="504" stroke="#333" stroke-width="1"/><line x1="677.1" y1="501" x2="677.1" y2="504" stroke="#333" stroke-width="1"/><line x1="693.7" y1="501" x2="693.7" y2="504" stroke="#333" stroke-width="1"/><line x1="710.2" y1="501" x2="710.2" y2="504" stroke="#333" stroke-width="1"/><line x1="726.7" y1="501" x2="726.7" y2="504" stroke="#333" stroke-width="1"/><line x1="743.2" y1="501" x2="743.2" y2="504" stroke="#333" stroke-width="1"/><line x1="759.8" y1="501" x2="759.8" y2="504" stroke="#333" stroke-width="1"/><line x1="776.3" y1="501" x2="776.3" y2="504" stroke="#333" stroke-width="1"/><line x1="792.8" y1="501" x2="792.8" y2="504" stroke="#333" stroke-width="1"/><line x1="809.4" y1="501" x2="809.4" y2="504" stroke="#333" stroke-width="1"/><line x1="825.9" y1="501" x2="825.9" y2="504" stroke="#333" stroke-width="1"/><line x1="842.4" y1="501" x2="842.4" y2="504" stroke="#333" stroke-width="1"/><line x1="859.0" y1="501" x2="859.0" y2="504" stroke="#333" stroke-width="1"/><line x1="875.5" y1="501" x2="875.5" y2="504" stroke="#333" stroke-width="1"/><line x1="892.0" y1="501" x2="892.0" y2="504" stroke="#333" stroke-width="1"/><line x1="908.6" y1="501" x2="908.6" y2="504" stroke="#333" stroke-width="1"/><line x1="925.1" y1="501" x2="925.1" y2="504" stroke="#333" stroke-width="1"/><line x1="941.6" y1="501" x2="941.6" y2="504" stroke="#333" stroke-width="1"/><line x1="958.1" y1="501" x2="958.1" y2="504" stroke="#333" stroke-width="1"/><line x1="974.7" y1="501" x2="974.7" y2="504" stroke="#333" stroke-width="1"/><line x1="991.2" y1="501" x2="991.2" y2="504" stroke="#333" stroke-width="1"/><line x1="325" y1="74.5" x2="329" y2="74.5" stroke="#333"/><line x1="325" y1="466" x2="329" y2="466" stroke="#333"/><line x1="325" y1="480.5" x2="329" y2="480.5" stroke="#333"/></svg>
<div class="t" style="left:330.0px;transform:translateX(-50%) scaleX(0.89);top:504.8px;font-size:7.7px;color:#222;">0</div>
<div class="t" style="left:346.53px;transform:translateX(-50%) scaleX(0.89);top:504.8px;font-size:7.7px;color:#222;">1</div>
<div class="t" style="left:363.06px;transform:translateX(-50%) scaleX(0.89);top:504.8px;font-size:7.7px;color:#222;">2</div>
<div class="t" style="left:379.59000000000003px;transform:translateX(-50%) scaleX(0.89);top:504.8px;font-size:7.7px;color:#222;">3</div>
<div class="t" style="left:396.12px;transform:translateX(-50%) scaleX(0.89);top:504.8px;font-size:7.7px;color:#222;">4</div>
<div class="t" style="left:412.65px;transform:translateX(-50%) scaleX(0.89);top:504.8px;font-size:7.7px;color:#222;">5</div>
<div class="t" style="left:429.18px;transform:translateX(-50%) scaleX(0.89);top:504.8px;font-size:7.7px;color:#222;">6</div>
<div class="t" style="left:445.71000000000004px;transform:translateX(-50%) scaleX(0.89);top:504.8px;font-size:7.7px;color:#222;">7</div>
<div class="t" style="left:462.24px;transform:translateX(-50%) scaleX(0.89);top:504.8px;font-size:7.7px;color:#222;">8</div>
<div class="t" style="left:478.77px;transform:translateX(-50%) scaleX(0.89);top:504.8px;font-size:7.7px;color:#222;">9</div>
<div class="t" style="left:495.3px;transform:translateX(-50%) scaleX(0.89);top:504.8px;font-size:7.7px;color:#222;">10</div>
<div class="t" style="left:511.83000000000004px;transform:translateX(-50%) scaleX(0.89);top:504.8px;font-size:7.7px;color:#222;">11</div>
<div class="t" style="left:528.36px;transform:translateX(-50%) scaleX(0.89);top:504.8px;font-size:7.7px;color:#222;">12</div>
<div class="t" style="left:544.89px;transform:translateX(-50%) scaleX(0.89);top:504.8px;font-size:7.7px;color:#222;">13</div>
<div class="t" style="left:561.4200000000001px;transform:translateX(-50%) scaleX(0.89);top:504.8px;font-size:7.7px;color:#222;">14</div>
<div class="t" style="left:577.95px;transform:translateX(-50%) scaleX(0.89);top:504.8px;font-size:7.7px;color:#222;">15</div>
<div class="t" style="left:594.48px;transform:translateX(-50%) scaleX(0.89);top:504.8px;font-size:7.7px;color:#222;">16</div>
<div class="t" style="left:611.01px;transform:translateX(-50%) scaleX(0.89);top:504.8px;font-size:7.7px;color:#222;">17</div>
<div class="t" style="left:627.54px;transform:translateX(-50%) scaleX(0.89);top:504.8px;font-size:7.7px;color:#222;">18</div>
<div class="t" style="left:644.07px;transform:translateX(-50%) scaleX(0.89);top:504.8px;font-size:7.7px;color:#222;">19</div>
<div class="t" style="left:660.6px;transform:translateX(-50%) scaleX(0.89);top:504.8px;font-size:7.7px;color:#222;">20</div>
<div class="t" style="left:677.13px;transform:translateX(-50%) scaleX(0.89);top:504.8px;font-size:7.7px;color:#222;">21</div>
<div class="t" style="left:693.6600000000001px;transform:translateX(-50%) scaleX(0.89);top:504.8px;font-size:7.7px;color:#222;">22</div>
<div class="t" style="left:710.19px;transform:translateX(-50%) scaleX(0.89);top:504.8px;font-size:7.7px;color:#222;">23</div>
<div class="t" style="left:726.72px;transform:translateX(-50%) scaleX(0.89);top:504.8px;font-size:7.7px;color:#222;">24</div>
<div class="t" style="left:743.25px;transform:translateX(-50%) scaleX(0.89);top:504.8px;font-size:7.7px;color:#222;">25</div>
<div class="t" style="left:759.78px;transform:translateX(-50%) scaleX(0.89);top:504.8px;font-size:7.7px;color:#222;">26</div>
<div class="t" style="left:776.3100000000001px;transform:translateX(-50%) scaleX(0.89);top:504.8px;font-size:7.7px;color:#222;">27</div>
<div class="t" style="left:792.84px;transform:translateX(-50%) scaleX(0.89);top:504.8px;font-size:7.7px;color:#222;">28</div>
<div class="t" style="left:809.37px;transform:translateX(-50%) scaleX(0.89);top:504.8px;font-size:7.7px;color:#222;">29</div>
<div class="t" style="left:825.9000000000001px;transform:translateX(-50%) scaleX(0.89);top:504.8px;font-size:7.7px;color:#222;">30</div>
<div class="t" style="left:842.4300000000001px;transform:translateX(-50%) scaleX(0.89);top:504.8px;font-size:7.7px;color:#222;">31</div>
<div class="t" style="left:858.96px;transform:translateX(-50%) scaleX(0.89);top:504.8px;font-size:7.7px;color:#222;">32</div>
<div class="t" style="left:875.49px;transform:translateX(-50%) scaleX(0.89);top:504.8px;font-size:7.7px;color:#222;">33</div>
<div class="t" style="left:892.02px;transform:translateX(-50%) scaleX(0.89);top:504.8px;font-size:7.7px;color:#222;">34</div>
<div class="t" style="left:908.5500000000001px;transform:translateX(-50%) scaleX(0.89);top:504.8px;font-size:7.7px;color:#222;">35</div>
<div class="t" style="left:925.08px;transform:translateX(-50%) scaleX(0.89);top:504.8px;font-size:7.7px;color:#222;">36</div>
<div class="t" style="left:941.61px;transform:translateX(-50%) scaleX(0.89);top:504.8px;font-size:7.7px;color:#222;">37</div>
<div class="t" style="left:958.1400000000001px;transform:translateX(-50%) scaleX(0.89);top:504.8px;font-size:7.7px;color:#222;">38</div>
<div class="t" style="left:974.6700000000001px;transform:translateX(-50%) scaleX(0.89);top:504.8px;font-size:7.7px;color:#222;">39</div>
<div class="t" style="left:991.2px;transform:translateX(-50%) scaleX(0.89);top:504.8px;font-size:7.7px;color:#222;">40</div>
<div class="t" style="right:699.8px;transform-origin:100% 50%;top:69.6px;font-size:7.4px;color:#222;">300</div>
<div class="t" style="right:699.8px;transform-origin:100% 50%;top:461px;font-size:7.4px;color:#222;">0</div>
<div class="t" style="right:699.8px;transform-origin:100% 50%;top:475.8px;font-size:7.4px;color:#222;">-10</div>
<div class="t" style="left:299.5px;top:478px;transform-origin:0 0;transform:rotate(-90deg);font-size:7.7px">Slope</div>
<div class="t" style="left:660.9px;transform:translateX(-50%);top:515.3px;font-size:7.76px;color:#222;">Distance (mi)</div>
<div style="position:absolute;left:270px;top:527px;width:752px;height:17px;background:#f0f0f0;border-top:1px solid #d8d8d8"></div>
<div class="t" style="left:272px;transform-origin:0 50%;top:532px;font-size:7.66px;color:#1a1a1a;">At 1:11:17 (15.7 mi): Power: 177 W; Speed 24.4 mi/h; Wind 24.1 mi/h; Elev 56 ft; Slope -1.8%; HR 155 bpm; Cadence 68 rpm; Gear Ratio NaN; rec rate = 1 s</div>
<div style="position:absolute;left:118.6px;top:84.8px;width:528.4px;height:380.8px;background:#f0f0f0;border:1px solid #c8c8c8;border-radius:6px;box-shadow:0 2px 14px rgba(0,0,0,0.18);overflow:hidden"><div style="position:absolute;left:0;top:0;width:100%;height:20px;background:#eef3f9"></div></div>
<svg width="20" height="20" style="left:121px;top:87px"><path d="M5.2 2.6 L13.2 2.6 Q13.6 2.6 13.5 3.2 L11.8 12.4 Q11.7 13 11.1 13 L3.4 13 Q2.9 13 3 12.4 L4.6 3.2 Q4.7 2.6 5.2 2.6 Z" fill="#15506a"/><ellipse cx="9.6" cy="5.2" rx="2.1" ry="0.85" fill="#fff"/><path d="M6.4 7.3 L9.8 7.3 L9.1 11.6 L5 11.6 Z" fill="#fff"/></svg>
<div class="t" style="left:137.7px;transform-origin:0 50%;top:90.3px;font-size:7.7px;color:#111;">File Synchronization Result</div>
<svg width="660" height="110"><path d="M632 91.7 L639.5 99 M639.5 91.7 L632 99" stroke="#333" stroke-width="0.9"/></svg>
<div style="position:absolute;left:135px;top:121px;width:496px;height:311px;background:linear-gradient(90deg,#fdfdfd 0%,#f9f9f9 94%,#e8e8e8 97%,#c8c8c8 100%)"></div>
<div style="position:absolute;left:135px;top:121px;width:496px;height:3px;background:#fff"></div>
<div style="position:absolute;left:146.7px;top:127.2px;width:468.3px;height:276.3px;background:linear-gradient(90deg,#f0f0f0,#e4e4e4);border-top:2px solid #d2d2d2;border-left:2px solid #d2d2d2"></div>
<svg width="1024" height="576"><rect x="177" y="134.2" width="422" height="127.19999999999999" fill="#000"/><line x1="201.0" y1="134.2" x2="201.0" y2="261.4" stroke="#3c3c3c"/><line x1="224.3" y1="134.2" x2="224.3" y2="261.4" stroke="#3c3c3c"/><line x1="247.7" y1="134.2" x2="247.7" y2="261.4" stroke="#3c3c3c"/><line x1="271.0" y1="134.2" x2="271.0" y2="261.4" stroke="#3c3c3c"/><line x1="294.4" y1="134.2" x2="294.4" y2="261.4" stroke="#3c3c3c"/><line x1="317.8" y1="134.2" x2="317.8" y2="261.4" stroke="#3c3c3c"/><line x1="341.1" y1="134.2" x2="341.1" y2="261.4" stroke="#3c3c3c"/><line x1="364.5" y1="134.2" x2="364.5" y2="261.4" stroke="#3c3c3c"/><line x1="387.8" y1="134.2" x2="387.8" y2="261.4" stroke="#3c3c3c"/><line x1="411.2" y1="134.2" x2="411.2" y2="261.4" stroke="#3c3c3c"/><line x1="434.6" y1="134.2" x2="434.6" y2="261.4" stroke="#3c3c3c"/><line x1="457.9" y1="134.2" x2="457.9" y2="261.4" stroke="#3c3c3c"/><line x1="481.3" y1="134.2" x2="481.3" y2="261.4" stroke="#3c3c3c"/><line x1="504.6" y1="134.2" x2="504.6" y2="261.4" stroke="#3c3c3c"/><line x1="528.0" y1="134.2" x2="528.0" y2="261.4" stroke="#3c3c3c"/><line x1="551.4" y1="134.2" x2="551.4" y2="261.4" stroke="#3c3c3c"/><line x1="574.7" y1="134.2" x2="574.7" y2="261.4" stroke="#3c3c3c"/><line x1="177" y1="245.0" x2="599" y2="245.0" stroke="#3c3c3c"/><line x1="177" y1="229.4" x2="599" y2="229.4" stroke="#3c3c3c"/><line x1="177" y1="213.7" x2="599" y2="213.7" stroke="#3c3c3c"/><line x1="177" y1="198.1" x2="599" y2="198.1" stroke="#3c3c3c"/><line x1="177" y1="182.4" x2="599" y2="182.4" stroke="#3c3c3c"/><line x1="177" y1="166.7" x2="599" y2="166.7" stroke="#3c3c3c"/><line x1="177" y1="151.1" x2="599" y2="151.1" stroke="#3c3c3c"/><line x1="173.5" y1="261.2" x2="176.5" y2="261.2" stroke="#555" stroke-width="0.9"/><line x1="173.5" y1="245.5" x2="176.5" y2="245.5" stroke="#555" stroke-width="0.9"/><line x1="173.5" y1="229.9" x2="176.5" y2="229.9" stroke="#555" stroke-width="0.9"/><line x1="173.5" y1="214.2" x2="176.5" y2="214.2" stroke="#555" stroke-width="0.9"/><line x1="173.5" y1="198.6" x2="176.5" y2="198.6" stroke="#555" stroke-width="0.9"/><line x1="173.5" y1="182.9" x2="176.5" y2="182.9" stroke="#555" stroke-width="0.9"/><line x1="173.5" y1="167.2" x2="176.5" y2="167.2" stroke="#555" stroke-width="0.9"/><line x1="173.5" y1="151.6" x2="176.5" y2="151.6" stroke="#555" stroke-width="0.9"/><line x1="173.5" y1="135.9" x2="176.5" y2="135.9" stroke="#555" stroke-width="0.9"/><rect x="177" y="267" width="422" height="120.69999999999999" fill="#000"/><line x1="201.0" y1="267" x2="201.0" y2="387.7" stroke="#3c3c3c"/><line x1="224.3" y1="267" x2="224.3" y2="387.7" stroke="#3c3c3c"/><line x1="247.7" y1="267" x2="247.7" y2="387.7" stroke="#3c3c3c"/><line x1="271.0" y1="267" x2="271.0" y2="387.7" stroke="#3c3c3c"/><line x1="294.4" y1="267" x2="294.4" y2="387.7" stroke="#3c3c3c"/><line x1="317.8" y1="267" x2="317.8" y2="387.7" stroke="#3c3c3c"/><line x1="341.1" y1="267" x2="341.1" y2="387.7" stroke="#3c3c3c"/><line x1="364.5" y1="267" x2="364.5" y2="387.7" stroke="#3c3c3c"/><line x1="387.8" y1="267" x2="387.8" y2="387.7" stroke="#3c3c3c"/><line x1="411.2" y1="267" x2="411.2" y2="387.7" stroke="#3c3c3c"/><line x1="434.6" y1="267" x2="434.6" y2="387.7" stroke="#3c3c3c"/><line x1="457.9" y1="267" x2="457.9" y2="387.7" stroke="#3c3c3c"/><line x1="481.3" y1="267" x2="481.3" y2="387.7" stroke="#3c3c3c"/><line x1="504.6" y1="267" x2="504.6" y2="387.7" stroke="#3c3c3c"/><line x1="528.0" y1="267" x2="528.0" y2="387.7" stroke="#3c3c3c"/><line x1="551.4" y1="267" x2="551.4" y2="387.7" stroke="#3c3c3c"/><line x1="574.7" y1="267" x2="574.7" y2="387.7" stroke="#3c3c3c"/><line x1="177" y1="372.6" x2="599" y2="372.6" stroke="#3c3c3c"/><line x1="177" y1="357.6" x2="599" y2="357.6" stroke="#3c3c3c"/><line x1="177" y1="342.6" x2="599" y2="342.6" stroke="#3c3c3c"/><line x1="177" y1="327.7" x2="599" y2="327.7" stroke="#3c3c3c"/><line x1="177" y1="312.8" x2="599" y2="312.8" stroke="#3c3c3c"/><line x1="177" y1="297.8" x2="599" y2="297.8" stroke="#3c3c3c"/><line x1="177" y1="282.9" x2="599" y2="282.9" stroke="#3c3c3c"/><line x1="173.5" y1="388.0" x2="176.5" y2="388.0" stroke="#555" stroke-width="0.9"/><line x1="173.5" y1="373.1" x2="176.5" y2="373.1" stroke="#555" stroke-width="0.9"/><line x1="173.5" y1="358.1" x2="176.5" y2="358.1" stroke="#555" stroke-width="0.9"/><line x1="173.5" y1="343.1" x2="176.5" y2="343.1" stroke="#555" stroke-width="0.9"/><line x1="173.5" y1="328.2" x2="176.5" y2="328.2" stroke="#555" stroke-width="0.9"/><line x1="173.5" y1="313.2" x2="176.5" y2="313.2" stroke="#555" stroke-width="0.9"/><line x1="173.5" y1="298.3" x2="176.5" y2="298.3" stroke="#555" stroke-width="0.9"/><line x1="173.5" y1="283.4" x2="176.5" y2="283.4" stroke="#555" stroke-width="0.9"/><line x1="173.5" y1="268.4" x2="176.5" y2="268.4" stroke="#555" stroke-width="0.9"/><rect x="177" y="261.4" width="422" height="5.6" fill="#e0e0e0"/><line x1="177" y1="263" x2="599" y2="263" stroke="#f6f6f6"/><polyline points="177.0,218.9 177.5,234.4 178.0,231.9 178.5,233.3 179.0,227.9 179.5,234.3 180.0,227.1 180.5,229.5 181.0,224.7 181.5,229.2 182.0,226.8 182.5,227.6 183.0,224.8 183.5,236.5 184.0,221.5 184.5,228.6 185.0,223.0 185.5,226.5 186.0,224.3 186.5,226.7 187.0,223.9 187.5,228.9 188.0,224.5 188.5,226.2 189.0,215.0 189.5,226.3 190.0,220.0 190.5,225.9 191.0,222.6 191.5,225.1 192.0,223.1 192.5,225.7 193.0,223.0 193.5,225.6 194.0,222.3 194.5,225.2 195.0,223.5 195.5,224.6 196.0,223.0 196.5,226.2 197.0,219.4 197.5,226.6 198.0,223.4 198.5,224.8 199.0,222.8 199.5,226.6 200.0,223.0 200.5,230.0 201.0,220.1 201.5,224.7 202.0,214.6 202.5,227.0 203.0,221.3 203.5,228.0 204.0,222.0 204.5,225.5 205.0,217.4 205.5,226.6 206.0,219.5 206.5,223.6 207.0,220.3 207.5,225.7 208.0,209.1 208.5,225.5 209.0,220.4 209.5,231.4 210.0,206.1 210.5,222.0 211.0,220.3 211.5,227.4 212.0,219.8 212.5,221.8 213.0,218.7 213.5,228.2 214.0,220.3 214.5,225.8 215.0,218.9 215.5,221.5 216.0,219.8 216.5,221.6 217.0,218.8 217.5,224.0 218.0,220.2 218.5,222.1 219.0,221.9 219.5,222.8 220.0,219.5 220.5,225.9 221.0,219.6 221.5,222.9 222.0,207.6 222.5,222.4 223.0,218.2 223.5,221.4 224.0,219.8 224.5,222.1 225.0,218.8 225.5,221.7 226.0,219.3 226.5,219.7 227.0,217.8 227.5,219.7 228.0,215.7 228.5,219.6 229.0,215.6 229.5,225.0 230.0,214.2 230.5,220.1 231.0,214.7 231.5,219.9 232.0,214.8 232.5,217.7 233.0,215.2 233.5,217.5 234.0,206.9 234.5,216.4 235.0,214.7 235.5,217.5 236.0,213.0 236.5,216.9 237.0,211.9 237.5,215.7 238.0,208.0 238.5,214.0 239.0,206.0 239.5,215.9 240.0,209.7 240.5,213.1 241.0,207.9 241.5,211.1 242.0,209.4 242.5,211.5 243.0,206.5 243.5,211.0 244.0,209.3 244.5,213.4 245.0,197.5 245.5,212.7 246.0,211.7 246.5,212.3 247.0,210.7 247.5,214.0 248.0,212.4 248.5,215.8 249.0,212.0 249.5,217.7 250.0,211.0 250.5,216.5 251.0,215.6 251.2,216.5 251.5,245.2 251.8,216.5 252.0,208.3 252.5,216.4 253.0,201.1 253.5,216.6 254.0,213.9 254.5,215.3 255.0,206.0 255.5,216.7 256.0,211.5 256.5,218.4 257.0,202.5 257.5,217.2 258.0,216.4 258.5,220.6 259.0,212.7 259.5,218.6 260.0,215.1 260.5,226.7 261.0,203.6 261.5,221.2 262.0,217.3 262.5,219.9 263.0,217.0 263.5,223.6 264.0,216.5 264.5,226.9 265.0,216.2 265.5,220.0 265.7,218.2 266.0,258.5 266.3,218.2 266.5,222.9 267.0,218.1 267.5,221.2 268.0,216.0 268.5,220.0 269.0,216.9 269.5,219.6 270.0,214.6 270.5,223.3 271.0,206.8 271.5,220.8 272.0,214.6 272.5,218.3 273.0,214.8 273.5,216.1 274.0,202.1 274.5,211.7 275.0,193.9 275.5,204.7 276.0,195.9 276.5,197.6 277.0,183.0 277.5,192.1 278.0,182.5 278.5,193.1 279.0,197.9 279.5,200.3 280.0,203.9 280.5,207.6 281.0,204.2 281.5,215.3 282.0,215.3 282.5,220.7 283.0,223.3 283.5,227.5 284.0,225.9 284.5,230.7 285.0,214.5 285.5,224.8 286.0,215.1 286.5,216.8 286.8,216.4 287.1,258.5 287.4,216.4 287.5,219.9 288.0,222.2 288.5,235.5 289.0,224.6 289.5,227.9 290.0,224.5 290.5,228.6 291.0,224.1 291.5,226.6 292.0,223.2 292.5,224.8 293.0,222.7 293.5,223.6 294.0,222.0 294.5,227.5 295.0,217.9 295.5,225.1 296.0,225.8 296.5,229.9 297.0,226.1 297.5,230.3 298.0,227.9 298.5,229.2 299.0,229.6 299.5,231.2 300.0,227.1 300.5,233.4 301.0,217.1 301.5,235.2 302.0,234.3 302.5,237.8 303.0,236.6 303.5,243.0 304.0,227.1 304.5,240.4 305.0,234.2 305.5,236.4 306.0,231.0 306.5,232.7 307.0,227.6 307.5,232.4 308.0,219.3 308.5,224.3 309.0,216.4 309.5,217.6 310.0,209.9 310.5,213.8 311.0,197.2 311.5,206.4 312.0,196.6 312.5,208.7 313.0,197.3 313.5,199.6 314.0,188.0 314.5,199.0 315.0,199.1 315.5,200.5 316.0,202.7 316.5,202.8 317.0,204.5 317.5,209.6 318.0,197.9 318.5,210.2 319.0,209.6 319.5,217.3 320.0,219.5 320.5,223.0 321.0,222.5 321.5,225.8 322.0,224.5 322.5,228.7 323.0,226.9 323.5,230.3 324.0,227.0 324.5,229.2 325.0,229.2 325.5,230.6 326.0,221.5 326.5,231.9 327.0,230.4 327.5,233.5 328.0,232.3 328.5,233.3 329.0,228.5 329.5,234.5 330.0,229.7 330.5,232.0 331.0,226.9 331.5,229.3 332.0,212.2 332.5,225.5 333.0,218.5 333.5,223.2 334.0,219.7 334.5,223.6 335.0,210.1 335.5,218.6 336.0,208.3 336.5,218.5 337.0,209.7 337.5,213.1 338.0,198.5 338.5,199.6 339.0,177.9 339.5,180.8 340.0,146.8 340.5,151.9 341.0,161.0 341.5,164.7 342.0,174.0 342.5,178.1 343.0,177.4 343.5,182.5 344.0,181.2 344.5,186.1 345.0,185.7 345.5,189.2 346.0,188.1 346.5,191.7 347.0,190.2 347.5,205.4 348.0,209.2 348.5,211.7 348.8,203.7 349.1,243.0 349.4,203.7 349.5,213.0 350.0,211.2 350.5,213.1 351.0,199.4 351.5,211.9 352.0,208.6 352.5,212.9 353.0,205.4 353.5,215.6 354.0,209.0 354.5,213.7 355.0,212.8 355.5,215.6 356.0,214.7 356.5,219.4 357.0,215.9 357.5,217.8 358.0,215.4 358.5,219.8 359.0,220.6 359.5,229.7 360.0,225.3 360.5,228.8 361.0,230.3 361.5,232.6 362.0,235.5 362.5,237.7 363.0,239.8 363.5,243.9 364.0,240.7 364.5,247.8 365.0,245.3 365.5,248.4 366.0,239.5 366.5,251.0 367.0,246.2 367.5,251.6 368.0,246.6 368.5,247.3 369.0,243.7 369.5,244.8 370.0,237.5 370.5,241.4 371.0,234.2 371.5,234.8 372.0,225.8 372.5,229.0 373.0,219.9 373.5,223.8 374.0,213.3 374.5,218.8 375.0,212.2 375.5,218.7 376.0,201.8 376.5,214.6 377.0,210.9 377.5,214.0 378.0,209.5 378.5,211.6 379.0,204.6 379.5,216.6 380.0,204.3 380.5,209.6 381.0,198.0 381.5,213.1 382.0,180.3 382.5,196.6 383.0,179.3 383.5,189.6 384.0,166.6 384.5,169.6 385.0,166.4 385.5,169.4 386.0,190.1 386.5,194.8 387.0,201.7 387.5,203.3 388.0,206.8 388.5,211.6 389.0,211.9 389.5,215.5 390.0,212.7 390.5,216.2 391.0,205.1 391.5,217.3 392.0,215.5 392.5,218.7 393.0,213.4 393.5,216.7 394.0,214.0 394.5,220.0 395.0,215.7 395.5,218.9 396.0,214.4 396.5,218.0 397.0,216.1 397.5,216.8 398.0,215.8 398.5,216.6 399.0,214.3 399.5,218.0 400.0,214.7 400.5,217.0 401.0,215.5 401.5,219.0 402.0,217.9 402.5,220.6 403.0,218.0 403.5,231.0 404.0,225.2 404.5,229.9 404.7,230.6 405.0,239.0 405.3,230.6 405.5,235.1 406.0,233.9 406.5,242.9 407.0,239.8 407.5,244.7 408.0,244.0 408.5,245.2 409.0,242.9 409.5,246.7 410.0,244.0 410.5,250.2 411.0,243.8 411.5,247.8 412.0,244.8 412.5,247.1 413.0,243.8 413.5,245.4 414.0,244.0 414.5,247.4 415.0,241.6 415.5,246.6 416.0,240.7 416.5,246.2 417.0,230.6 417.5,242.5 418.0,240.7 418.5,241.7 419.0,238.5 419.5,239.6 420.0,231.1 420.5,246.5 421.0,225.4 421.5,227.0 422.0,216.1 422.5,222.2 423.0,205.6 423.5,220.0 424.0,202.4 424.5,216.5 425.0,204.4 425.5,216.4 426.0,214.5 426.5,220.0 427.0,215.3 427.5,216.1 428.0,214.4 428.5,217.3 429.0,213.6 429.5,215.8 430.0,199.0 430.5,213.2 431.0,208.3 431.5,216.5 432.0,205.8 432.5,211.8 433.0,202.7 433.5,206.0 434.0,200.4 434.5,202.3 435.0,191.7 435.5,201.5 436.0,195.8 436.5,203.7 437.0,185.7 437.5,192.0 437.8,176.6 438.1,238.5 438.4,176.6 438.5,181.2 439.0,179.3 439.5,189.3 440.0,189.2 440.5,192.1 441.0,192.3 441.5,196.8 442.0,197.3 442.5,201.8 443.0,203.5 443.5,208.9 444.0,209.6 444.5,213.2 445.0,211.4 445.5,212.9 446.0,210.6 446.5,213.4 447.0,209.1 447.5,213.1 448.0,197.7 448.5,212.0 449.0,205.7 449.5,209.5 450.0,207.0 450.5,207.4 451.0,205.7 451.5,209.2 452.0,203.2 452.5,207.2 453.0,205.5 453.5,215.2 454.0,205.5 454.5,210.9 455.0,198.8 455.5,211.2 456.0,209.9 456.5,210.4 457.0,205.9 457.5,213.7 458.0,209.3 458.5,217.7 459.0,210.0 459.5,212.7 460.0,204.0 460.5,207.1 461.0,198.5 461.5,200.7 462.0,192.5 462.5,195.7 463.0,196.1 463.5,198.1 464.0,194.1 464.5,207.3 465.0,213.1 465.5,218.0 466.0,220.0 466.5,224.2 467.0,223.3 467.5,226.9 468.0,211.5 468.5,213.6 469.0,194.5 469.5,197.3 470.0,193.6 470.5,197.4 471.0,197.8 471.5,198.5 472.0,190.7 472.5,202.4 473.0,194.3 473.5,207.8 474.0,209.7 474.5,212.0 475.0,211.1 475.5,215.8 476.0,214.1 476.5,218.6 477.0,210.7 477.5,218.1 478.0,207.5 478.5,210.1 479.0,197.2 479.5,209.3 480.0,205.1 480.5,208.5 481.0,204.4 481.5,205.2 482.0,201.6 482.5,213.3 483.0,201.8 483.5,205.9 484.0,191.1 484.5,204.9 485.0,199.2 485.5,203.8 486.0,204.2 486.5,205.6 487.0,203.6 487.5,209.3 488.0,208.2 488.5,210.0 489.0,211.5 489.5,213.6 490.0,214.2 490.5,218.7 491.0,221.9 491.5,222.1 492.0,224.2 492.5,227.4 493.0,227.5 493.5,229.8 494.0,229.4 494.5,232.7 495.0,229.0 495.5,235.5 496.0,227.7 496.5,231.6 497.0,229.9 497.5,231.4 498.0,217.6 498.5,228.8 499.0,204.5 499.5,206.1 500.0,175.3 500.5,175.8 501.0,194.3 501.5,197.5 502.0,228.6 502.5,231.1 503.0,239.2 503.5,242.2 504.0,236.8 504.5,243.2 505.0,234.4 505.5,237.9 506.0,227.6 506.5,237.6 507.0,219.2 507.5,223.2 508.0,211.5 508.5,213.5 509.0,201.9 509.5,206.6 510.0,193.3 510.5,197.2 511.0,194.0 511.5,197.0 512.0,202.2 512.5,210.9 513.0,195.9 513.5,203.2 514.0,182.3 514.5,184.3 515.0,183.1 515.5,188.8 516.0,198.8 516.5,202.1 517.0,208.2 517.5,212.7 518.0,216.4 518.5,221.4 519.0,216.4 519.5,225.9 520.0,228.3 520.5,230.3 521.0,227.0 521.5,229.9 522.0,225.1 522.5,229.9 523.0,222.1 523.5,223.8 524.0,215.0 524.5,216.3 525.0,190.3 525.5,208.0 526.0,200.5 526.5,203.5 527.0,208.3 527.5,210.0 528.0,218.9 528.5,219.4 529.0,222.0 529.5,229.0 530.0,224.9 530.5,227.1 531.0,226.0 531.5,228.6 532.0,217.1 532.5,226.6 533.0,224.4 533.5,226.2 534.0,220.6 534.5,223.7 535.0,216.4 535.5,220.8 536.0,211.6 536.5,216.6 537.0,199.9 537.5,205.0 538.0,193.1 538.5,197.0 539.0,189.2 539.5,190.5 540.0,184.8 540.5,185.5 541.0,165.6 541.5,183.8 542.0,178.9 542.5,179.2 543.0,176.2 543.2,178.3 543.5,254.1 543.8,178.3 544.0,175.3 544.5,176.0 545.0,174.8 545.5,176.0 546.0,168.4 546.5,176.3 547.0,176.3 547.5,180.1 548.0,172.4 548.5,181.4 549.0,189.8 549.5,194.5 550.0,202.7 550.5,208.8 551.0,210.4 551.5,215.8 552.0,220.0 552.5,226.0 553.0,224.1 553.5,228.3 554.0,222.3 554.5,226.9 555.0,216.1 555.5,218.8 556.0,206.8 556.5,209.9 556.6,203.3 556.9,260.8 557.2,203.3 557.5,205.6 558.0,211.6 558.5,214.1 559.0,219.2 559.5,223.3 560.0,228.5 560.5,233.1 561.0,230.0 561.0,232.4 561.3,251.9 561.6,232.4 562.0,215.6 562.5,232.3 563.0,219.1 563.5,225.5 564.0,221.2 564.5,222.1 565.0,215.4 565.5,218.7 566.0,210.9 566.5,213.3 567.0,206.4 567.5,209.9 568.0,206.1 568.5,210.4 569.0,205.3 569.5,208.9 570.0,208.7 570.5,211.0 571.0,211.1 571.5,220.0 572.0,216.3 572.5,219.5 573.0,218.6 573.5,223.5 574.0,210.9 574.5,223.9 575.0,221.4 575.5,224.1 576.0,223.1 576.5,225.6 577.0,222.6 577.5,223.3 578.0,218.1 578.5,224.1 579.0,213.5 579.5,215.1 580.0,206.5 580.5,210.6 581.0,200.4 581.0,207.4 581.3,243.0 581.6,207.4 582.0,206.1 582.5,206.4 583.0,208.1 583.5,211.9 584.0,211.6 584.5,216.9 585.0,217.8 585.5,220.2 586.0,220.3 586.5,220.9 587.0,213.7 587.5,217.5 588.0,207.3 588.5,211.7 589.0,204.1 589.5,208.4 590.0,206.0 590.5,211.6 591.0,210.7 591.5,217.0 592.0,222.6 592.5,240.9" fill="none" stroke="#f04848" stroke-width="1.6"/><path d="M178.2 260.5V228M180.5 260.5V214.5M183.2 260.5V217M186 260.5V204.6M188 260.5V190M189.5 260.5V179M190.6 260.5V190M194 260.5V192M195.5 260.5V181.5M196.4 260.5V195M199.7 260.5V203.8M201.3 260.5V189.8M203 260.5V191.4" stroke="#f04444" stroke-width="1"/><path d="M177.0 232.4V221.1M179.0 229.6V221.1M184.0 224.1V210.6M192.5 226.0V229.7M197.0 220.8V214.9M204.0 220.6V211.2M206.0 222.5V218.1M211.0 219.3V207.7M212.0 211.4V202.0M217.5 221.7V210.4M222.5 222.7V217.7M224.0 219.9V208.9M225.0 219.5V220.2M237.5 214.6V210.8M242.0 209.5V210.2M249.5 219.4V211.4M253.0 213.8V211.4M254.5 216.8V202.8M260.0 216.4V216.2M268.5 220.0V228.9M271.0 215.7V207.7M273.0 214.9V208.4M273.5 223.1V218.9M275.5 204.1V209.3M280.5 207.8V214.4M281.0 208.8V208.5M285.0 221.1V224.7M300.5 232.0V236.8M302.5 238.2V226.5M306.0 228.6V229.1M316.5 216.7V217.4M330.5 230.6V238.2M332.5 228.2V233.7M334.5 225.9V221.8M335.5 219.4V212.5M336.5 217.5V213.2M338.0 197.7V185.5M346.5 194.1V193.5M349.5 212.3V220.2M358.5 219.5V216.6M361.0 230.4V230.6M364.5 246.9V238.7M373.0 215.5V224.0M374.5 218.6V226.2M382.5 196.1V188.2M383.0 180.4V182.5M387.5 203.5V203.1M388.5 211.9V211.3M389.0 210.9V198.7M393.5 218.1V208.0M402.5 218.8V226.8M406.0 235.5V227.6M410.0 238.6V233.3M415.5 244.4V251.5M419.5 241.5V242.6M425.5 217.6V210.8M433.0 203.5V209.4M437.0 190.3V178.4M441.5 196.3V202.2M443.0 205.3V195.9M443.5 206.7V206.4M450.5 210.4V216.0M456.0 208.6V209.9M461.5 199.3V205.0M465.0 209.6V198.7M465.5 216.3V206.8M467.0 223.8V221.6M471.0 195.5V192.9M483.0 202.9V195.4M483.5 203.7V194.2M485.5 209.2V213.0M486.0 203.1V206.2M486.5 208.0V202.6M488.0 208.8V204.1M496.0 229.5V238.7M499.5 206.2V203.4M507.5 221.7V223.7M515.0 185.7V181.6M521.5 231.4V237.2M527.5 211.9V210.8M530.5 227.4V236.7M537.5 208.0V204.6M539.0 178.8V169.5M545.0 171.6V170.8M557.5 207.0V207.5M566.0 209.3V203.2M578.0 217.4V208.3M578.5 220.0V224.6M580.0 205.6V210.8M581.0 191.9V201.6M582.0 203.9V190.6M584.5 216.3V223.2M592.0 236.7V231.5" stroke="#f04c4c" stroke-width="1.3"/><polyline points="177.0,232.4 177.5,237.0 178.0,230.8 178.5,232.5 179.0,229.6 179.5,233.0 180.0,229.0 180.5,229.1 181.0,227.1 181.5,228.2 182.0,213.8 182.5,228.6 183.0,226.1 183.5,230.9 184.0,224.1 184.5,226.5 185.0,221.7 185.5,229.4 186.0,210.9 186.5,228.9 187.0,222.7 187.5,226.2 188.0,212.0 188.5,225.4 189.0,224.7 189.5,238.7 190.0,222.0 190.5,227.2 191.0,213.4 191.5,226.5 192.0,224.0 192.5,226.0 193.0,222.9 193.5,226.1 194.0,222.5 194.5,225.2 195.0,213.6 195.5,224.8 196.0,221.8 196.5,224.5 197.0,220.8 197.5,233.1 198.0,221.3 198.5,230.3 199.0,221.2 199.5,228.2 200.0,217.9 200.5,225.1 201.0,222.4 201.5,227.4 202.0,222.4 202.5,226.8 203.0,221.4 203.5,224.2 204.0,220.6 204.5,224.1 205.0,221.1 205.5,232.6 206.0,222.5 206.5,223.7 207.0,222.3 207.5,225.1 208.0,220.6 208.5,222.8 209.0,213.5 209.5,222.4 210.0,216.3 210.5,225.1 211.0,219.3 211.5,221.2 212.0,211.4 212.5,221.3 213.0,218.6 213.5,224.0 214.0,218.9 214.5,222.2 215.0,219.9 215.5,222.5 216.0,210.5 216.5,225.0 217.0,221.1 217.5,221.7 218.0,219.1 218.5,225.2 219.0,221.9 219.5,224.2 220.0,216.2 220.5,222.7 221.0,207.8 221.5,222.4 222.0,221.1 222.5,222.7 223.0,220.2 223.5,228.6 224.0,219.9 224.5,222.7 225.0,219.5 225.5,220.3 226.0,216.7 226.5,222.1 227.0,205.3 227.5,218.7 228.0,216.3 228.5,229.1 229.0,216.9 229.5,217.7 230.0,214.8 230.5,220.9 231.0,213.2 231.5,216.1 232.0,213.2 232.5,217.4 233.0,214.8 233.5,221.1 234.0,214.3 234.5,217.7 235.0,211.2 235.5,216.5 236.0,213.4 236.5,216.1 237.0,202.1 237.5,214.6 238.0,213.1 238.5,215.7 239.0,208.9 239.5,212.5 240.0,208.6 240.5,211.0 241.0,209.7 241.2,210.5 241.5,195.2 241.8,210.5 242.0,209.5 242.5,213.0 243.0,209.4 243.5,218.5 244.0,207.2 244.5,210.6 245.0,208.9 245.5,212.4 246.0,210.9 246.5,216.3 247.0,210.0 247.5,215.2 248.0,211.4 248.5,216.2 249.0,214.3 249.5,219.4 250.0,212.3 250.5,218.1 251.0,215.8 251.5,216.1 252.0,206.5 252.5,218.3 253.0,213.8 253.5,216.4 254.0,201.6 254.5,216.8 255.0,213.8 255.5,215.6 256.0,213.0 256.3,217.7 256.6,178.5 256.9,217.7 257.0,214.5 257.5,226.0 258.0,215.7 258.5,227.9 259.0,218.0 259.5,220.5 260.0,216.4 260.5,219.2 261.0,218.6 261.5,220.2 262.0,218.7 262.5,220.3 263.0,215.0 263.5,219.7 264.0,218.7 264.5,219.2 265.0,215.7 265.5,219.4 266.0,218.5 266.5,218.8 267.0,216.9 267.5,219.6 268.0,205.9 268.5,220.0 269.0,212.0 269.5,221.3 270.0,216.6 270.5,229.3 271.0,215.7 271.5,222.7 272.0,202.5 272.5,217.8 273.0,214.9 273.5,223.1 274.0,208.9 274.5,212.9 275.0,199.5 275.5,204.1 276.0,196.1 276.5,198.4 277.0,184.2 277.5,195.4 278.0,189.6 278.5,198.8 279.0,197.4 279.5,198.1 280.0,198.6 280.5,207.8 281.0,208.8 281.5,212.5 282.0,217.7 282.5,222.3 283.0,222.4 283.5,232.3 284.0,227.5 284.5,231.3 285.0,221.1 285.5,225.8 286.0,214.0 286.5,220.0 287.0,216.0 287.5,229.2 288.0,221.0 288.5,224.8 289.0,224.6 289.5,227.2 290.0,216.5 290.5,228.8 291.0,223.2 291.5,227.4 292.0,222.7 292.5,224.6 293.0,218.6 293.5,234.1 294.0,220.1 294.5,225.0 295.0,215.6 295.5,226.2 296.0,224.8 296.5,228.5 297.0,218.7 297.5,228.2 297.9,228.1 298.2,207.4 298.5,228.1 298.5,228.7 299.0,229.6 299.5,230.9 300.0,226.7 300.5,232.0 301.0,231.9 301.5,234.2 302.0,232.9 302.5,238.2 303.0,236.1 303.5,238.4 304.0,235.4 304.5,239.0 305.0,221.6 305.5,236.0 306.0,228.6 306.5,234.1 307.0,227.0 307.5,234.8 308.0,222.5 308.5,222.8 309.0,214.0 309.5,217.9 310.0,209.8 310.5,211.8 311.0,196.4 311.5,207.0 312.0,199.2 312.5,202.7 313.0,195.8 313.5,200.2 314.0,196.8 314.5,202.5 315.0,198.8 315.5,201.2 316.0,201.4 316.5,216.7 317.0,205.4 317.5,206.6 318.0,208.8 318.5,210.5 319.0,215.0 319.5,218.6 319.9,221.8 320.2,197.4 320.5,221.8 320.5,223.6 321.0,224.6 321.5,226.4 322.0,224.9 322.5,229.3 323.0,217.1 323.5,229.0 324.0,227.9 324.5,229.5 325.0,229.7 325.5,230.3 326.0,229.0 326.5,232.3 327.0,229.9 327.5,232.4 328.0,231.0 328.5,234.0 329.0,231.9 329.5,235.1 330.0,228.9 330.5,230.6 331.0,225.0 331.5,228.5 332.0,224.8 332.5,228.2 333.0,220.2 333.5,232.5 334.0,218.9 334.5,225.9 335.0,217.7 335.5,219.4 336.0,206.5 336.5,217.5 337.0,209.1 337.5,212.3 338.0,197.7 338.5,201.9 339.0,179.1 339.5,181.3 340.0,149.2 340.5,151.3 341.0,161.0 341.5,164.6 342.0,174.5 342.5,176.5 343.0,178.9 343.5,181.8 344.0,181.6 344.5,184.7 345.0,186.1 345.5,198.9 346.0,186.3 346.5,194.1 347.0,201.2 347.5,210.4 348.0,207.9 348.5,212.4 349.0,211.3 349.5,212.3 350.0,209.9 350.5,212.6 351.0,211.6 351.5,212.9 352.0,209.7 352.5,214.3 353.0,212.5 353.5,214.9 354.0,210.4 354.5,214.9 355.0,211.3 355.5,214.6 356.0,214.2 356.5,217.5 357.0,215.8 357.5,217.7 358.0,211.6 358.5,219.5 359.0,220.8 359.5,223.6 360.0,225.8 360.5,229.3 361.0,230.4 361.5,233.3 362.0,235.2 362.5,238.7 363.0,239.8 363.5,243.0 364.0,230.8 364.5,246.9 365.0,246.4 365.5,250.1 366.0,247.1 366.5,249.5 367.0,247.4 367.5,250.3 368.0,245.6 368.5,248.7 369.0,243.5 369.5,245.4 370.0,237.0 370.5,242.2 371.0,231.3 371.5,237.9 372.0,225.1 372.5,228.0 373.0,215.5 373.5,221.8 374.0,214.3 374.5,218.6 375.0,209.3 375.5,216.4 376.0,211.0 376.5,214.4 377.0,199.9 377.5,212.4 378.0,208.9 378.5,211.9 379.0,206.2 379.5,209.2 380.0,205.1 380.5,208.0 381.0,200.0 381.5,208.4 382.0,193.4 382.5,196.1 383.0,180.4 383.5,182.0 384.0,165.2 384.5,167.8 385.0,166.4 385.5,168.7 386.0,192.0 386.5,200.1 387.0,202.9 387.5,203.5 388.0,208.0 388.5,211.9 389.0,210.9 389.5,216.9 390.0,201.5 390.5,218.9 391.0,215.8 391.5,224.4 392.0,215.5 392.5,220.8 393.0,216.2 393.5,218.1 394.0,215.5 394.5,218.5 395.0,215.4 395.5,216.4 396.0,214.2 396.5,217.5 397.0,215.8 397.5,217.5 398.0,211.5 398.5,216.5 399.0,212.9 399.5,217.7 400.0,215.0 400.5,216.8 401.0,214.0 401.5,219.7 402.0,206.8 402.5,218.8 403.0,220.4 403.5,221.5 404.0,222.9 404.5,225.7 405.0,230.8 405.5,235.1 406.0,235.5 406.5,246.0 407.0,229.9 407.5,243.8 408.0,243.0 408.5,246.1 409.0,244.9 409.5,247.1 410.0,238.6 410.5,247.2 411.0,244.8 411.5,246.8 412.0,243.9 412.5,249.0 413.0,240.9 413.5,245.2 414.0,242.9 414.5,246.9 415.0,240.0 415.5,244.4 416.0,241.4 416.5,243.7 417.0,239.7 417.5,242.8 418.0,238.6 418.5,243.5 419.0,239.2 419.5,241.5 420.0,233.7 420.5,235.4 421.0,217.2 421.5,228.1 422.0,218.8 422.5,220.5 423.0,216.7 423.5,220.0 424.0,212.7 424.5,223.8 425.0,213.0 425.5,217.6 426.0,215.5 426.5,219.1 427.0,213.7 427.5,215.7 428.0,214.0 428.5,218.2 429.0,211.5 429.5,215.6 430.0,209.9 430.5,212.9 431.0,208.7 431.5,211.4 432.0,196.7 432.5,210.0 433.0,203.5 433.5,211.5 434.0,201.7 434.5,203.7 435.0,198.0 435.5,202.0 436.0,195.8 436.5,197.0 437.0,190.3 437.5,193.9 438.0,176.5 438.5,178.4 439.0,175.4 439.5,184.2 440.0,188.7 440.5,192.5 441.0,193.5 441.5,196.3 442.0,199.1 442.5,210.8 443.0,205.3 443.5,206.7 444.0,208.1 444.5,211.1 445.0,208.3 445.5,213.2 446.0,209.2 446.5,214.0 447.0,210.8 447.5,216.8 448.0,208.9 448.5,211.0 449.0,207.2 449.5,208.5 450.0,204.8 450.5,210.4 451.0,203.9 451.5,209.5 452.0,206.4 452.5,207.5 453.0,206.7 453.5,208.8 454.0,207.1 454.5,211.5 455.0,207.7 455.5,213.6 456.0,208.6 456.5,211.5 457.0,210.3 457.5,212.2 458.0,211.4 458.5,215.8 459.0,200.0 459.5,213.7 460.0,204.6 460.5,211.2 461.0,194.8 461.5,199.3 462.0,193.5 462.5,195.6 463.0,197.3 463.5,198.7 464.0,204.4 464.5,206.3 465.0,209.6 465.5,216.3 466.0,219.0 466.5,224.1 467.0,223.8 467.5,229.3 468.0,207.4 468.5,214.0 469.0,194.9 469.5,197.1 470.0,195.1 470.5,196.8 471.0,195.5 471.5,199.3 472.0,201.7 472.5,204.8 473.0,205.6 473.5,206.7 474.0,209.8 474.5,217.1 475.0,213.2 475.5,225.6 476.0,214.7 476.5,217.5 477.0,201.7 477.5,214.2 478.0,205.9 478.5,214.1 479.0,205.8 479.5,208.4 480.0,204.8 480.5,210.7 481.0,193.7 481.5,207.9 482.0,193.3 482.5,207.1 483.0,202.9 483.5,203.7 484.0,201.6 484.5,204.7 485.0,201.7 485.5,209.2 486.0,203.1 486.5,208.0 487.0,204.9 487.5,208.3 488.0,208.8 488.5,211.4 489.0,210.8 489.5,213.1 490.0,216.0 490.5,217.6 491.0,220.2 491.5,224.6 492.0,224.9 492.5,228.6 493.0,222.1 493.5,233.6 494.0,227.6 494.5,231.5 495.0,230.3 495.5,236.0 496.0,229.5 496.5,236.1 497.0,222.3 497.5,235.2 498.0,223.2 498.5,230.7 499.0,204.1 499.5,206.2 500.0,173.7 500.5,179.3 501.0,192.2 501.5,197.9 502.0,226.8 502.5,230.4 503.0,237.4 503.5,241.7 504.0,239.7 504.5,240.1 505.0,222.4 505.5,237.8 506.0,227.3 506.5,230.6 507.0,219.1 507.5,221.7 508.0,209.0 508.5,215.3 509.0,199.8 509.5,202.9 510.0,192.8 510.5,195.4 511.0,188.9 511.5,197.4 512.0,199.6 512.5,210.4 513.0,202.5 513.5,213.1 514.0,180.0 514.5,184.4 515.0,185.7 515.5,189.2 516.0,199.1 516.5,203.7 517.0,197.6 517.5,212.6 518.0,217.5 518.5,222.3 519.0,218.4 519.5,227.4 520.0,228.2 520.5,229.2 521.0,226.0 521.5,231.4 522.0,226.8 522.5,229.4 523.0,212.5 523.5,226.1 524.0,203.6 524.5,216.3 525.0,196.3 525.5,206.9 526.0,190.6 526.5,206.6 527.0,203.4 527.5,211.9 528.0,215.2 528.5,221.5 529.0,223.9 529.5,225.5 530.0,225.3 530.5,227.4 531.0,222.7 531.5,232.3 532.0,225.0 532.5,227.8 533.0,223.7 533.5,227.7 534.0,213.1 534.5,222.8 535.0,217.6 535.5,220.7 536.0,212.7 536.5,215.7 537.0,203.9 537.5,208.0 538.0,195.7 538.5,197.0 539.0,178.8 539.5,192.0 540.0,184.8 540.5,187.4 541.0,180.8 541.5,181.9 542.0,177.9 542.5,181.2 543.0,173.9 543.5,180.0 544.0,175.2 544.5,176.9 545.0,171.6 545.5,177.5 546.0,174.0 546.5,179.5 547.0,176.6 547.5,177.9 548.0,167.4 548.5,184.1 549.0,180.6 549.5,191.9 550.0,203.9 550.5,205.5 551.0,212.8 551.5,216.1 552.0,220.6 552.5,223.1 553.0,224.8 553.5,227.6 554.0,223.8 554.5,226.0 555.0,216.0 555.5,218.5 556.0,208.7 556.5,211.3 557.0,204.6 557.5,207.0 558.0,210.7 558.5,214.6 559.0,220.1 559.5,226.4 560.0,229.2 560.5,230.9 561.0,230.2 561.5,232.9 562.0,224.3 562.5,231.7 563.0,224.5 563.5,233.9 564.0,208.0 564.5,222.0 565.0,216.6 565.5,217.5 566.0,209.3 566.5,215.0 567.0,199.4 567.5,212.4 568.0,206.7 568.5,210.3 569.0,206.4 569.5,210.7 570.0,206.4 570.5,212.6 571.0,214.2 571.5,214.9 572.0,217.5 572.5,220.3 573.0,211.4 573.5,220.0 574.0,205.5 574.5,223.8 575.0,220.5 575.5,225.5 576.0,213.0 576.5,225.6 577.0,221.4 577.5,224.6 578.0,217.4 578.5,220.0 579.0,213.6 579.5,216.5 580.0,205.6 580.5,217.0 581.0,191.9 581.5,206.7 582.0,203.9 582.5,208.5 583.0,209.4 583.5,211.5 584.0,202.6 584.5,216.3 585.0,217.7 585.5,220.1 586.0,209.5 586.5,220.4 587.0,213.9 587.5,218.5 588.0,201.0 588.5,211.7 589.0,202.9 589.5,206.0 590.0,203.2 590.5,209.3 591.0,201.8 591.5,221.1 592.0,236.7 592.5,240.4" fill="none" stroke="#ffffff" stroke-width="0.9"/><path d="" stroke="#ffffff" stroke-width="0.9"/><polyline points="177.0,359.4 177.5,363.5 178.0,359.0 178.5,361.2 179.0,358.0 179.5,358.8 180.0,356.4 180.5,357.5 181.0,355.6 181.5,356.2 182.0,354.0 182.5,356.0 183.0,354.5 183.5,355.1 184.0,352.9 184.5,355.4 185.0,353.0 185.5,354.4 186.0,352.9 186.5,355.2 187.0,353.6 187.5,354.3 188.0,353.3 188.5,355.3 189.0,353.0 189.5,354.1 190.0,352.3 190.5,355.4 191.0,348.6 191.5,353.6 192.0,351.1 192.5,354.2 193.0,352.4 193.5,353.8 194.0,352.7 194.5,354.5 195.0,351.2 195.5,354.3 196.0,352.4 196.5,353.7 197.0,351.3 197.5,353.6 198.0,351.0 198.5,360.5 199.0,350.3 199.5,352.9 200.0,350.3 200.5,352.8 201.0,348.8 201.5,353.2 202.0,350.3 202.5,355.0 203.0,351.9 203.5,352.5 204.0,351.0 204.5,354.6 205.0,351.6 205.5,352.3 206.0,350.7 206.5,352.8 207.0,351.1 207.5,352.5 208.0,349.7 208.5,351.1 209.0,349.3 209.5,352.8 210.0,348.3 210.5,350.9 211.0,349.0 211.5,350.3 212.0,347.6 212.5,350.5 213.0,347.1 213.5,350.0 214.0,348.6 214.5,350.2 215.0,349.1 215.5,350.4 216.0,348.4 216.5,350.6 217.0,350.0 217.5,351.7 218.0,343.8 218.5,351.0 219.0,350.4 219.5,351.2 220.0,350.1 220.5,352.4 221.0,349.3 221.5,351.0 222.0,349.9 222.5,351.7 223.0,348.4 223.5,350.3 224.0,348.6 224.5,351.9 225.0,347.0 225.5,350.5 226.0,347.7 226.5,349.9 227.0,347.1 227.5,348.4 228.0,345.6 228.5,349.6 229.0,344.9 229.5,346.8 230.0,343.8 230.5,345.5 231.0,344.8 231.5,345.4 232.0,344.3 232.5,346.9 233.0,343.2 233.5,345.1 234.0,342.8 234.5,344.5 235.0,343.6 235.5,346.2 236.0,335.0 236.5,343.7 237.0,342.8 237.5,344.2 238.0,341.9 238.5,342.7 239.0,339.6 239.5,342.2 240.0,337.4 240.5,341.2 241.0,337.3 241.5,341.9 242.0,338.6 242.5,338.9 243.0,337.6 243.5,340.4 244.0,339.0 244.5,341.0 245.0,339.4 245.5,341.6 246.0,340.5 246.5,341.4 247.0,341.1 247.5,342.2 248.0,341.8 248.5,344.0 249.0,342.5 249.5,344.4 250.0,343.0 250.5,345.9 251.0,343.9 251.2,347.3 251.5,372.7 251.8,347.3 252.0,344.4 252.5,345.1 253.0,339.2 253.5,346.6 254.0,342.9 254.5,345.3 255.0,342.8 255.5,348.7 256.0,341.9 256.5,345.0 257.0,344.4 257.5,345.7 258.0,345.7 258.5,347.5 259.0,346.3 259.5,348.5 260.0,345.7 260.5,347.8 261.0,345.4 261.5,349.3 262.0,346.9 262.5,355.6 263.0,346.6 263.5,351.4 264.0,344.9 264.5,349.6 265.0,346.9 265.5,349.1 265.7,346.4 266.0,385.4 266.3,346.4 266.5,354.4 267.0,345.7 267.5,347.4 268.0,346.1 268.5,348.0 269.0,346.9 269.5,348.4 270.0,347.6 270.5,349.3 271.0,346.9 271.5,348.3 272.0,346.1 272.5,347.2 273.0,341.8 273.5,344.5 274.0,339.0 274.5,339.3 275.0,330.3 275.5,333.9 276.0,325.0 276.5,328.9 277.0,319.8 277.5,323.8 278.0,321.0 278.5,327.5 279.0,327.0 279.5,329.5 280.0,333.2 280.5,335.3 281.0,336.9 281.5,342.1 282.0,347.1 282.5,348.3 283.0,354.4 283.5,354.9 284.0,357.0 284.5,364.2 285.0,342.4 285.5,353.9 286.0,345.0 286.5,346.7 286.8,346.9 287.1,385.4 287.4,346.9 287.5,349.1 288.0,351.4 288.5,352.9 289.0,352.4 289.5,355.3 290.0,355.3 290.5,356.0 291.0,353.0 291.5,355.4 292.0,351.4 292.5,354.2 293.0,351.2 293.5,352.1 294.0,350.5 294.5,352.4 295.0,350.9 295.5,353.3 296.0,352.8 296.5,354.8 297.0,354.9 297.5,357.8 298.0,354.9 298.5,358.1 299.0,355.4 299.5,358.9 300.0,358.3 300.5,359.5 301.0,357.5 301.5,361.1 302.0,362.5 302.5,363.8 303.0,363.9 303.5,365.9 304.0,358.5 304.5,365.3 305.0,361.2 305.5,363.5 306.0,359.2 306.5,361.4 307.0,356.0 307.5,364.8 308.0,351.0 308.5,353.2 309.0,345.1 309.5,346.4 310.0,338.1 310.5,340.0 311.0,332.5 311.5,335.1 312.0,329.8 312.5,330.7 313.0,327.6 313.5,327.9 314.0,327.6 314.5,329.8 315.0,329.3 315.5,331.6 316.0,329.2 316.5,332.8 317.0,334.7 317.5,335.7 318.0,337.2 318.5,339.0 319.0,343.1 319.5,345.5 320.0,349.5 320.5,351.1 321.0,352.3 321.5,354.1 322.0,354.8 322.5,355.1 323.0,356.0 323.5,356.6 324.0,355.5 324.5,359.4 325.0,356.9 325.5,360.2 326.0,357.9 326.5,360.3 327.0,358.7 327.5,360.2 328.0,360.4 328.5,361.0 329.0,359.7 329.5,361.0 330.0,356.8 330.5,359.0 331.0,355.7 331.5,356.5 332.0,353.7 332.5,355.7 333.0,349.3 333.5,351.3 334.0,347.4 334.5,348.9 335.0,346.8 335.5,351.0 336.0,344.0 336.5,345.9 337.0,339.5 337.5,340.3 338.0,327.5 338.5,329.7 339.0,309.0 339.5,311.5 340.0,281.0 340.5,283.9 341.0,293.4 341.5,294.4 342.0,306.7 342.5,309.2 343.0,309.8 343.5,313.1 344.0,314.2 344.5,314.7 345.0,316.2 345.5,319.3 346.0,320.4 346.5,321.6 347.0,323.7 347.5,331.9 348.0,338.2 348.5,339.0 348.8,338.8 349.1,370.6 349.4,338.8 349.5,341.7 350.0,340.5 350.5,342.1 351.0,339.6 351.5,341.5 352.0,340.6 352.5,341.8 353.0,340.5 353.5,341.8 354.0,341.8 354.5,342.9 355.0,342.9 355.5,343.9 356.0,343.7 356.5,344.7 357.0,344.9 357.5,346.0 358.0,346.0 358.5,347.9 359.0,350.7 359.5,350.8 360.0,354.5 360.5,354.8 361.0,358.1 361.5,360.0 362.0,361.5 362.5,364.9 363.0,368.3 363.5,369.1 364.0,371.6 364.5,372.3 365.0,373.9 365.5,374.7 366.0,374.3 366.5,376.0 367.0,369.6 367.5,376.1 368.0,372.7 368.5,374.2 369.0,371.3 369.5,371.3 370.0,360.4 370.5,369.1 371.0,361.1 371.5,363.0 372.0,354.7 372.5,358.0 373.0,349.3 373.5,349.9 374.0,344.9 374.5,347.6 375.0,342.0 375.5,343.9 376.0,341.8 376.5,342.9 377.0,340.2 377.5,340.7 378.0,337.4 378.5,339.7 379.0,336.5 379.5,337.7 380.0,335.0 380.5,335.9 381.0,332.1 381.5,332.8 382.0,323.6 382.5,324.9 383.0,309.6 383.5,312.7 384.0,295.9 384.5,298.5 385.0,298.1 385.5,298.6 386.0,322.9 386.5,324.2 387.0,331.1 387.5,334.5 388.0,337.0 388.5,340.7 389.0,339.1 389.5,343.2 390.0,344.4 390.5,344.8 391.0,344.4 391.5,345.5 392.0,344.5 392.5,346.5 393.0,343.9 393.5,346.0 394.0,344.2 394.5,347.2 395.0,344.6 395.5,346.4 396.0,343.9 396.5,345.7 397.0,342.5 397.5,345.8 398.0,344.7 398.5,347.2 399.0,344.2 399.5,345.7 400.0,343.3 400.5,345.1 401.0,344.4 401.5,346.9 402.0,347.0 402.5,347.4 403.0,349.2 403.5,350.7 404.0,352.9 404.5,353.9 405.0,360.2 405.5,361.8 406.0,366.7 406.5,367.8 407.0,369.2 407.5,370.1 408.0,371.6 408.5,372.8 409.0,372.2 409.5,373.3 410.0,371.4 410.5,373.5 411.0,372.2 411.5,373.2 412.0,370.7 412.5,373.8 413.0,369.1 413.5,374.1 414.0,371.0 414.5,371.7 415.0,369.4 415.5,372.2 416.0,365.1 416.5,372.2 417.0,368.0 417.5,370.0 418.0,367.9 418.5,370.1 419.0,366.3 419.5,367.9 420.0,361.6 420.5,363.6 421.0,353.1 421.5,354.6 422.0,347.3 422.5,350.3 423.0,346.2 423.5,346.5 424.0,344.9 424.5,345.6 425.0,342.7 425.5,344.8 426.0,344.5 426.5,344.8 427.0,344.3 427.5,344.6 428.0,343.0 428.5,344.6 429.0,343.1 429.5,344.2 430.0,341.5 430.5,344.2 431.0,339.5 431.5,342.2 432.0,335.1 432.5,339.7 433.0,332.2 433.5,335.7 434.0,330.2 434.5,333.5 435.0,328.8 435.5,329.9 436.0,324.6 436.5,327.9 437.0,319.9 437.5,322.6 437.8,307.4 438.1,366.3 438.4,307.4 438.5,308.5 439.0,310.3 439.5,316.2 440.0,319.2 440.5,322.1 441.0,324.6 441.5,325.8 442.0,328.6 442.5,331.2 443.0,334.1 443.5,336.6 444.0,337.5 444.5,339.0 445.0,340.0 445.5,342.5 446.0,340.1 446.5,342.0 447.0,339.5 447.5,340.1 448.0,337.7 448.5,338.2 449.0,335.8 449.5,337.7 450.0,336.2 450.5,337.7 451.0,336.0 451.5,337.6 452.0,335.9 452.5,336.2 453.0,335.0 453.5,337.4 454.0,335.0 454.5,337.1 455.0,337.7 455.5,338.1 456.0,338.9 456.5,340.4 457.0,337.8 457.5,341.7 458.0,339.2 458.5,342.5 459.0,340.1 459.5,341.0 460.0,335.7 460.5,337.1 461.0,322.1 461.5,328.3 462.0,323.9 462.5,324.2 463.0,327.0 463.5,328.1 464.0,334.8 464.5,335.4 465.0,343.2 465.5,344.2 466.0,351.4 466.5,352.7 467.0,354.5 467.5,355.6 468.0,341.0 468.5,342.1 469.0,325.9 469.5,327.1 470.0,324.1 470.5,327.4 471.0,326.9 471.5,328.8 472.0,330.6 472.5,332.4 473.0,334.5 473.5,337.5 474.0,339.1 474.5,343.6 475.0,342.7 475.5,344.2 476.0,343.5 476.5,346.0 477.0,342.2 477.5,343.6 478.0,339.0 478.5,339.3 479.0,336.3 479.5,336.8 480.0,329.8 480.5,337.4 481.0,333.9 481.5,335.5 482.0,333.0 482.5,333.4 483.0,331.5 483.5,334.9 484.0,331.1 484.5,333.6 485.0,331.6 485.5,333.3 486.0,333.2 486.5,338.4 487.0,334.7 487.5,336.3 488.0,336.0 488.5,338.1 489.0,339.4 489.5,341.2 490.0,345.0 490.5,346.1 491.0,349.4 491.5,351.5 492.0,354.6 492.5,355.4 493.0,356.2 493.5,357.0 494.0,356.5 494.5,359.0 495.0,357.5 495.5,359.2 496.0,359.1 496.5,360.8 497.0,351.0 497.5,359.4 498.0,355.4 498.5,356.8 499.0,334.2 499.5,335.9 500.0,304.3 500.5,306.4 501.0,325.3 501.5,326.5 502.0,357.4 502.5,359.3 503.0,365.5 503.5,367.9 504.0,367.5 504.5,370.0 505.0,363.6 505.5,364.1 506.0,356.3 506.5,358.8 507.0,349.7 507.5,350.3 508.0,340.2 508.5,341.4 509.0,330.1 509.5,331.8 510.0,324.0 510.5,325.4 511.0,325.9 511.5,327.3 512.0,338.8 512.5,339.1 513.0,331.4 513.5,334.5 514.0,313.2 514.5,315.7 515.0,315.4 515.5,318.3 516.0,329.5 516.5,330.8 517.0,338.7 517.5,340.4 518.0,347.3 518.5,347.7 519.0,352.6 519.5,355.0 520.0,355.5 520.5,357.7 521.0,356.0 521.5,358.8 522.0,355.0 522.5,356.5 523.0,351.5 523.5,352.4 524.0,343.9 524.5,346.1 525.0,332.5 525.5,334.2 526.0,331.0 526.5,332.0 527.0,338.1 527.5,340.1 528.0,346.3 528.5,348.6 529.0,350.6 529.5,354.2 530.0,353.9 530.5,355.6 531.0,353.6 531.5,356.4 532.0,353.3 532.5,354.6 533.0,352.7 533.5,353.7 534.0,347.8 534.5,351.6 535.0,347.6 535.5,348.8 536.0,341.8 536.5,342.8 537.0,333.9 537.5,334.4 538.0,325.8 538.5,327.3 539.0,318.1 539.5,320.7 540.0,315.3 540.5,316.3 541.0,311.4 541.5,314.1 542.0,308.6 542.5,309.5 543.0,298.1 543.2,308.1 543.5,381.2 543.8,308.1 544.0,306.1 544.5,307.7 545.0,305.3 545.5,308.2 546.0,305.4 546.5,308.5 547.0,303.8 547.5,308.9 548.0,311.1 548.5,312.6 549.0,320.2 549.5,320.6 550.0,332.9 550.5,335.1 551.0,342.1 551.5,344.1 552.0,350.2 552.5,351.1 553.0,354.2 553.5,355.8 554.0,346.3 554.5,354.3 555.0,346.5 555.5,349.2 556.0,335.8 556.5,339.6 557.0,334.8 557.5,336.3 558.0,340.4 558.5,341.0 559.0,349.2 559.5,351.4 560.0,356.6 560.5,359.6 561.0,358.4 561.5,360.8 562.0,353.6 562.5,357.8 563.0,352.8 563.5,358.1 564.0,349.5 564.5,353.0 565.0,345.4 565.5,347.0 566.0,340.5 566.5,341.7 567.0,337.5 567.5,345.1 568.0,336.3 568.5,336.8 569.0,336.7 569.5,337.5 570.0,339.2 570.5,340.9 571.0,340.8 571.5,343.8 572.0,344.6 572.5,346.6 573.0,347.4 573.5,348.7 574.0,347.8 574.5,350.2 575.0,351.5 575.5,351.6 576.0,351.5 576.5,352.4 577.0,351.1 577.5,351.9 578.0,346.1 578.5,348.1 579.0,341.1 579.5,343.4 580.0,336.0 580.5,338.2 581.0,333.9 581.5,335.3 582.0,333.5 582.5,335.9 583.0,338.2 583.5,340.0 584.0,342.5 584.5,343.8 585.0,345.5 585.5,349.2 586.0,348.8 586.5,350.6 587.0,345.6 587.5,346.8 588.0,337.8 588.5,340.5 589.0,333.8 589.5,335.9 590.0,336.2 590.5,340.9 591.0,345.1 591.5,345.9 592.0,366.1 592.5,367.6" fill="none" stroke="#20e020" stroke-width="1.3"/><path d="M177.0 360.5V353.3M183.0 354.5V358.2M184.0 352.6V355.8M186.5 357.2V348.1M188.5 353.8V343.3M189.0 353.1V348.7M197.5 361.2V359.3M199.5 356.5V346.3M200.5 353.5V348.1M202.0 350.9V339.6M212.5 349.9V339.0M217.0 349.7V344.6M218.5 353.6V356.4M223.0 348.8V356.7M224.0 348.5V354.8M230.5 349.5V354.7M232.5 346.1V352.4M235.0 340.2V340.6M236.5 344.9V337.2M241.5 325.0V323.7M242.5 341.9V345.0M247.5 344.1V340.5M256.9 346.4V343.9M258.5 356.2V363.8M260.5 347.9V356.1M263.0 343.8V350.3M271.5 351.2V350.7M272.5 346.5V347.3M276.5 328.0V328.9M280.0 328.2V333.8M282.0 346.4V338.2M300.0 355.0V353.9M302.0 361.0V355.1M304.5 366.7V368.6M313.0 325.6V314.9M314.5 331.9V323.4M316.5 345.5V335.0M317.5 335.9V337.9M318.0 337.9V330.3M318.5 339.6V333.6M319.0 343.9V335.7M321.0 353.0V358.9M328.5 362.0V353.5M332.5 356.5V363.3M333.0 348.8V349.4M334.0 347.6V338.2M335.5 348.1V346.0M337.5 341.3V342.2M342.5 307.1V311.4M348.5 341.3V341.1M364.5 374.3V380.7M371.0 359.5V366.1M374.5 347.3V342.5M375.0 338.4V332.0M388.5 340.9V336.6M395.5 345.2V342.3M411.5 374.3V371.0M412.0 371.5V372.0M412.5 376.4V369.6M414.5 374.3V382.1M415.5 371.9V371.0M425.0 342.0V337.3M429.0 340.5V344.6M441.0 323.3V315.5M445.5 342.2V340.6M447.0 339.9V329.4M452.0 335.7V336.5M455.5 342.5V343.3M458.0 340.4V335.6M463.5 328.3V329.5M467.5 357.6V354.2M472.5 334.1V334.6M489.0 339.9V328.6M490.5 346.3V344.0M497.5 363.1V367.6M498.5 358.8V351.5M500.5 309.8V306.3M519.0 347.1V345.8M521.0 354.3V350.2M522.0 355.2V362.1M534.5 351.3V347.5M539.5 321.9V329.6M541.0 311.2V316.6M554.0 352.3V354.1M558.0 339.8V330.0M563.0 352.9V356.4M569.0 335.7V326.9M570.5 341.6V348.6M578.0 346.2V354.4M587.5 347.2V336.2M592.0 364.6V372.0" stroke="#22e022" stroke-width="1.3"/><polyline points="183.5,377.8 184.3,338.0 185.1,383.9 185.9,317.2 186.7,385.3 187.5,331.7 188.3,380.4 189.1,326.0 189.9,385.0 190.7,325.2 191.5,381.1 192.3,316.0 193.1,386.3 193.9,311.6 194.7,384.7 195.5,317.6 196.3,381.0 197.1,316.6 197.9,384.6 198.7,338.2 199.5,385.6 200.3,319.0 201.1,380.7 201.9,343.0 202.7,384.5 203.5,348.2" fill="none" stroke="#22e822" stroke-width="1.0"/><polyline points="177.0,360.5 177.5,364.9 178.0,358.9 178.5,360.6 179.0,357.8 179.5,361.0 180.0,357.2 180.5,357.4 181.0,355.4 181.5,356.5 182.0,342.7 182.5,356.8 183.0,354.5 183.5,359.1 184.0,352.6 184.5,354.8 185.0,350.3 185.5,357.6 186.0,340.0 186.5,357.2 187.0,351.3 187.5,354.6 188.0,341.0 188.5,353.8 189.0,353.1 189.5,366.5 190.0,350.6 190.5,355.5 191.0,342.4 191.5,354.9 192.0,352.5 192.5,354.4 193.0,351.4 193.5,354.5 194.0,351.0 194.5,353.6 195.0,342.6 195.5,353.2 196.0,350.4 196.5,353.0 197.0,349.5 197.5,361.2 198.0,349.9 198.5,358.5 199.0,349.8 199.5,356.5 200.0,346.6 200.5,353.5 201.0,350.9 201.5,355.7 202.0,350.9 202.5,355.1 203.0,350.0 203.5,352.6 204.0,349.2 204.5,352.6 205.0,349.7 205.5,360.7 206.0,351.1 206.5,352.2 207.0,350.8 207.5,353.6 208.0,349.2 208.5,351.3 209.0,342.5 209.5,350.9 210.0,345.1 210.5,353.5 211.0,348.0 211.5,349.8 212.0,340.4 212.5,349.9 213.0,347.3 213.5,352.5 214.0,347.6 214.5,350.7 215.0,348.5 215.5,351.1 216.0,339.6 216.5,353.4 217.0,349.7 217.5,350.2 218.0,347.8 218.5,353.6 219.0,350.4 219.5,352.7 220.0,345.0 220.5,351.2 221.0,337.0 221.5,350.9 222.0,349.7 222.5,351.2 223.0,348.8 223.5,356.9 224.0,348.5 224.5,351.2 225.0,348.1 225.5,348.9 226.0,345.5 226.5,350.6 227.0,334.6 227.5,347.4 228.0,345.1 228.5,357.4 229.0,345.7 229.5,346.5 230.0,343.7 230.5,349.5 231.0,342.2 231.5,344.9 232.0,342.2 232.5,346.1 233.0,343.7 233.5,349.7 234.0,343.2 234.5,346.4 235.0,340.2 235.5,345.3 236.0,342.3 236.5,344.9 237.0,331.5 237.5,343.5 238.0,342.1 238.5,344.5 239.0,338.1 239.5,341.5 240.0,337.8 240.5,340.1 241.0,338.8 241.2,339.6 241.5,325.0 241.8,339.6 242.0,338.6 242.5,341.9 243.0,338.5 243.5,347.2 244.0,336.5 244.5,339.7 245.0,338.1 245.5,341.4 246.0,339.9 246.5,345.1 247.0,339.1 247.5,344.1 248.0,340.4 248.5,345.0 249.0,343.2 249.5,348.1 250.0,341.3 250.5,346.8 251.0,344.7 251.5,344.9 252.0,335.7 252.5,347.0 253.0,342.8 253.5,345.2 254.0,331.1 254.5,345.6 255.0,342.7 255.5,344.5 256.0,342.0 256.3,346.4 256.6,309.0 256.9,346.4 257.0,343.4 257.5,354.4 258.0,344.5 258.5,356.2 259.0,346.7 259.5,349.1 260.0,345.2 260.5,347.9 261.0,347.3 261.5,348.8 262.0,347.4 262.5,349.0 263.0,343.8 263.5,348.4 264.0,347.4 264.5,347.9 265.0,344.6 265.5,348.1 266.0,347.2 266.5,347.5 267.0,345.7 267.5,348.2 268.0,335.2 268.5,348.6 269.0,341.0 269.5,349.9 270.0,345.4 270.5,357.5 271.0,344.6 271.5,351.2 272.0,331.9 272.5,346.5 273.0,343.8 273.5,351.6 274.0,338.1 274.5,341.9 275.0,329.0 275.5,333.4 276.0,325.8 276.5,328.0 277.0,314.5 277.5,325.1 278.0,319.6 278.5,328.4 279.0,327.0 279.5,327.8 280.0,328.2 280.5,337.0 281.0,338.0 281.5,341.5 282.0,346.4 282.5,350.8 283.0,351.0 283.5,360.4 284.0,355.8 284.5,359.4 285.0,349.7 285.5,354.2 286.0,343.0 286.5,348.6 287.0,344.8 287.5,357.4 288.0,349.6 288.5,353.2 289.0,353.0 289.5,355.5 290.0,345.3 290.5,357.0 291.0,351.7 291.5,355.7 292.0,351.3 292.5,353.0 293.0,347.4 293.5,362.1 294.0,348.8 294.5,353.4 295.0,344.4 295.5,354.5 296.0,353.2 296.5,356.7 297.0,347.4 297.5,356.4 297.9,356.3 298.2,336.6 298.5,356.3 298.5,357.0 299.0,357.8 299.5,359.0 300.0,355.0 300.5,360.1 301.0,360.0 301.5,362.2 302.0,361.0 302.5,366.1 303.0,364.0 303.5,366.3 304.0,363.3 304.5,366.7 305.0,350.2 305.5,363.9 306.0,356.9 306.5,362.1 307.0,355.3 307.5,362.7 308.0,351.0 308.5,351.3 309.0,342.9 309.5,346.6 310.0,338.9 310.5,340.8 311.0,326.1 311.5,336.3 312.0,328.8 312.5,332.1 313.0,325.6 313.5,329.7 314.0,326.5 314.5,331.9 315.0,328.4 315.5,330.7 316.0,330.9 316.5,345.5 317.0,334.7 317.5,335.9 318.0,337.9 318.5,339.6 319.0,343.9 319.5,347.4 319.9,350.4 320.2,327.1 320.5,350.4 320.5,352.0 321.0,353.0 321.5,354.8 322.0,353.4 322.5,357.5 323.0,345.9 323.5,357.2 324.0,356.2 324.5,357.7 325.0,357.9 325.5,358.5 326.0,357.3 326.5,360.4 327.0,358.1 327.5,360.5 328.0,359.1 328.5,362.0 329.0,360.0 329.5,363.1 330.0,357.2 330.5,358.8 331.0,353.4 331.5,356.8 332.0,353.2 332.5,356.5 333.0,348.8 333.5,360.6 334.0,347.6 334.5,354.3 335.0,346.5 335.5,348.1 336.0,335.8 336.5,346.3 337.0,338.3 337.5,341.3 338.0,327.4 338.5,331.4 339.0,309.6 339.5,311.7 340.0,281.0 340.5,283.0 341.0,292.4 341.5,295.7 342.0,305.2 342.5,307.1 343.0,309.4 343.5,312.2 344.0,312.0 344.5,314.9 345.0,316.3 345.5,328.5 346.0,316.5 346.5,323.9 347.0,330.7 347.5,339.5 348.0,337.1 348.5,341.3 349.0,340.4 349.5,341.3 350.0,339.0 350.5,341.6 351.0,340.6 351.5,341.9 352.0,338.8 352.5,343.2 353.0,341.5 353.5,343.8 354.0,339.5 354.5,343.8 355.0,340.4 355.5,343.5 356.0,343.1 356.5,346.2 357.0,344.7 357.5,346.5 358.0,340.6 358.5,348.2 359.0,349.4 359.5,352.1 360.0,354.2 360.5,357.6 361.0,358.5 361.5,361.3 362.0,363.2 362.5,366.5 363.0,367.5 363.5,370.6 364.0,359.0 364.5,374.3 365.0,373.8 365.5,377.4 366.0,374.6 366.5,376.8 367.0,374.8 367.5,377.6 368.0,373.1 368.5,376.0 369.0,371.1 369.5,372.9 370.0,364.9 370.5,369.8 371.0,359.5 371.5,365.8 372.0,353.5 372.5,356.3 373.0,344.3 373.5,350.3 374.0,343.2 374.5,347.3 375.0,338.4 375.5,345.2 376.0,340.1 376.5,343.3 377.0,329.4 377.5,341.4 378.0,338.1 378.5,340.9 379.0,335.4 379.5,338.3 380.0,334.4 380.5,337.2 381.0,329.5 381.5,337.5 382.0,323.3 382.5,325.8 383.0,310.8 383.5,312.4 384.0,296.3 384.5,298.9 385.0,297.5 385.5,299.7 386.0,321.9 386.5,329.6 387.0,332.3 387.5,332.9 388.0,337.2 388.5,340.9 389.0,340.0 389.5,345.7 390.0,331.0 390.5,347.6 391.0,344.7 391.5,352.8 392.0,344.3 392.5,349.4 393.0,345.0 393.5,346.8 394.0,344.3 394.5,347.2 395.0,344.3 395.5,345.2 396.0,343.1 396.5,346.3 397.0,344.7 397.5,346.3 398.0,340.5 398.5,345.3 399.0,341.8 399.5,346.4 400.0,343.9 400.5,345.6 401.0,343.0 401.5,348.3 402.0,336.1 402.5,347.5 403.0,349.0 403.5,350.0 404.0,351.4 404.5,354.1 405.0,359.0 405.5,363.0 406.0,363.4 406.5,373.5 407.0,358.1 407.5,371.4 408.0,370.6 408.5,373.5 409.0,372.4 409.5,374.5 410.0,366.4 410.5,374.6 411.0,372.3 411.5,374.3 412.0,371.5 412.5,376.4 413.0,368.6 413.5,372.7 414.0,370.5 414.5,374.3 415.0,367.7 415.5,371.9 416.0,369.1 416.5,371.3 417.0,367.5 417.5,370.4 418.0,366.4 418.5,371.1 419.0,366.9 419.5,369.1 420.0,361.7 420.5,363.4 421.0,345.9 421.5,356.4 422.0,347.5 422.5,349.2 423.0,345.5 423.5,348.7 424.0,341.7 424.5,352.2 425.0,342.0 425.5,346.3 426.0,344.3 426.5,347.8 427.0,342.6 427.5,344.5 428.0,343.0 428.5,346.9 429.0,340.5 429.5,344.5 430.0,339.0 430.5,341.9 431.0,337.9 431.5,340.5 432.0,326.4 432.5,339.1 433.0,332.9 433.5,340.5 434.0,331.2 434.5,333.1 435.0,327.6 435.5,331.4 436.0,325.5 436.5,326.7 437.0,320.3 437.5,323.7 438.0,307.1 438.5,308.9 439.0,306.1 439.5,314.4 440.0,318.7 440.5,322.4 441.0,323.3 441.5,326.0 442.0,328.7 442.5,339.8 443.0,334.6 443.5,336.0 444.0,337.2 444.5,340.2 445.0,337.5 445.5,342.2 446.0,338.3 446.5,342.9 447.0,339.9 447.5,345.6 448.0,338.1 448.5,340.1 449.0,336.4 449.5,337.7 450.0,334.2 450.5,339.5 451.0,333.3 451.5,338.6 452.0,335.7 452.5,336.7 453.0,335.9 453.5,338.0 454.0,336.3 454.5,340.5 455.0,336.9 455.5,342.5 456.0,337.8 456.5,340.5 457.0,339.3 457.5,341.2 458.0,340.4 458.5,344.7 459.0,329.6 459.5,342.6 460.0,334.0 460.5,340.2 461.0,324.6 461.5,328.9 462.0,323.3 462.5,325.4 463.0,327.0 463.5,328.3 464.0,333.7 464.5,335.6 465.0,338.7 465.5,345.1 466.0,347.7 466.5,352.5 467.0,352.2 467.5,357.6 468.0,336.6 468.5,342.9 469.0,324.7 469.5,326.8 470.0,324.9 470.5,326.5 471.0,325.3 471.5,328.9 472.0,331.2 472.5,334.1 473.0,334.9 473.5,335.9 474.0,338.9 474.5,345.9 475.0,342.2 475.5,354.0 476.0,343.5 476.5,346.3 477.0,331.2 477.5,343.1 478.0,335.2 478.5,343.0 479.0,335.1 479.5,337.6 480.0,334.1 480.5,339.8 481.0,323.6 481.5,337.1 482.0,323.1 482.5,336.4 483.0,332.3 483.5,333.1 484.0,331.1 484.5,334.0 485.0,331.2 485.5,338.3 486.0,332.5 486.5,337.2 487.0,334.2 487.5,337.5 488.0,338.0 488.5,340.4 489.0,339.9 489.5,342.1 490.0,344.9 490.5,346.3 491.0,348.9 491.5,353.1 492.0,353.3 492.5,356.9 493.0,350.6 493.5,361.6 494.0,355.9 494.5,359.6 495.0,358.5 495.5,363.9 496.0,357.7 496.5,364.0 497.0,350.8 497.5,363.1 498.0,351.7 498.5,358.8 499.0,333.5 499.5,335.5 500.0,304.4 500.5,309.8 501.0,322.1 501.5,327.5 502.0,355.1 502.5,358.6 503.0,365.2 503.5,369.4 504.0,367.4 504.5,367.8 505.0,351.0 505.5,365.6 506.0,355.6 506.5,358.8 507.0,347.7 507.5,350.2 508.0,338.1 508.5,344.1 509.0,329.4 509.5,332.3 510.0,322.6 510.5,325.1 511.0,318.9 511.5,327.1 512.0,329.2 512.5,339.5 513.0,332.0 513.5,342.1 514.0,310.4 514.5,314.7 515.0,315.9 515.5,319.2 516.0,328.7 516.5,333.1 517.0,327.3 517.5,341.5 518.0,346.3 518.5,350.9 519.0,347.1 519.5,355.7 520.0,356.4 520.5,357.4 521.0,354.3 521.5,359.5 522.0,355.2 522.5,357.6 523.0,341.4 523.5,354.4 524.0,333.0 524.5,345.1 525.0,326.0 525.5,336.2 526.0,320.6 526.5,335.8 527.0,332.8 527.5,340.9 528.0,344.1 528.5,350.1 529.0,352.4 529.5,353.9 530.0,353.7 530.5,355.7 531.0,351.2 531.5,360.4 532.0,353.4 532.5,356.1 533.0,352.2 533.5,356.0 534.0,342.1 534.5,351.3 535.0,346.3 535.5,349.3 536.0,341.7 536.5,344.5 537.0,333.3 537.5,337.2 538.0,325.4 538.5,326.7 539.0,309.3 539.5,321.9 540.0,315.1 540.5,317.5 541.0,311.2 541.5,312.3 542.0,308.5 542.5,311.6 543.0,304.6 543.5,310.4 544.0,305.8 544.5,307.5 545.0,302.5 545.5,308.0 546.0,304.7 546.5,310.0 547.0,307.2 547.5,308.5 548.0,298.4 548.5,314.4 549.0,311.0 549.5,321.9 550.0,333.3 550.5,334.8 551.0,341.8 551.5,344.9 552.0,349.3 552.5,351.6 553.0,353.2 553.5,355.9 554.0,352.3 554.5,354.4 555.0,344.9 555.5,347.2 556.0,337.8 556.5,340.3 557.0,333.9 557.5,336.3 558.0,339.8 558.5,343.5 559.0,348.8 559.5,354.7 560.0,357.5 560.5,359.1 561.0,358.4 561.5,361.0 562.0,352.8 562.5,359.8 563.0,352.9 563.5,361.9 564.0,337.2 564.5,350.5 565.0,345.4 565.5,346.2 566.0,338.5 566.5,343.8 567.0,329.0 567.5,341.4 568.0,336.0 568.5,339.4 569.0,335.7 569.5,339.8 570.0,335.6 570.5,341.6 571.0,343.1 571.5,343.8 572.0,346.3 572.5,348.9 573.0,340.5 573.5,348.6 574.0,334.8 574.5,352.3 575.0,349.2 575.5,353.9 576.0,341.9 576.5,354.0 577.0,350.0 577.5,353.0 578.0,346.2 578.5,348.7 579.0,342.6 579.5,345.3 580.0,334.9 580.5,345.8 581.0,321.8 581.5,335.9 582.0,333.3 582.5,337.7 583.0,338.5 583.5,340.5 584.0,332.0 584.5,345.1 585.0,346.4 585.5,348.8 586.0,338.6 586.5,349.0 587.0,342.8 587.5,347.2 588.0,330.5 588.5,340.7 589.0,332.3 589.5,335.3 590.0,332.6 590.5,338.4 591.0,331.3 591.5,349.7 592.0,364.6 592.5,368.1" fill="none" stroke="#ffffff" stroke-width="0.9"/><path d="" stroke="#ffffff" stroke-width="0.9"/><rect x="604" y="128.6" width="10.5" height="262" fill="url(#vsg)"/><defs><linearGradient id="vsg" x1="0" x2="1"><stop offset="0" stop-color="#c8c8c8"/><stop offset="0.5" stop-color="#b4b4b4"/><stop offset="1" stop-color="#a8a8a8"/></linearGradient></defs><rect x="604" y="128.6" width="10.5" height="11.8" fill="#d2d2d2" stroke="#aaa" stroke-width="0.5"/><path d="M606.5 137.5 L609.3 132 L612 137.5 Z" fill="#222"/><rect x="604" y="380.4" width="10.5" height="10.4" fill="#d2d2d2" stroke="#aaa" stroke-width="0.5"/><path d="M606.5 383 L609.3 388.5 L612 383 Z" fill="#222"/><rect x="149.3" y="391.7" width="465" height="11.3" fill="#b4b4b4"/><rect x="149.3" y="391.7" width="11" height="11.3" fill="#cdcdcd" stroke="#aaa" stroke-width="0.5"/><path d="M157.5 394.5 L152.5 397.3 L157.5 400 Z" fill="#777"/><rect x="592.8" y="391.7" width="11" height="11" fill="#cdcdcd" stroke="#aaa" stroke-width="0.5"/><path d="M595.5 394.5 L600.5 397.3 L595.5 400 Z" fill="#777"/><line x1="177.6" y1="405.5" x2="177.6" y2="408.5" stroke="#333"/><line x1="201.0" y1="405.5" x2="201.0" y2="408.5" stroke="#333"/><line x1="224.3" y1="405.5" x2="224.3" y2="408.5" stroke="#333"/><line x1="247.7" y1="405.5" x2="247.7" y2="408.5" stroke="#333"/><line x1="271.0" y1="405.5" x2="271.0" y2="408.5" stroke="#333"/><line x1="294.4" y1="405.5" x2="294.4" y2="408.5" stroke="#333"/><line x1="317.8" y1="405.5" x2="317.8" y2="408.5" stroke="#333"/><line x1="341.1" y1="405.5" x2="341.1" y2="408.5" stroke="#333"/><line x1="364.5" y1="405.5" x2="364.5" y2="408.5" stroke="#333"/><line x1="387.8" y1="405.5" x2="387.8" y2="408.5" stroke="#333"/><line x1="411.2" y1="405.5" x2="411.2" y2="408.5" stroke="#333"/><line x1="434.6" y1="405.5" x2="434.6" y2="408.5" stroke="#333"/><line x1="457.9" y1="405.5" x2="457.9" y2="408.5" stroke="#333"/><line x1="481.3" y1="405.5" x2="481.3" y2="408.5" stroke="#333"/><line x1="504.6" y1="405.5" x2="504.6" y2="408.5" stroke="#333"/><line x1="528.0" y1="405.5" x2="528.0" y2="408.5" stroke="#333"/><line x1="551.4" y1="405.5" x2="551.4" y2="408.5" stroke="#333"/><line x1="574.7" y1="405.5" x2="574.7" y2="408.5" stroke="#333"/><line x1="598.1" y1="405.5" x2="598.1" y2="408.5" stroke="#333"/></svg>
<div class="t" style="left:177.6px;transform:translateX(-50%);top:408.75px;font-size:7.14px;color:#222;">00:00</div>
<div class="t" style="left:200.95999999999998px;transform:translateX(-50%);top:408.75px;font-size:7.14px;color:#222;">00:10</div>
<div class="t" style="left:224.32px;transform:translateX(-50%);top:408.75px;font-size:7.14px;color:#222;">00:20</div>
<div class="t" style="left:247.68px;transform:translateX(-50%);top:408.75px;font-size:7.14px;color:#222;">00:30</div>
<div class="t" style="left:271.03999999999996px;transform:translateX(-50%);top:408.75px;font-size:7.14px;color:#222;">00:40</div>
<div class="t" style="left:294.4px;transform:translateX(-50%);top:408.75px;font-size:7.14px;color:#222;">00:50</div>
<div class="t" style="left:317.76px;transform:translateX(-50%);top:408.75px;font-size:7.14px;color:#222;">01:00</div>
<div class="t" style="left:341.12px;transform:translateX(-50%);top:408.75px;font-size:7.14px;color:#222;">01:10</div>
<div class="t" style="left:364.48px;transform:translateX(-50%);top:408.75px;font-size:7.14px;color:#222;">01:20</div>
<div class="t" style="left:387.84000000000003px;transform:translateX(-50%);top:408.75px;font-size:7.14px;color:#222;">01:30</div>
<div class="t" style="left:411.2px;transform:translateX(-50%);top:408.75px;font-size:7.14px;color:#222;">01:40</div>
<div class="t" style="left:434.55999999999995px;transform:translateX(-50%);top:408.75px;font-size:7.14px;color:#222;">01:50</div>
<div class="t" style="left:457.91999999999996px;transform:translateX(-50%);top:408.75px;font-size:7.14px;color:#222;">02:00</div>
<div class="t" style="left:481.28px;transform:translateX(-50%);top:408.75px;font-size:7.14px;color:#222;">02:10</div>
<div class="t" style="left:504.64px;transform:translateX(-50%);top:408.75px;font-size:7.14px;color:#222;">02:20</div>
<div class="t" style="left:528.0px;transform:translateX(-50%);top:408.75px;font-size:7.14px;color:#222;">02:30</div>
<div class="t" style="left:551.36px;transform:translateX(-50%);top:408.75px;font-size:7.14px;color:#222;">02:40</div>
<div class="t" style="left:574.72px;transform:translateX(-50%);top:408.75px;font-size:7.14px;color:#222;">02:50</div>
<div class="t" style="left:598.08px;transform:translateX(-50%);top:408.75px;font-size:7.14px;color:#222;">03:00</div>
<div class="t" style="left:381px;transform-origin:0 50%;top:419.8px;font-size:7.7px;color:#222;">Time</div>
<div class="t" style="right:852.3px;transform-origin:100% 50%;top:256.5px;font-size:7.46px;color:#222;">0</div>
<div class="t" style="right:852.3px;transform-origin:100% 50%;top:240.84px;font-size:7.46px;color:#222;">5</div>
<div class="t" style="right:852.3px;transform-origin:100% 50%;top:225.18px;font-size:7.46px;color:#222;">10</div>
<div class="t" style="right:852.3px;transform-origin:100% 50%;top:209.51999999999998px;font-size:7.46px;color:#222;">15</div>
<div class="t" style="right:852.3px;transform-origin:100% 50%;top:193.86px;font-size:7.46px;color:#222;">20</div>
<div class="t" style="right:852.3px;transform-origin:100% 50%;top:178.2px;font-size:7.46px;color:#222;">25</div>
<div class="t" style="right:852.3px;transform-origin:100% 50%;top:162.54px;font-size:7.46px;color:#222;">30</div>
<div class="t" style="right:852.3px;transform-origin:100% 50%;top:146.88px;font-size:7.46px;color:#222;">35</div>
<div class="t" style="right:852.3px;transform-origin:100% 50%;top:131.22px;font-size:7.46px;color:#222;">40</div>
<div class="t" style="right:852.3px;transform-origin:100% 50%;top:383.3px;font-size:7.46px;color:#222;">0</div>
<div class="t" style="right:852.3px;transform-origin:100% 50%;top:368.35px;font-size:7.46px;color:#222;">5</div>
<div class="t" style="right:852.3px;transform-origin:100% 50%;top:353.40000000000003px;font-size:7.46px;color:#222;">10</div>
<div class="t" style="right:852.3px;transform-origin:100% 50%;top:338.45px;font-size:7.46px;color:#222;">15</div>
<div class="t" style="right:852.3px;transform-origin:100% 50%;top:323.5px;font-size:7.46px;color:#222;">20</div>
<div class="t" style="right:852.3px;transform-origin:100% 50%;top:308.55px;font-size:7.46px;color:#222;">25</div>
<div class="t" style="right:852.3px;transform-origin:100% 50%;top:293.6px;font-size:7.46px;color:#222;">30</div>
<div class="t" style="right:852.3px;transform-origin:100% 50%;top:278.65000000000003px;font-size:7.46px;color:#222;">35</div>
<div class="t" style="right:852.3px;transform-origin:100% 50%;top:263.7px;font-size:7.46px;color:#222;">40</div>
<div class="t" style="left:151.5px;top:220px;transform-origin:0 0;transform:rotate(-90deg);font-size:7.9px">Speed (mi/h)</div>
<div class="t" style="left:151.5px;top:350.3px;transform-origin:0 0;transform:rotate(-90deg);font-size:7.9px">Speed (mi/h)</div>
<div class="t" style="left:178.8px;transform-origin:0 50%;top:135.2px;font-size:7.74px;color:#1a1a1a;"><span style="color:#e0e0e0">iBike</span> <span style="color:#e83c3c">Topografix GPX Before</span></div>
<div class="t" style="left:178.8px;transform-origin:0 50%;top:268.2px;font-size:7.74px;color:#1a1a1a;"><span style="color:#e0e0e0">iBike</span> <span style="color:#22dd22">Topografix GPX After</span></div>
<div class="t" style="left:137.2px;transform-origin:0 50%;top:442.3px;font-size:7.05px;color:#a8a8a8;">1.000 s</div>
<div class="t" style="left:185px;transform-origin:0 50%;top:442.3px;font-size:7.05px;color:#a8a8a8;">0 s</div>
<div style="position:absolute;left:519.4px;top:441.2px;width:48.60000000000002px;height:14.199999999999989px;background:#fdfdfd;border:1px solid #3c82d2;border-radius:3px"></div>
<div class="t" style="left:543.7px;transform:translateX(-50%);top:443.5px;font-size:7.8px;color:#1a1a1a;">Accept</div>
<div style="position:absolute;left:581.6px;top:441.2px;width:48.19999999999993px;height:14.199999999999989px;background:#fdfdfd;border:1px solid #dadada;border-radius:3px"></div>
<div class="t" style="left:605.7px;transform:translateX(-50%);top:443.5px;font-size:7.7px;color:#1a1a1a;">Cancel</div>
<div style="position:absolute;left:0px;top:544px;width:1024px;height:32px;background:linear-gradient(#e4ebf4,#dde6f1)"></div>
<div style="position:absolute;left:0px;top:544px;width:1024px;height:1px;background:#d0d6de"></div>
<svg width="1024" height="576">
<rect x="13.7" y="552" width="7.4" height="7.4" fill="#1e90e8"/><rect x="21.9" y="552" width="7.4" height="7.4" fill="#2aa4f0"/>
<rect x="13.7" y="560.2" width="7.4" height="7.4" fill="#1080d8"/><rect x="21.9" y="560.2" width="7.4" height="7.4" fill="#1a94e4"/>
<rect x="39" y="549.7" width="144.6" height="20.7" rx="10.3" fill="#f6f8fb" stroke="#d8dde4" stroke-width="0.8"/>
<circle cx="50" cy="559" r="3.6" fill="none" stroke="#222" stroke-width="1.2"/><line x1="52.5" y1="561.5" x2="55.5" y2="564.5" stroke="#222" stroke-width="1.3"/>
</svg>
<div class="t" style="left:62.9px;transform-origin:0 50%;top:555px;font-size:8.6px;color:#555;">Search</div>
<svg width="1024" height="576"><ellipse cx="200" cy="556" rx="6" ry="2.5" fill="#f0a020"/><ellipse cx="200" cy="560" rx="6" ry="2.5" fill="#e89018"/><ellipse cx="200" cy="564" rx="6" ry="2.5" fill="#f0a020"/><circle cx="206" cy="552" r="4" fill="#d83030"/><text x="204.3" y="554.6" font-size="6" fill="#fff" font-family="Liberation Sans">1</text><path d="M198 569 L201 566.5 L204 569" stroke="#20a040" stroke-width="1.3" fill="none"/><rect x="223" y="554" width="10" height="10" rx="1.5" fill="#5a62c8"/><circle cx="236" cy="555" r="2.3" fill="#7b83eb"/><rect x="233" y="557" width="6" height="7" rx="2" fill="#7b83eb"/><text x="225.5" y="562.5" font-size="7.5" font-weight="bold" fill="#fff" font-family="Liberation Sans">T</text><circle cx="260" cy="559.5" r="8" fill="#1470c8"/><path d="M252.2 561 Q253 567.5 260 567.5 Q265 567.5 267 564 Q262 566 258.5 563.5 Q255.5 561 257 557 Q254 558 252.2 561 Z" fill="#38c0a0"/><path d="M257.5 560.5 Q258 556 262.5 556 Q267 556.5 268 560 L268 562 Q266 563.5 262 563 L258 563 Z" fill="#e4ebf4"/><path d="M253 556 Q256 551.5 261 551.5 Q266 552 268 557" stroke="#2a9af0" stroke-width="1.6" fill="none"/><rect x="281" y="554" width="15" height="13" rx="2" fill="#1a4f88"/><path d="M285 554 Q288.5 548 292 554" stroke="#2a70c0" stroke-width="1.5" fill="none"/><rect x="285.5" y="557" width="3" height="3" fill="#f25022"/><rect x="289" y="557" width="3" height="3" fill="#7fba00"/><rect x="285.5" y="560.5" width="3" height="3" fill="#00a4ef"/><rect x="289" y="560.5" width="3" height="3" fill="#ffb900"/><rect x="313" y="552" width="13" height="15" rx="1.5" fill="#1070c8"/><rect x="309" y="555" width="9" height="9" rx="1" fill="#0a5aa8"/><circle cx="313.5" cy="559.5" r="2.5" fill="none" stroke="#fff" stroke-width="1.2"/><circle cx="348" cy="559.5" r="7.8" fill="#db4437"/><path d="M348 559.5 L341.5 555.5 A7.8 7.8 0 0 0 344.5 566.5 Z" fill="#0f9d58"/><path d="M348 559.5 L344.5 566.5 A7.8 7.8 0 0 0 355.8 559.5 Z" fill="#f4c20d"/><circle cx="348" cy="559.5" r="3.6" fill="#fff"/><circle cx="348" cy="559.5" r="2.8" fill="#4285f4"/><path d="M368 553 L384 561 L380 567 L370 563 Z" fill="#9ac0e8"/><path d="M370 556 L382 562" stroke="#3a70b8" stroke-width="1.5"/><path d="M378 567 L384 566" stroke="#e08030" stroke-width="1.5"/><circle cx="405.5" cy="559.5" r="7.5" fill="#f0f0f0"/><circle cx="405.5" cy="559.5" r="7.5" fill="none" stroke="#333" stroke-width="1.1" stroke-dasharray="10 3"/><rect x="404" y="554" width="3.5" height="10" rx="1" fill="#c8a030"/><path d="M427 554 L433 554 L435 556 L444 556 L444 567 L427 567 Z" fill="#f0b820"/><rect x="427" y="558" width="17" height="9" fill="#ffd04a"/><g transform="translate(454.5,549.5) scale(1.3)"><path d="M5.2 2.6 L13.2 2.6 Q13.6 2.6 13.5 3.2 L11.6 13.4 Q11.5 14 10.9 14 L3.2 14 Q2.7 14 2.8 13.4 L4.6 3.2 Q4.7 2.6 5.2 2.6 Z" fill="#15506a"/><ellipse cx="9.6" cy="5.4" rx="2.2" ry="0.9" fill="#fff"/><path d="M6.3 7.6 L9.8 7.6 L9 12.4 L4.8 12.4 Z" fill="#fff"/></g><rect x="485" y="552" width="16" height="15" rx="2" fill="#c87838"/><path d="M486 566 L492 556 L500 566 Z" fill="#7a4a20"/><rect x="488" y="554" width="7" height="5" fill="#f0d0a0"/><circle cx="523" cy="559.5" r="6.5" fill="#1a60b0"/><circle cx="523" cy="559.5" r="5" fill="#2a80d8"/><text x="519.3" y="562.5" font-size="8" font-weight="bold" fill="#fff" font-family="Liberation Sans">M</text><circle cx="552.5" cy="559.5" r="8" fill="#c87818"/><circle cx="552.5" cy="559.5" r="6" fill="#f0a030"/><circle cx="552.5" cy="559.5" r="3.5" fill="#a05010"/><rect x="574" y="552" width="16" height="15" rx="2" fill="#2a80a8"/><path d="M575 561 L580 555 L584 559 L587 556 L590 561 Z" fill="#f0b030"/><rect x="574" y="562" width="16" height="5" fill="#e09030"/><circle cx="610" cy="561" r="7" fill="#2a90e0"/><text x="606.8" y="565" font-size="10" font-weight="bold" fill="#fff" font-family="Liberation Sans">?</text><circle cx="617" cy="553" r="4" fill="#f8c020"/><rect x="635" y="552" width="11" height="15" rx="1.5" fill="#4a5560"/><rect x="637" y="554" width="7" height="3" fill="#a8c8e8"/><rect x="637" y="559" width="7" height="6" fill="#9aa4ae"/><circle cx="670.5" cy="559.5" r="7.5" fill="#0a1a3a"/><path d="M673.5 556 A4 4 0 1 0 673.5 563" stroke="#fff" stroke-width="1.5" fill="none"/><rect x="345.5" y="570.8" width="5" height="1.4" rx="0.7" fill="#777"/><rect x="461.5" y="570.8" width="5" height="1.4" rx="0.7" fill="#777"/><path d="M790 561 L793.7 557.5 L797.4 561" stroke="#222" stroke-width="1" fill="none"/><rect x="809" y="554" width="10" height="11" rx="1" fill="#555"/><rect x="812" y="557" width="4" height="5" fill="#999"/><rect x="830" y="553" width="4" height="4" fill="#333"/><rect x="836" y="553" width="4" height="4" fill="#333"/><rect x="833" y="558" width="4" height="4" fill="#333"/><rect x="830" y="561" width="5" height="6" fill="#d02020"/><ellipse cx="857" cy="559.5" rx="4.5" ry="7" fill="#1a7ae0"/><path d="M855 555 L859 558 L856 560 L859 562 L855 565 M856 554 L856 565" stroke="#fff" stroke-width="0.8" fill="none"/><path d="M872 557 Q878 552 884 557 M874 559.5 Q878 556 882 559.5 M876 562 Q878 560 880 562" stroke="#222" stroke-width="1" fill="none"/><circle cx="878" cy="564" r="0.8" fill="#222"/><path d="M890 557 L892 557 L895 554 L895 565 L892 562 L890 562 Z" fill="none" stroke="#222" stroke-width="0.8"/><path d="M897 557.5 L900 561.5 M900 557.5 L897 561.5" stroke="#222" stroke-width="0.8"/><rect x="906" y="556" width="10" height="7" fill="#333"/><path d="M904 555 L908 552" stroke="#333"/><path d="M974 563 Q974 555 978 554 Q982 555 982 563 L983 564 L973 564 Z" fill="#1a60c8"/><circle cx="978" cy="565.5" r="1.3" fill="#1a60c8"/><path d="M994 556 Q1000 549 1008 553 L1004 562 Q998 566 994 562 Z" fill="#38a0f0"/><path d="M1000 556 Q1006 553 1010 558 L1006 566 Q1000 568 998 563 Z" fill="#f05ab0" opacity="0.85"/><rect x="1002" y="562" width="9" height="6" fill="#f8c020"/></svg>
<div class="t" style="right:56px;transform-origin:100% 50%;top:549px;font-size:7.5px;color:#222;">16:06</div>
<div class="t" style="right:56px;transform-origin:100% 50%;top:559.4px;font-size:8.1px;color:#222;">24/05/2024</div>
</body></html>
